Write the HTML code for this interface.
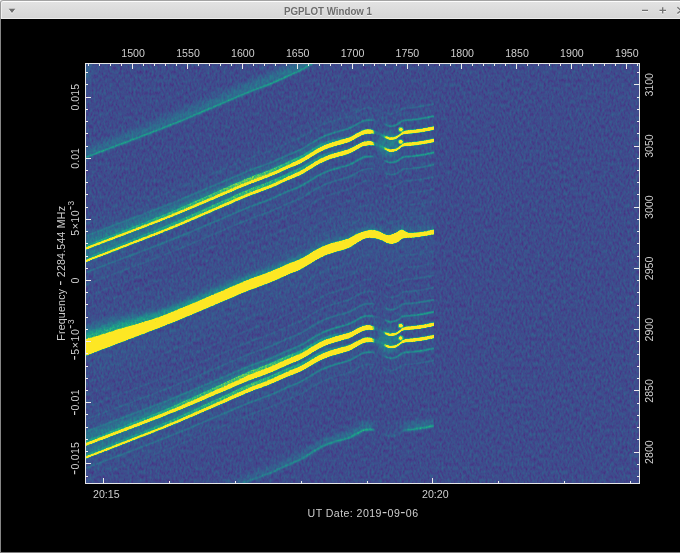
<!DOCTYPE html>
<html lang="en">
<head>
<meta charset="utf-8">
<title>PGPLOT Window 1</title>
<style>
html,body{margin:0;padding:0;background:#000;}
body{width:680px;height:553px;overflow:hidden;position:relative;font-family:"Liberation Sans",sans-serif;}
#win{position:absolute;left:0;top:0;width:680px;height:553px;background:#000;box-sizing:border-box;border-left:1px solid #868686;border-bottom:1px solid #7c7c7c;}
#titlebar{position:absolute;left:-1px;top:0;width:680px;height:19px;box-sizing:border-box;
  background:linear-gradient(#e3e3e3,#d5d5d5);border-top:1px solid #a4a4a4;border-left:1px solid #9a9a9a;border-top-left-radius:3px;
  box-shadow:inset 0 1px 0 #fdfdfd, inset 1px 0 0 #efefef, inset 0 -1px 0 #ececec;}
#title{opacity:0.99;position:absolute;left:-1.3px;width:656px;transform:scaleX(0.885);transform-origin:50% 50%;top:3px;height:14px;line-height:14px;text-align:center;font-weight:bold;font-size:11px;color:#6b6b6b;text-shadow:0 1px 0 #f4f4f4;letter-spacing:0px;}
#plot{position:absolute;left:0;top:0;}
#plot text{font-family:"Liberation Sans",sans-serif;font-size:10.6px;fill:#dedede;dominant-baseline:alphabetic;}
</style>
</head>
<body>
<div id="win">
<svg id="plot" width="680" height="553" viewBox="0 0 680 553" style="left:-1px">
<defs>
<filter id="cmap" x="0" y="0" width="100%" height="100%" filterUnits="objectBoundingBox" color-interpolation-filters="sRGB">
  <feTurbulence type="fractalNoise" baseFrequency="0.5 0.24" numOctaves="2" seed="7" result="t"/>
  <feColorMatrix in="t" type="matrix" values="1 0 0 0 0  1 0 0 0 0  1 0 0 0 0  0 0 0 0 1" result="n"/>
  <feTurbulence type="fractalNoise" baseFrequency="0.9 0.7" numOctaves="1" seed="3" result="t2"/>
  <feColorMatrix in="t2" type="matrix" values="0 1 0 0 0  0 1 0 0 0  0 1 0 0 0  0 0 0 0 1" result="n2"/>
  <feComposite in="SourceGraphic" in2="n2" operator="arithmetic" k1="0.7" k2="0.650" k3="0" k4="0" result="sp"/>
  <feComposite in="sp" in2="n" operator="arithmetic" k1="0" k2="1" k3="0.25" k4="0.103" result="s"/>
  <feComponentTransfer in="s">
    <feFuncR type="table" tableValues="0.275 0.284 0.289 0.289 0.284 0.276 0.264 0.249 0.233 0.217 0.202 0.187 0.174 0.161 0.149 0.138 0.128 0.121 0.121 0.132 0.158 0.197 0.246 0.304 0.369 0.440 0.516 0.596 0.678 0.762 0.846 0.926 0.993"/>
    <feFuncG type="table" tableValues="0.005 0.050 0.095 0.136 0.175 0.214 0.252 0.288 0.322 0.356 0.388 0.419 0.449 0.479 0.508 0.537 0.567 0.596 0.626 0.655 0.684 0.712 0.739 0.765 0.789 0.811 0.831 0.849 0.864 0.876 0.887 0.897 0.906"/>
    <feFuncB type="table" tableValues="0.353 0.398 0.438 0.472 0.500 0.522 0.538 0.549 0.556 0.560 0.562 0.562 0.562 0.560 0.558 0.555 0.551 0.544 0.533 0.520 0.502 0.479 0.452 0.420 0.383 0.341 0.294 0.243 0.190 0.137 0.100 0.104 0.144"/>
  </feComponentTransfer>
</filter>
<linearGradient id="gapg" gradientUnits="userSpaceOnUse" x1="370" y1="0" x2="390" y2="0">
  <stop offset="0" stop-color="#fff"/><stop offset="0.05" stop-color="#fff"/><stop offset="0.17" stop-color="#999"/><stop offset="0.27" stop-color="#1c1c1c"/>
  <stop offset="0.66" stop-color="#1c1c1c"/><stop offset="0.74" stop-color="#777"/><stop offset="0.86" stop-color="#fff"/><stop offset="1" stop-color="#fff"/>
</linearGradient>
<linearGradient id="gf" gradientUnits="userSpaceOnUse" x1="84" y1="0" x2="436" y2="0"><stop offset="0.000" stop-color="#fff" stop-opacity="0.320"/><stop offset="0.330" stop-color="#fff" stop-opacity="0.380"/><stop offset="0.614" stop-color="#fff" stop-opacity="0.550"/><stop offset="0.741" stop-color="#fff" stop-opacity="0.670"/><stop offset="0.912" stop-color="#fff" stop-opacity="0.700"/><stop offset="1.000" stop-color="#fff" stop-opacity="1.000"/></linearGradient>
<linearGradient id="gt" gradientUnits="userSpaceOnUse" x1="84" y1="0" x2="330" y2="0"><stop offset="0.000" stop-color="#fff" stop-opacity="0.500"/><stop offset="0.472" stop-color="#fff" stop-opacity="0.800"/><stop offset="1.000" stop-color="#fff" stop-opacity="1.000"/></linearGradient>
<linearGradient id="gl" gradientUnits="userSpaceOnUse" x1="84" y1="0" x2="436" y2="0"><stop offset="0.000" stop-color="#fff" stop-opacity="0.350"/><stop offset="0.472" stop-color="#fff" stop-opacity="0.500"/><stop offset="0.699" stop-color="#fff" stop-opacity="0.750"/><stop offset="0.790" stop-color="#fff" stop-opacity="1.250"/><stop offset="0.821" stop-color="#fff" stop-opacity="1.100"/><stop offset="0.835" stop-color="#fff" stop-opacity="0.150"/><stop offset="0.903" stop-color="#fff" stop-opacity="0.200"/><stop offset="0.923" stop-color="#fff" stop-opacity="0.900"/><stop offset="1.000" stop-color="#fff" stop-opacity="1.000"/></linearGradient>
<linearGradient id="gw" gradientUnits="userSpaceOnUse" x1="84" y1="0" x2="436" y2="0"><stop offset="0.000" stop-color="#fff" stop-opacity="0.075"/><stop offset="0.188" stop-color="#fff" stop-opacity="0.075"/><stop offset="0.472" stop-color="#fff" stop-opacity="0.080"/><stop offset="0.670" stop-color="#fff" stop-opacity="0.050"/><stop offset="0.741" stop-color="#fff" stop-opacity="0.020"/><stop offset="0.818" stop-color="#fff" stop-opacity="0.000"/><stop offset="1.000" stop-color="#fff" stop-opacity="0.000"/></linearGradient>
<linearGradient id="gn" gradientUnits="userSpaceOnUse" x1="84" y1="0" x2="436" y2="0"><stop offset="0.000" stop-color="#fff" stop-opacity="0.180"/><stop offset="0.188" stop-color="#fff" stop-opacity="0.240"/><stop offset="0.472" stop-color="#fff" stop-opacity="0.420"/><stop offset="0.670" stop-color="#fff" stop-opacity="0.220"/><stop offset="0.741" stop-color="#fff" stop-opacity="0.080"/><stop offset="0.818" stop-color="#fff" stop-opacity="0.040"/><stop offset="1.000" stop-color="#fff" stop-opacity="0.030"/></linearGradient>
<linearGradient id="ge" gradientUnits="userSpaceOnUse" x1="84" y1="0" x2="436" y2="0"><stop offset="0.000" stop-color="#fff" stop-opacity="0.095"/><stop offset="0.102" stop-color="#fff" stop-opacity="0.095"/><stop offset="0.216" stop-color="#fff" stop-opacity="0.080"/><stop offset="0.472" stop-color="#fff" stop-opacity="0.060"/><stop offset="0.727" stop-color="#fff" stop-opacity="0.040"/><stop offset="1.000" stop-color="#fff" stop-opacity="0.030"/></linearGradient>
<linearGradient id="ge2" gradientUnits="userSpaceOnUse" x1="84" y1="0" x2="436" y2="0"><stop offset="0.000" stop-color="#fff" stop-opacity="0.340"/><stop offset="0.102" stop-color="#fff" stop-opacity="0.320"/><stop offset="0.216" stop-color="#fff" stop-opacity="0.280"/><stop offset="0.472" stop-color="#fff" stop-opacity="0.200"/><stop offset="0.727" stop-color="#fff" stop-opacity="0.100"/><stop offset="1.000" stop-color="#fff" stop-opacity="0.050"/></linearGradient>
<mask id="gapmask" maskUnits="userSpaceOnUse" x="0" y="0" width="680" height="553">
  <rect x="0" y="0" width="680" height="553" fill="url(#gapg)"/>
</mask>
<filter id="b4" x="-5%" y="-5%" width="110%" height="110%" color-interpolation-filters="sRGB"><feGaussianBlur stdDeviation="2.2 2.6"/></filter>
<filter id="b1" x="-5%" y="-5%" width="110%" height="110%" color-interpolation-filters="sRGB"><feGaussianBlur stdDeviation="0.8"/></filter>
<filter id="b0" x="-5%" y="-5%" width="110%" height="110%" color-interpolation-filters="sRGB"><feGaussianBlur stdDeviation="0.62"/></filter>
<clipPath id="cp"><rect x="85" y="63" width="349" height="421"/></clipPath>
<clipPath id="box"><rect x="85" y="63" width="555" height="421"/></clipPath>
</defs>
<g clip-path="url(#box)">
<g filter="url(#cmap)">
<rect x="80" y="58" width="565" height="431" fill="#000"/>
<g clip-path="url(#cp)">
<g filter="url(#b4)">
<ellipse cx="84" cy="64" rx="9" ry="20" fill="#fff" fill-opacity="0.07"/>
<path d="M84.0,255.1 L87.0,253.9 L90.0,252.8 L93.0,251.6 L96.0,250.5 L99.0,249.3 L102.0,248.2 L105.0,247.1 L108.0,245.9 L111.0,244.8 L114.0,243.7 L117.0,242.5 L120.0,241.4 L123.0,240.3 L126.0,239.1 L129.0,238.0 L132.0,236.8 L135.0,235.7 L138.0,234.6 L141.0,233.4 L144.0,232.3 L147.0,231.1 L150.0,230.0 L153.0,228.8 L156.0,227.7 L159.0,226.5 L162.0,225.4 L165.0,224.2 L168.0,223.0 L171.0,221.8 L174.0,220.6 L177.0,219.4 L180.0,218.1 L183.0,216.9 L186.0,215.6 L189.0,214.4 L192.0,213.1 L195.0,211.8 L198.0,210.6 L201.0,209.3 L204.0,208.0 L207.0,206.7 L210.0,205.4 L213.0,204.2 L216.0,202.9 L219.0,201.6 L222.0,200.4 L225.0,199.1 L228.0,197.8 L231.0,196.5 L234.0,195.2 L237.0,193.9 L240.0,192.6 L243.0,191.4 L246.0,190.1 L249.0,188.9 L252.0,187.7 L255.0,186.6 L258.0,185.5 L261.0,184.4 L264.0,183.3 L267.0,182.2 L270.0,181.0 L273.0,179.7 L276.0,178.4 L279.0,177.0 L282.0,175.7 L285.0,174.3 L288.0,172.9 L291.0,171.6 L294.0,170.3 L297.0,169.0 L300.0,167.6 L303.0,166.0 L306.0,164.2 L309.0,162.3 L312.0,160.3 L315.0,158.5 L318.0,156.7 L321.0,155.1 L324.0,153.7 L327.0,152.4 L330.0,151.3 L333.0,150.3 L336.0,149.4 L339.0,148.6 L342.0,147.7 L345.0,146.9 L348.0,146.0 L351.0,144.9 L354.0,143.2 L357.0,141.5 L360.0,139.9 L363.0,138.4 L366.0,137.7 L369.0,137.4 L372.0,137.6 L375.0,138.2 L378.0,139.1 L381.0,140.3 L384.0,142.0 L387.0,143.4 L390.0,144.3 L393.0,144.1 L396.0,143.4 L399.0,141.5 L402.0,139.1 L405.0,138.0 L408.0,137.7 L411.0,137.5 L414.0,137.2 L417.0,136.8 L420.0,136.4 L423.0,135.9 L426.0,135.4 L429.0,134.8 L432.0,134.2 L434.0,133.8" fill="none" stroke="#ffffff" stroke-width="70.00" stroke-opacity="0.012" />
<path d="M84.0,255.1 L87.0,253.9 L90.0,252.8 L93.0,251.6 L96.0,250.5 L99.0,249.3 L102.0,248.2 L105.0,247.1 L108.0,245.9 L111.0,244.8 L114.0,243.7 L117.0,242.5 L120.0,241.4 L123.0,240.3 L126.0,239.1 L129.0,238.0 L132.0,236.8 L135.0,235.7 L138.0,234.6 L141.0,233.4 L144.0,232.3 L147.0,231.1 L150.0,230.0 L153.0,228.8 L156.0,227.7 L159.0,226.5 L162.0,225.4 L165.0,224.2 L168.0,223.0 L171.0,221.8 L174.0,220.6 L177.0,219.4 L180.0,218.1 L183.0,216.9 L186.0,215.6 L189.0,214.4 L192.0,213.1 L195.0,211.8 L198.0,210.6 L201.0,209.3 L204.0,208.0 L207.0,206.7 L210.0,205.4 L213.0,204.2 L216.0,202.9 L219.0,201.6 L222.0,200.4 L225.0,199.1 L228.0,197.8 L231.0,196.5 L234.0,195.2 L237.0,193.9 L240.0,192.6 L243.0,191.4 L246.0,190.1 L249.0,188.9 L252.0,187.7 L255.0,186.6 L258.0,185.5 L261.0,184.4 L264.0,183.3 L267.0,182.2 L270.0,181.0 L273.0,179.7 L276.0,178.4 L279.0,177.0 L282.0,175.7 L285.0,174.3 L288.0,172.9 L291.0,171.6 L294.0,170.3 L297.0,169.0 L300.0,167.6 L303.0,166.0 L306.0,164.2 L309.0,162.3 L312.0,160.3 L315.0,158.5 L318.0,156.7 L321.0,155.1 L324.0,153.7 L327.0,152.4 L330.0,151.3 L333.0,150.3 L336.0,149.4 L339.0,148.6 L342.0,147.7 L345.0,146.9 L348.0,146.0 L351.0,144.9 L354.0,143.2 L357.0,141.5 L360.0,139.9 L363.0,138.4 L366.0,137.7 L369.0,137.4 L372.0,137.6 L375.0,138.2 L378.0,139.1 L381.0,140.3 L384.0,142.0 L387.0,143.4 L390.0,144.3 L393.0,144.1 L396.0,143.4 L399.0,141.5 L402.0,139.1 L405.0,138.0 L408.0,137.7 L411.0,137.5 L414.0,137.2 L417.0,136.8 L420.0,136.4 L423.0,135.9 L426.0,135.4 L429.0,134.8 L432.0,134.2 L434.0,133.8" fill="none" stroke="#ffffff" stroke-width="50.00" stroke-opacity="0.012" />
<path d="M84.0,255.1 L87.0,253.9 L90.0,252.8 L93.0,251.6 L96.0,250.5 L99.0,249.3 L102.0,248.2 L105.0,247.1 L108.0,245.9 L111.0,244.8 L114.0,243.7 L117.0,242.5 L120.0,241.4 L123.0,240.3 L126.0,239.1 L129.0,238.0 L132.0,236.8 L135.0,235.7 L138.0,234.6 L141.0,233.4 L144.0,232.3 L147.0,231.1 L150.0,230.0 L153.0,228.8 L156.0,227.7 L159.0,226.5 L162.0,225.4 L165.0,224.2 L168.0,223.0 L171.0,221.8 L174.0,220.6 L177.0,219.4 L180.0,218.1 L183.0,216.9 L186.0,215.6 L189.0,214.4 L192.0,213.1 L195.0,211.8 L198.0,210.6 L201.0,209.3 L204.0,208.0 L207.0,206.7 L210.0,205.4 L213.0,204.2 L216.0,202.9 L219.0,201.6 L222.0,200.4 L225.0,199.1 L228.0,197.8 L231.0,196.5 L234.0,195.2 L237.0,193.9 L240.0,192.6 L243.0,191.4 L246.0,190.1 L249.0,188.9 L252.0,187.7 L255.0,186.6 L258.0,185.5 L261.0,184.4 L264.0,183.3 L267.0,182.2 L270.0,181.0 L273.0,179.7 L276.0,178.4 L279.0,177.0 L282.0,175.7 L285.0,174.3 L288.0,172.9 L291.0,171.6 L294.0,170.3 L297.0,169.0 L300.0,167.6 L303.0,166.0 L306.0,164.2 L309.0,162.3 L312.0,160.3 L315.0,158.5 L318.0,156.7 L321.0,155.1 L324.0,153.7 L327.0,152.4 L330.0,151.3 L333.0,150.3 L336.0,149.4 L339.0,148.6 L342.0,147.7 L345.0,146.9 L348.0,146.0 L351.0,144.9 L354.0,143.2 L357.0,141.5 L360.0,139.9 L363.0,138.4 L366.0,137.7 L369.0,137.4 L372.0,137.6 L375.0,138.2 L378.0,139.1 L381.0,140.3 L384.0,142.0 L387.0,143.4 L390.0,144.3 L393.0,144.1 L396.0,143.4 L399.0,141.5 L402.0,139.1 L405.0,138.0 L408.0,137.7 L411.0,137.5 L414.0,137.2 L417.0,136.8 L420.0,136.4 L423.0,135.9 L426.0,135.4 L429.0,134.8 L432.0,134.2 L434.0,133.8" fill="none" stroke="#ffffff" stroke-width="30.00" stroke-opacity="0.012" />
<path d="M84.0,351.1 L87.0,349.9 L90.0,348.8 L93.0,347.6 L96.0,346.5 L99.0,345.3 L102.0,344.2 L105.0,343.1 L108.0,341.9 L111.0,340.8 L114.0,339.7 L117.0,338.5 L120.0,337.4 L123.0,336.3 L126.0,335.1 L129.0,334.0 L132.0,332.8 L135.0,331.7 L138.0,330.6 L141.0,329.4 L144.0,328.3 L147.0,327.1 L150.0,326.0 L153.0,324.8 L156.0,323.7 L159.0,322.5 L162.0,321.4 L165.0,320.2 L168.0,319.0 L171.0,317.8 L174.0,316.6 L177.0,315.4 L180.0,314.1 L183.0,312.9 L186.0,311.6 L189.0,310.4 L192.0,309.1 L195.0,307.8 L198.0,306.6 L201.0,305.3 L204.0,304.0 L207.0,302.7 L210.0,301.4 L213.0,300.2 L216.0,298.9 L219.0,297.6 L222.0,296.4 L225.0,295.1 L228.0,293.8 L231.0,292.5 L234.0,291.2 L237.0,289.9 L240.0,288.6 L243.0,287.4 L246.0,286.1 L249.0,284.9 L252.0,283.7 L255.0,282.6 L258.0,281.5 L261.0,280.4 L264.0,279.3 L267.0,278.2 L270.0,277.0 L273.0,275.7 L276.0,274.4 L279.0,273.0 L282.0,271.7 L285.0,270.3 L288.0,268.9 L291.0,267.6 L294.0,266.3 L297.0,265.0 L300.0,263.6 L303.0,262.0 L306.0,260.2 L309.0,258.3 L312.0,256.3 L315.0,254.5 L318.0,252.7 L321.0,251.1 L324.0,249.7 L327.0,248.4 L330.0,247.3 L333.0,246.3 L336.0,245.4 L339.0,244.6 L342.0,243.7 L345.0,242.9 L348.0,242.0 L351.0,240.9 L354.0,239.2 L357.0,237.5 L360.0,235.9 L363.0,234.4 L366.0,233.7 L369.0,233.4 L372.0,233.6 L375.0,234.2 L378.0,235.1 L381.0,236.3 L384.0,238.0 L387.0,239.4 L390.0,240.3 L393.0,240.1 L396.0,239.4 L399.0,237.5 L402.0,235.1 L405.0,234.0 L408.0,233.7 L411.0,233.5 L414.0,233.2 L417.0,232.8 L420.0,232.4 L423.0,231.9 L426.0,231.4 L429.0,230.8 L432.0,230.2 L434.0,229.8" fill="none" stroke="#ffffff" stroke-width="70.00" stroke-opacity="0.012" />
<path d="M84.0,351.1 L87.0,349.9 L90.0,348.8 L93.0,347.6 L96.0,346.5 L99.0,345.3 L102.0,344.2 L105.0,343.1 L108.0,341.9 L111.0,340.8 L114.0,339.7 L117.0,338.5 L120.0,337.4 L123.0,336.3 L126.0,335.1 L129.0,334.0 L132.0,332.8 L135.0,331.7 L138.0,330.6 L141.0,329.4 L144.0,328.3 L147.0,327.1 L150.0,326.0 L153.0,324.8 L156.0,323.7 L159.0,322.5 L162.0,321.4 L165.0,320.2 L168.0,319.0 L171.0,317.8 L174.0,316.6 L177.0,315.4 L180.0,314.1 L183.0,312.9 L186.0,311.6 L189.0,310.4 L192.0,309.1 L195.0,307.8 L198.0,306.6 L201.0,305.3 L204.0,304.0 L207.0,302.7 L210.0,301.4 L213.0,300.2 L216.0,298.9 L219.0,297.6 L222.0,296.4 L225.0,295.1 L228.0,293.8 L231.0,292.5 L234.0,291.2 L237.0,289.9 L240.0,288.6 L243.0,287.4 L246.0,286.1 L249.0,284.9 L252.0,283.7 L255.0,282.6 L258.0,281.5 L261.0,280.4 L264.0,279.3 L267.0,278.2 L270.0,277.0 L273.0,275.7 L276.0,274.4 L279.0,273.0 L282.0,271.7 L285.0,270.3 L288.0,268.9 L291.0,267.6 L294.0,266.3 L297.0,265.0 L300.0,263.6 L303.0,262.0 L306.0,260.2 L309.0,258.3 L312.0,256.3 L315.0,254.5 L318.0,252.7 L321.0,251.1 L324.0,249.7 L327.0,248.4 L330.0,247.3 L333.0,246.3 L336.0,245.4 L339.0,244.6 L342.0,243.7 L345.0,242.9 L348.0,242.0 L351.0,240.9 L354.0,239.2 L357.0,237.5 L360.0,235.9 L363.0,234.4 L366.0,233.7 L369.0,233.4 L372.0,233.6 L375.0,234.2 L378.0,235.1 L381.0,236.3 L384.0,238.0 L387.0,239.4 L390.0,240.3 L393.0,240.1 L396.0,239.4 L399.0,237.5 L402.0,235.1 L405.0,234.0 L408.0,233.7 L411.0,233.5 L414.0,233.2 L417.0,232.8 L420.0,232.4 L423.0,231.9 L426.0,231.4 L429.0,230.8 L432.0,230.2 L434.0,229.8" fill="none" stroke="#ffffff" stroke-width="50.00" stroke-opacity="0.012" />
<path d="M84.0,351.1 L87.0,349.9 L90.0,348.8 L93.0,347.6 L96.0,346.5 L99.0,345.3 L102.0,344.2 L105.0,343.1 L108.0,341.9 L111.0,340.8 L114.0,339.7 L117.0,338.5 L120.0,337.4 L123.0,336.3 L126.0,335.1 L129.0,334.0 L132.0,332.8 L135.0,331.7 L138.0,330.6 L141.0,329.4 L144.0,328.3 L147.0,327.1 L150.0,326.0 L153.0,324.8 L156.0,323.7 L159.0,322.5 L162.0,321.4 L165.0,320.2 L168.0,319.0 L171.0,317.8 L174.0,316.6 L177.0,315.4 L180.0,314.1 L183.0,312.9 L186.0,311.6 L189.0,310.4 L192.0,309.1 L195.0,307.8 L198.0,306.6 L201.0,305.3 L204.0,304.0 L207.0,302.7 L210.0,301.4 L213.0,300.2 L216.0,298.9 L219.0,297.6 L222.0,296.4 L225.0,295.1 L228.0,293.8 L231.0,292.5 L234.0,291.2 L237.0,289.9 L240.0,288.6 L243.0,287.4 L246.0,286.1 L249.0,284.9 L252.0,283.7 L255.0,282.6 L258.0,281.5 L261.0,280.4 L264.0,279.3 L267.0,278.2 L270.0,277.0 L273.0,275.7 L276.0,274.4 L279.0,273.0 L282.0,271.7 L285.0,270.3 L288.0,268.9 L291.0,267.6 L294.0,266.3 L297.0,265.0 L300.0,263.6 L303.0,262.0 L306.0,260.2 L309.0,258.3 L312.0,256.3 L315.0,254.5 L318.0,252.7 L321.0,251.1 L324.0,249.7 L327.0,248.4 L330.0,247.3 L333.0,246.3 L336.0,245.4 L339.0,244.6 L342.0,243.7 L345.0,242.9 L348.0,242.0 L351.0,240.9 L354.0,239.2 L357.0,237.5 L360.0,235.9 L363.0,234.4 L366.0,233.7 L369.0,233.4 L372.0,233.6 L375.0,234.2 L378.0,235.1 L381.0,236.3 L384.0,238.0 L387.0,239.4 L390.0,240.3 L393.0,240.1 L396.0,239.4 L399.0,237.5 L402.0,235.1 L405.0,234.0 L408.0,233.7 L411.0,233.5 L414.0,233.2 L417.0,232.8 L420.0,232.4 L423.0,231.9 L426.0,231.4 L429.0,230.8 L432.0,230.2 L434.0,229.8" fill="none" stroke="#ffffff" stroke-width="30.00" stroke-opacity="0.012" />
<path d="M84.0,450.1 L87.0,448.9 L90.0,447.8 L93.0,446.6 L96.0,445.5 L99.0,444.3 L102.0,443.2 L105.0,442.1 L108.0,440.9 L111.0,439.8 L114.0,438.7 L117.0,437.5 L120.0,436.4 L123.0,435.3 L126.0,434.1 L129.0,433.0 L132.0,431.8 L135.0,430.7 L138.0,429.6 L141.0,428.4 L144.0,427.3 L147.0,426.1 L150.0,425.0 L153.0,423.8 L156.0,422.7 L159.0,421.5 L162.0,420.4 L165.0,419.2 L168.0,418.0 L171.0,416.8 L174.0,415.6 L177.0,414.4 L180.0,413.1 L183.0,411.9 L186.0,410.6 L189.0,409.4 L192.0,408.1 L195.0,406.8 L198.0,405.6 L201.0,404.3 L204.0,403.0 L207.0,401.7 L210.0,400.4 L213.0,399.2 L216.0,397.9 L219.0,396.6 L222.0,395.4 L225.0,394.1 L228.0,392.8 L231.0,391.5 L234.0,390.2 L237.0,388.9 L240.0,387.6 L243.0,386.4 L246.0,385.1 L249.0,383.9 L252.0,382.7 L255.0,381.6 L258.0,380.5 L261.0,379.4 L264.0,378.3 L267.0,377.2 L270.0,376.0 L273.0,374.7 L276.0,373.4 L279.0,372.0 L282.0,370.7 L285.0,369.3 L288.0,367.9 L291.0,366.6 L294.0,365.3 L297.0,364.0 L300.0,362.6 L303.0,361.0 L306.0,359.2 L309.0,357.3 L312.0,355.3 L315.0,353.5 L318.0,351.7 L321.0,350.1 L324.0,348.7 L327.0,347.4 L330.0,346.3 L333.0,345.3 L336.0,344.4 L339.0,343.6 L342.0,342.7 L345.0,341.9 L348.0,341.0 L351.0,339.9 L354.0,338.2 L357.0,336.5 L360.0,334.9 L363.0,333.4 L366.0,332.7 L369.0,332.4 L372.0,332.6 L375.0,333.2 L378.0,334.1 L381.0,335.3 L384.0,337.0 L387.0,338.4 L390.0,339.3 L393.0,339.1 L396.0,338.4 L399.0,336.5 L402.0,334.1 L405.0,333.0 L408.0,332.7 L411.0,332.5 L414.0,332.2 L417.0,331.8 L420.0,331.4 L423.0,330.9 L426.0,330.4 L429.0,329.8 L432.0,329.2 L434.0,328.8" fill="none" stroke="#ffffff" stroke-width="70.00" stroke-opacity="0.012" />
<path d="M84.0,450.1 L87.0,448.9 L90.0,447.8 L93.0,446.6 L96.0,445.5 L99.0,444.3 L102.0,443.2 L105.0,442.1 L108.0,440.9 L111.0,439.8 L114.0,438.7 L117.0,437.5 L120.0,436.4 L123.0,435.3 L126.0,434.1 L129.0,433.0 L132.0,431.8 L135.0,430.7 L138.0,429.6 L141.0,428.4 L144.0,427.3 L147.0,426.1 L150.0,425.0 L153.0,423.8 L156.0,422.7 L159.0,421.5 L162.0,420.4 L165.0,419.2 L168.0,418.0 L171.0,416.8 L174.0,415.6 L177.0,414.4 L180.0,413.1 L183.0,411.9 L186.0,410.6 L189.0,409.4 L192.0,408.1 L195.0,406.8 L198.0,405.6 L201.0,404.3 L204.0,403.0 L207.0,401.7 L210.0,400.4 L213.0,399.2 L216.0,397.9 L219.0,396.6 L222.0,395.4 L225.0,394.1 L228.0,392.8 L231.0,391.5 L234.0,390.2 L237.0,388.9 L240.0,387.6 L243.0,386.4 L246.0,385.1 L249.0,383.9 L252.0,382.7 L255.0,381.6 L258.0,380.5 L261.0,379.4 L264.0,378.3 L267.0,377.2 L270.0,376.0 L273.0,374.7 L276.0,373.4 L279.0,372.0 L282.0,370.7 L285.0,369.3 L288.0,367.9 L291.0,366.6 L294.0,365.3 L297.0,364.0 L300.0,362.6 L303.0,361.0 L306.0,359.2 L309.0,357.3 L312.0,355.3 L315.0,353.5 L318.0,351.7 L321.0,350.1 L324.0,348.7 L327.0,347.4 L330.0,346.3 L333.0,345.3 L336.0,344.4 L339.0,343.6 L342.0,342.7 L345.0,341.9 L348.0,341.0 L351.0,339.9 L354.0,338.2 L357.0,336.5 L360.0,334.9 L363.0,333.4 L366.0,332.7 L369.0,332.4 L372.0,332.6 L375.0,333.2 L378.0,334.1 L381.0,335.3 L384.0,337.0 L387.0,338.4 L390.0,339.3 L393.0,339.1 L396.0,338.4 L399.0,336.5 L402.0,334.1 L405.0,333.0 L408.0,332.7 L411.0,332.5 L414.0,332.2 L417.0,331.8 L420.0,331.4 L423.0,330.9 L426.0,330.4 L429.0,329.8 L432.0,329.2 L434.0,328.8" fill="none" stroke="#ffffff" stroke-width="50.00" stroke-opacity="0.012" />
<path d="M84.0,450.1 L87.0,448.9 L90.0,447.8 L93.0,446.6 L96.0,445.5 L99.0,444.3 L102.0,443.2 L105.0,442.1 L108.0,440.9 L111.0,439.8 L114.0,438.7 L117.0,437.5 L120.0,436.4 L123.0,435.3 L126.0,434.1 L129.0,433.0 L132.0,431.8 L135.0,430.7 L138.0,429.6 L141.0,428.4 L144.0,427.3 L147.0,426.1 L150.0,425.0 L153.0,423.8 L156.0,422.7 L159.0,421.5 L162.0,420.4 L165.0,419.2 L168.0,418.0 L171.0,416.8 L174.0,415.6 L177.0,414.4 L180.0,413.1 L183.0,411.9 L186.0,410.6 L189.0,409.4 L192.0,408.1 L195.0,406.8 L198.0,405.6 L201.0,404.3 L204.0,403.0 L207.0,401.7 L210.0,400.4 L213.0,399.2 L216.0,397.9 L219.0,396.6 L222.0,395.4 L225.0,394.1 L228.0,392.8 L231.0,391.5 L234.0,390.2 L237.0,388.9 L240.0,387.6 L243.0,386.4 L246.0,385.1 L249.0,383.9 L252.0,382.7 L255.0,381.6 L258.0,380.5 L261.0,379.4 L264.0,378.3 L267.0,377.2 L270.0,376.0 L273.0,374.7 L276.0,373.4 L279.0,372.0 L282.0,370.7 L285.0,369.3 L288.0,367.9 L291.0,366.6 L294.0,365.3 L297.0,364.0 L300.0,362.6 L303.0,361.0 L306.0,359.2 L309.0,357.3 L312.0,355.3 L315.0,353.5 L318.0,351.7 L321.0,350.1 L324.0,348.7 L327.0,347.4 L330.0,346.3 L333.0,345.3 L336.0,344.4 L339.0,343.6 L342.0,342.7 L345.0,341.9 L348.0,341.0 L351.0,339.9 L354.0,338.2 L357.0,336.5 L360.0,334.9 L363.0,333.4 L366.0,332.7 L369.0,332.4 L372.0,332.6 L375.0,333.2 L378.0,334.1 L381.0,335.3 L384.0,337.0 L387.0,338.4 L390.0,339.3 L393.0,339.1 L396.0,338.4 L399.0,336.5 L402.0,334.1 L405.0,333.0 L408.0,332.7 L411.0,332.5 L414.0,332.2 L417.0,331.8 L420.0,331.4 L423.0,330.9 L426.0,330.4 L429.0,329.8 L432.0,329.2 L434.0,328.8" fill="none" stroke="#ffffff" stroke-width="30.00" stroke-opacity="0.012" />
<path d="M84.0,325.8 L87.0,325.0 L90.0,324.3 L93.0,323.5 L96.0,322.8 L99.0,322.0 L102.0,321.1 L105.0,320.2 L108.0,319.4 L111.0,318.5 L114.0,317.6 L117.0,316.9 L120.0,316.2 L123.0,315.5 L126.0,315.0 L129.0,314.6 L132.0,314.2 L135.0,313.8 L138.0,313.4 L141.0,313.1 L144.0,312.7 L147.0,312.3 L150.0,311.8 L153.0,311.3 L156.0,310.7 L159.0,309.9 L162.0,308.9 L165.0,307.9 L168.0,306.8 L171.0,305.7 L174.0,304.6 L177.0,303.5 L180.0,302.4 L183.0,301.3 L186.0,300.1 L189.0,298.9 L192.0,297.7 L195.0,296.5 L198.0,295.3 L201.0,294.1 L204.0,292.9 L207.0,291.7 L210.0,290.5 L213.0,289.3 L216.0,288.1 L219.0,286.8 L222.0,285.6 L225.0,284.4 L228.0,283.2 L231.0,281.9 L234.0,280.7 L237.0,279.5 L240.0,278.2 L243.0,277.1 L246.0,275.9 L249.0,274.7 L252.0,273.6 L255.0,272.6 L258.0,271.6 L261.0,270.6 L264.0,269.6 L267.0,268.5 L270.0,267.4 L273.0,266.3 L276.0,265.0 L279.0,263.8 L282.0,262.5 L285.0,261.2 L288.0,260.0 L291.0,258.8 L294.0,257.7 L297.0,256.6 L300.0,255.4 L303.0,253.9 L306.0,252.2 L309.0,250.4 L312.0,248.7 L315.0,247.0 L318.0,245.3 L321.0,243.8 L324.0,242.5 L327.0,241.4 L330.0,240.4 L333.0,239.5 L336.0,238.8 L339.0,238.0 L342.0,237.2 L345.0,236.4 L348.0,235.5 L351.0,234.3 L354.0,232.5 L357.0,231.0 L360.0,229.8 L363.0,228.7 L366.0,227.9 L369.0,227.3 L372.0,227.1 L375.0,227.4 L378.0,228.2 L381.0,229.6 L384.0,231.3 L387.0,232.5 L390.0,232.5 L393.0,231.3 L396.0,230.2 L399.0,228.2 L402.0,226.9 L405.0,228.4 L408.0,230.2 L411.0,230.6 L414.0,230.4 L417.0,230.1 L420.0,229.8 L423.0,229.3 L426.0,228.8 L429.0,228.3 L432.0,227.6 L434.0,227.2 L434.0,229.7 L432.0,230.2 L429.0,230.8 L426.0,231.4 L423.0,231.9 L420.0,232.4 L417.0,232.7 L414.0,233.0 L411.0,233.3 L408.0,232.9 L405.0,231.2 L402.0,229.7 L399.0,231.1 L396.0,233.1 L393.0,234.2 L390.0,235.4 L387.0,235.4 L384.0,234.3 L381.0,232.6 L378.0,231.3 L375.0,230.5 L372.0,230.2 L369.0,230.4 L366.0,231.1 L363.0,231.9 L360.0,233.1 L357.0,234.2 L354.0,235.8 L351.0,237.6 L348.0,238.9 L345.0,239.9 L342.0,240.7 L339.0,241.5 L336.0,242.3 L333.0,243.1 L330.0,244.0 L327.0,245.1 L324.0,246.3 L321.0,247.6 L318.0,249.1 L315.0,250.8 L312.0,252.6 L309.0,254.4 L306.0,256.2 L303.0,257.9 L300.0,259.5 L297.0,260.8 L294.0,261.9 L291.0,263.0 L288.0,264.3 L285.0,265.5 L282.0,266.9 L279.0,268.2 L276.0,269.5 L273.0,270.8 L270.0,272.0 L267.0,273.2 L264.0,274.3 L261.0,275.4 L258.0,276.4 L255.0,277.5 L252.0,278.6 L249.0,279.8 L246.0,281.0 L243.0,282.2 L240.0,283.4 L237.0,284.7 L234.0,286.0 L231.0,287.3 L228.0,288.6 L225.0,289.9 L222.0,291.2 L219.0,292.5 L216.0,293.7 L213.0,295.0 L210.0,296.3 L207.0,297.6 L204.0,298.9 L201.0,300.2 L198.0,301.4 L195.0,302.7 L192.0,304.0 L189.0,305.3 L186.0,306.5 L183.0,307.8 L180.0,309.0 L177.0,310.3 L174.0,311.5 L171.0,312.7 L168.0,313.9 L165.0,315.1 L162.0,316.3 L159.0,317.5 L156.0,318.5 L153.0,319.5 L150.0,320.4 L147.0,321.3 L144.0,322.2 L141.0,323.1 L138.0,324.1 L135.0,324.9 L132.0,325.8 L129.0,326.7 L126.0,327.5 L123.0,328.3 L120.0,329.2 L117.0,330.0 L114.0,330.9 L111.0,331.9 L108.0,332.9 L105.0,333.9 L102.0,334.8 L99.0,335.8 L96.0,336.6 L93.0,337.4 L90.0,338.2 L87.0,339.0 L84.0,339.8Z" fill="url(#ge)" fill-opacity="1.000"/>
<path d="M84.0,330.8 L87.0,330.0 L90.0,329.2 L93.0,328.5 L96.0,327.7 L99.0,326.9 L102.0,326.0 L105.0,325.1 L108.0,324.1 L111.0,323.2 L114.0,322.3 L117.0,321.4 L120.0,320.7 L123.0,319.9 L126.0,319.3 L129.0,318.7 L132.0,318.0 L135.0,317.4 L138.0,316.8 L141.0,316.2 L144.0,315.6 L147.0,315.0 L150.0,314.3 L153.0,313.6 L156.0,312.8 L159.0,311.9 L162.0,310.9 L165.0,309.8 L168.0,308.7 L171.0,307.5 L174.0,306.4 L177.0,305.2 L180.0,304.0 L183.0,302.9 L186.0,301.7 L189.0,300.4 L192.0,299.2 L195.0,298.0 L198.0,296.8 L201.0,295.5 L204.0,294.3 L207.0,293.0 L210.0,291.8 L213.0,290.6 L216.0,289.3 L219.0,288.1 L222.0,286.8 L225.0,285.6 L228.0,284.3 L231.0,283.1 L234.0,281.8 L237.0,280.6 L240.0,279.3 L243.0,278.1 L246.0,276.9 L249.0,275.7 L252.0,274.6 L255.0,273.6 L258.0,272.5 L261.0,271.5 L264.0,270.5 L267.0,269.4 L270.0,268.3 L273.0,267.1 L276.0,265.8 L279.0,264.6 L282.0,263.3 L285.0,262.0 L288.0,260.7 L291.0,259.5 L294.0,258.4 L297.0,257.3 L300.0,256.1 L303.0,254.5 L306.0,252.8 L309.0,251.1 L312.0,249.3 L315.0,247.5 L318.0,245.9 L321.0,244.4 L324.0,243.1 L327.0,241.9 L330.0,240.9 L333.0,240.0 L336.0,239.3 L339.0,238.5 L342.0,237.7 L345.0,236.9 L348.0,236.0 L351.0,234.7 L354.0,233.0 L357.0,231.4 L360.0,230.3 L363.0,229.2 L366.0,228.4 L369.0,227.7 L372.0,227.5 L375.0,227.9 L378.0,228.7 L381.0,230.0 L384.0,231.8 L387.0,232.9 L390.0,232.9 L393.0,231.8 L396.0,230.6 L399.0,228.7 L402.0,227.4 L405.0,228.8 L408.0,230.6 L411.0,231.0 L414.0,230.8 L417.0,230.5 L420.0,230.2 L423.0,229.8 L426.0,229.3 L429.0,228.7 L432.0,228.1 L434.0,227.7 L434.0,229.7 L432.0,230.2 L429.0,230.8 L426.0,231.4 L423.0,231.9 L420.0,232.4 L417.0,232.7 L414.0,233.0 L411.0,233.3 L408.0,232.9 L405.0,231.2 L402.0,229.7 L399.0,231.1 L396.0,233.1 L393.0,234.2 L390.0,235.4 L387.0,235.4 L384.0,234.3 L381.0,232.6 L378.0,231.3 L375.0,230.5 L372.0,230.2 L369.0,230.4 L366.0,231.1 L363.0,231.9 L360.0,233.1 L357.0,234.2 L354.0,235.8 L351.0,237.6 L348.0,238.9 L345.0,239.9 L342.0,240.7 L339.0,241.5 L336.0,242.3 L333.0,243.1 L330.0,244.0 L327.0,245.1 L324.0,246.3 L321.0,247.6 L318.0,249.1 L315.0,250.8 L312.0,252.6 L309.0,254.4 L306.0,256.2 L303.0,257.9 L300.0,259.5 L297.0,260.8 L294.0,261.9 L291.0,263.0 L288.0,264.3 L285.0,265.5 L282.0,266.9 L279.0,268.2 L276.0,269.5 L273.0,270.8 L270.0,272.0 L267.0,273.2 L264.0,274.3 L261.0,275.4 L258.0,276.4 L255.0,277.5 L252.0,278.6 L249.0,279.8 L246.0,281.0 L243.0,282.2 L240.0,283.4 L237.0,284.7 L234.0,286.0 L231.0,287.3 L228.0,288.6 L225.0,289.9 L222.0,291.2 L219.0,292.5 L216.0,293.7 L213.0,295.0 L210.0,296.3 L207.0,297.6 L204.0,298.9 L201.0,300.2 L198.0,301.4 L195.0,302.7 L192.0,304.0 L189.0,305.3 L186.0,306.5 L183.0,307.8 L180.0,309.0 L177.0,310.3 L174.0,311.5 L171.0,312.7 L168.0,313.9 L165.0,315.1 L162.0,316.3 L159.0,317.5 L156.0,318.5 L153.0,319.5 L150.0,320.4 L147.0,321.3 L144.0,322.2 L141.0,323.1 L138.0,324.1 L135.0,324.9 L132.0,325.8 L129.0,326.7 L126.0,327.5 L123.0,328.3 L120.0,329.2 L117.0,330.0 L114.0,330.9 L111.0,331.9 L108.0,332.9 L105.0,333.9 L102.0,334.8 L99.0,335.8 L96.0,336.6 L93.0,337.4 L90.0,338.2 L87.0,339.0 L84.0,339.8Z" fill="url(#ge)" fill-opacity="1.000"/>
<path d="M84.0,334.8 L87.0,334.0 L90.0,333.2 L93.0,332.4 L96.0,331.6 L99.0,330.8 L102.0,329.8 L105.0,328.9 L108.0,327.9 L111.0,326.9 L114.0,325.9 L117.0,325.0 L120.0,324.2 L123.0,323.4 L126.0,322.6 L129.0,321.8 L132.0,321.0 L135.0,320.2 L138.0,319.4 L141.0,318.6 L144.0,317.8 L147.0,317.0 L150.0,316.2 L153.0,315.3 L156.0,314.4 L159.0,313.4 L162.0,312.3 L165.0,311.2 L168.0,310.1 L171.0,308.9 L174.0,307.7 L177.0,306.5 L180.0,305.3 L183.0,304.1 L186.0,302.9 L189.0,301.7 L192.0,300.4 L195.0,299.2 L198.0,298.0 L201.0,296.7 L204.0,295.5 L207.0,294.2 L210.0,292.9 L213.0,291.7 L216.0,290.4 L219.0,289.2 L222.0,288.0 L225.0,286.7 L228.0,285.4 L231.0,284.2 L234.0,282.9 L237.0,281.6 L240.0,280.4 L243.0,279.1 L246.0,277.9 L249.0,276.8 L252.0,275.6 L255.0,274.5 L258.0,273.5 L261.0,272.4 L264.0,271.4 L267.0,270.3 L270.0,269.2 L273.0,268.0 L276.0,266.7 L279.0,265.4 L282.0,264.1 L285.0,262.8 L288.0,261.5 L291.0,260.3 L294.0,259.2 L297.0,258.1 L300.0,256.8 L303.0,255.2 L306.0,253.5 L309.0,251.7 L312.0,249.9 L315.0,248.2 L318.0,246.5 L321.0,245.0 L324.0,243.7 L327.0,242.5 L330.0,241.5 L333.0,240.6 L336.0,239.8 L339.0,239.0 L342.0,238.2 L345.0,237.4 L348.0,236.4 L351.0,235.2 L354.0,233.4 L357.0,231.8 L360.0,230.7 L363.0,229.6 L366.0,228.7 L369.0,228.1 L372.0,227.9 L375.0,228.2 L378.0,229.0 L381.0,230.3 L384.0,232.1 L387.0,233.2 L390.0,233.2 L393.0,232.0 L396.0,230.8 L399.0,228.9 L402.0,227.5 L405.0,229.0 L408.0,230.8 L411.0,231.2 L414.0,230.9 L417.0,230.6 L420.0,230.3 L423.0,229.9 L426.0,229.4 L429.0,228.8 L432.0,228.2 L434.0,227.7 L434.0,229.7 L432.0,230.2 L429.0,230.8 L426.0,231.4 L423.0,231.9 L420.0,232.4 L417.0,232.7 L414.0,233.0 L411.0,233.3 L408.0,232.9 L405.0,231.2 L402.0,229.7 L399.0,231.1 L396.0,233.1 L393.0,234.2 L390.0,235.4 L387.0,235.4 L384.0,234.3 L381.0,232.6 L378.0,231.3 L375.0,230.5 L372.0,230.2 L369.0,230.4 L366.0,231.1 L363.0,231.9 L360.0,233.1 L357.0,234.2 L354.0,235.8 L351.0,237.6 L348.0,238.9 L345.0,239.9 L342.0,240.7 L339.0,241.5 L336.0,242.3 L333.0,243.1 L330.0,244.0 L327.0,245.1 L324.0,246.3 L321.0,247.6 L318.0,249.1 L315.0,250.8 L312.0,252.6 L309.0,254.4 L306.0,256.2 L303.0,257.9 L300.0,259.5 L297.0,260.8 L294.0,261.9 L291.0,263.0 L288.0,264.3 L285.0,265.5 L282.0,266.9 L279.0,268.2 L276.0,269.5 L273.0,270.8 L270.0,272.0 L267.0,273.2 L264.0,274.3 L261.0,275.4 L258.0,276.4 L255.0,277.5 L252.0,278.6 L249.0,279.8 L246.0,281.0 L243.0,282.2 L240.0,283.4 L237.0,284.7 L234.0,286.0 L231.0,287.3 L228.0,288.6 L225.0,289.9 L222.0,291.2 L219.0,292.5 L216.0,293.7 L213.0,295.0 L210.0,296.3 L207.0,297.6 L204.0,298.9 L201.0,300.2 L198.0,301.4 L195.0,302.7 L192.0,304.0 L189.0,305.3 L186.0,306.5 L183.0,307.8 L180.0,309.0 L177.0,310.3 L174.0,311.5 L171.0,312.7 L168.0,313.9 L165.0,315.1 L162.0,316.3 L159.0,317.5 L156.0,318.5 L153.0,319.5 L150.0,320.4 L147.0,321.3 L144.0,322.2 L141.0,323.1 L138.0,324.1 L135.0,324.9 L132.0,325.8 L129.0,326.7 L126.0,327.5 L123.0,328.3 L120.0,329.2 L117.0,330.0 L114.0,330.9 L111.0,331.9 L108.0,332.9 L105.0,333.9 L102.0,334.8 L99.0,335.8 L96.0,336.6 L93.0,337.4 L90.0,338.2 L87.0,339.0 L84.0,339.8Z" fill="url(#ge)" fill-opacity="1.000"/>
<path d="M84.0,336.3 L87.0,335.5 L90.0,334.7 L93.0,333.9 L96.0,333.1 L99.0,332.3 L102.0,331.3 L105.0,330.4 L108.0,329.4 L111.0,328.4 L114.0,327.4 L117.0,326.5 L120.0,325.7 L123.0,324.8 L126.0,324.0 L129.0,323.2 L132.0,322.3 L135.0,321.4 L138.0,320.6 L141.0,319.6 L144.0,318.7 L147.0,317.8 L150.0,316.9 L153.0,316.0 L156.0,315.0 L159.0,314.0 L162.0,312.8 L165.0,311.6 L168.0,310.4 L171.0,309.2 L174.0,308.0 L177.0,306.8 L180.0,305.5 L183.0,304.3 L186.0,303.0 L189.0,301.8 L192.0,300.5 L195.0,299.2 L198.0,297.9 L201.0,296.7 L204.0,295.4 L207.0,294.1 L210.0,292.8 L213.0,291.5 L216.0,290.2 L219.0,289.0 L222.0,287.7 L225.0,286.4 L228.0,285.1 L231.0,283.8 L234.0,282.5 L237.0,281.2 L240.0,279.9 L243.0,278.7 L246.0,277.5 L249.0,276.3 L252.0,275.1 L255.0,274.0 L258.0,272.9 L261.0,271.9 L264.0,270.8 L267.0,269.7 L270.0,268.5 L273.0,267.3 L276.0,266.0 L279.0,264.7 L282.0,263.4 L285.0,262.0 L288.0,260.8 L291.0,259.5 L294.0,258.4 L297.0,257.3 L300.0,256.0 L303.0,254.4 L306.0,252.7 L309.0,250.9 L312.0,249.1 L315.0,247.3 L318.0,245.6 L321.0,244.1 L324.0,242.8 L327.0,241.6 L330.0,240.5 L333.0,239.6 L336.0,238.8 L339.0,238.0 L342.0,237.2 L345.0,236.4 L348.0,235.4 L351.0,234.1 L354.0,232.3 L357.0,230.7 L360.0,229.6 L363.0,228.4 L366.0,227.6 L369.0,226.9 L372.0,226.7 L375.0,227.0 L378.0,227.8 L381.0,229.1 L384.0,230.8 L387.0,231.9 L390.0,231.9 L393.0,230.7 L396.0,229.6 L399.0,227.6 L402.0,226.2 L405.0,227.7 L408.0,229.4 L411.0,229.8 L414.0,229.5 L417.0,229.2 L420.0,228.9 L423.0,228.4 L426.0,227.9 L429.0,227.3 L432.0,226.7 L434.0,226.2 L434.0,230.7 L432.0,231.2 L429.0,231.8 L426.0,232.4 L423.0,232.9 L420.0,233.4 L417.0,233.7 L414.0,234.0 L411.0,234.3 L408.0,233.9 L405.0,232.2 L402.0,230.7 L399.0,232.1 L396.0,234.1 L393.0,235.2 L390.0,236.4 L387.0,236.4 L384.0,235.3 L381.0,233.6 L378.0,232.3 L375.0,231.5 L372.0,231.2 L369.0,231.4 L366.0,232.1 L363.0,232.9 L360.0,234.1 L357.0,235.2 L354.0,236.8 L351.0,238.6 L348.0,239.9 L345.0,240.9 L342.0,241.7 L339.0,242.5 L336.0,243.3 L333.0,244.1 L330.0,245.0 L327.0,246.1 L324.0,247.3 L321.0,248.6 L318.0,250.1 L315.0,251.8 L312.0,253.6 L309.0,255.4 L306.0,257.2 L303.0,258.9 L300.0,260.5 L297.0,261.8 L294.0,262.9 L291.0,264.0 L288.0,265.3 L285.0,266.5 L282.0,267.9 L279.0,269.2 L276.0,270.5 L273.0,271.8 L270.0,273.0 L267.0,274.2 L264.0,275.3 L261.0,276.4 L258.0,277.4 L255.0,278.5 L252.0,279.6 L249.0,280.8 L246.0,282.0 L243.0,283.2 L240.0,284.4 L237.0,285.7 L234.0,287.0 L231.0,288.3 L228.0,289.6 L225.0,290.9 L222.0,292.2 L219.0,293.5 L216.0,294.7 L213.0,296.0 L210.0,297.3 L207.0,298.6 L204.0,299.9 L201.0,301.2 L198.0,302.4 L195.0,303.7 L192.0,305.0 L189.0,306.3 L186.0,307.5 L183.0,308.8 L180.0,310.0 L177.0,311.3 L174.0,312.5 L171.0,313.7 L168.0,314.9 L165.0,316.1 L162.0,317.3 L159.0,318.5 L156.0,319.5 L153.0,320.5 L150.0,321.4 L147.0,322.3 L144.0,323.2 L141.0,324.1 L138.0,325.1 L135.0,325.9 L132.0,326.8 L129.0,327.7 L126.0,328.5 L123.0,329.3 L120.0,330.2 L117.0,331.0 L114.0,331.9 L111.0,332.9 L108.0,333.9 L105.0,334.9 L102.0,335.8 L99.0,336.8 L96.0,337.6 L93.0,338.4 L90.0,339.2 L87.0,340.0 L84.0,340.8Z" fill="url(#ge2)" fill-opacity="1.000"/>
</g>
<g mask="url(#gapmask)">
<g filter="url(#b4)">
<path d="M84.0,154.6 L87.0,153.4 L90.0,152.3 L93.0,151.1 L96.0,150.0 L99.0,148.8 L102.0,147.7 L105.0,146.6 L108.0,145.4 L111.0,144.3 L114.0,143.2 L117.0,142.0 L120.0,140.9 L123.0,139.8 L126.0,138.6 L129.0,137.5 L132.0,136.3 L135.0,135.2 L138.0,134.1 L141.0,132.9 L144.0,131.8 L147.0,130.6 L150.0,129.5 L153.0,128.3 L156.0,127.2 L159.0,126.0 L162.0,124.9 L165.0,123.7 L168.0,122.5 L171.0,121.3 L174.0,120.1 L177.0,118.9 L180.0,117.6 L183.0,116.4 L186.0,115.1 L189.0,113.9 L192.0,112.6 L195.0,111.3 L198.0,110.1 L201.0,108.8 L204.0,107.5 L207.0,106.2 L210.0,104.9 L213.0,103.7 L216.0,102.4 L219.0,101.1 L222.0,99.9 L225.0,98.6 L228.0,97.3 L231.0,96.0 L234.0,94.7 L237.0,93.4 L240.0,92.1 L243.0,90.9 L246.0,89.6 L249.0,88.4 L252.0,87.2 L255.0,86.1 L258.0,85.0 L261.0,83.9 L264.0,82.8 L267.0,81.7 L270.0,80.5 L273.0,79.2 L276.0,77.9 L279.0,76.5 L282.0,75.2 L285.0,73.8 L288.0,72.4 L291.0,71.1 L294.0,69.8 L297.0,68.5 L300.0,67.1 L303.0,65.5 L306.0,63.7 L309.0,61.8 L312.0,59.8 L315.0,58.0 L318.0,56.2 L321.0,54.6 L324.0,53.2 L327.0,51.9 L330.0,50.8 L333.0,49.8 L336.0,48.9 L339.0,48.1 L342.0,47.2 L345.0,46.4 L348.0,45.5 L351.0,44.4 L354.0,42.7 L357.0,41.0 L360.0,39.4 L363.0,37.9 L366.0,37.2 L369.0,36.9 L372.0,37.1 L375.0,37.7 L378.0,38.6 L381.0,39.8 L384.0,41.5 L387.0,42.9 L390.0,43.8 L393.0,43.6 L396.0,42.9 L399.0,41.0 L402.0,38.6 L405.0,37.5 L408.0,37.2 L411.0,37.0 L414.0,36.7 L417.0,36.3 L420.0,35.9 L423.0,35.4 L426.0,34.9 L429.0,34.3 L432.0,33.7 L434.0,33.3" fill="none" stroke="#ffffff" stroke-width="6.00" stroke-opacity="0.110" />
<path d="M84.0,151.6 L87.0,150.4 L90.0,149.3 L93.0,148.1 L96.0,147.0 L99.0,145.8 L102.0,144.7 L105.0,143.6 L108.0,142.4 L111.0,141.3 L114.0,140.2 L117.0,139.0 L120.0,137.9 L123.0,136.8 L126.0,135.6 L129.0,134.5 L132.0,133.3 L135.0,132.2 L138.0,131.1 L141.0,129.9 L144.0,128.8 L147.0,127.6 L150.0,126.5 L153.0,125.3 L156.0,124.2 L159.0,123.0 L162.0,121.9 L165.0,120.7 L168.0,119.5 L171.0,118.3 L174.0,117.1 L177.0,115.9 L180.0,114.6 L183.0,113.4 L186.0,112.1 L189.0,110.9 L192.0,109.6 L195.0,108.3 L198.0,107.1 L201.0,105.8 L204.0,104.5 L207.0,103.2 L210.0,101.9 L213.0,100.7 L216.0,99.4 L219.0,98.1 L222.0,96.9 L225.0,95.6 L228.0,94.3 L231.0,93.0 L234.0,91.7 L237.0,90.4 L240.0,89.1 L243.0,87.9 L246.0,86.6 L249.0,85.4 L252.0,84.2 L255.0,83.1 L258.0,82.0 L261.0,80.9 L264.0,79.8 L267.0,78.7 L270.0,77.5 L273.0,76.2 L276.0,74.9 L279.0,73.5 L282.0,72.2 L285.0,70.8 L288.0,69.4 L291.0,68.1 L294.0,66.8 L297.0,65.5 L300.0,64.1 L303.0,62.5 L306.0,60.7 L309.0,58.8 L312.0,56.8 L315.0,55.0 L318.0,53.2 L321.0,51.6 L324.0,50.2 L327.0,48.9 L330.0,47.8 L333.0,46.8 L336.0,45.9 L339.0,45.1 L342.0,44.2 L345.0,43.4 L348.0,42.5 L351.0,41.4 L354.0,39.7 L357.0,38.0 L360.0,36.4 L363.0,34.9 L366.0,34.2 L369.0,33.9 L372.0,34.1 L375.0,34.7 L378.0,35.6 L381.0,36.8 L384.0,38.5 L387.0,39.9 L390.0,40.8 L393.0,40.6 L396.0,39.9 L399.0,38.0 L402.0,35.6 L405.0,34.5 L408.0,34.2 L411.0,34.0 L414.0,33.7 L417.0,33.3 L420.0,32.9 L423.0,32.4 L426.0,31.9 L429.0,31.3 L432.0,30.7 L434.0,30.3" fill="none" stroke="url(#gt)" stroke-width="11.00" stroke-opacity="0.070" />
<path d="M84.0,543.6 L87.0,542.4 L90.0,541.3 L93.0,540.1 L96.0,539.0 L99.0,537.8 L102.0,536.7 L105.0,535.6 L108.0,534.4 L111.0,533.3 L114.0,532.2 L117.0,531.0 L120.0,529.9 L123.0,528.8 L126.0,527.6 L129.0,526.5 L132.0,525.3 L135.0,524.2 L138.0,523.1 L141.0,521.9 L144.0,520.8 L147.0,519.6 L150.0,518.5 L153.0,517.3 L156.0,516.2 L159.0,515.0 L162.0,513.9 L165.0,512.7 L168.0,511.5 L171.0,510.3 L174.0,509.1 L177.0,507.9 L180.0,506.6 L183.0,505.4 L186.0,504.1 L189.0,502.9 L192.0,501.6 L195.0,500.3 L198.0,499.1 L201.0,497.8 L204.0,496.5 L207.0,495.2 L210.0,493.9 L213.0,492.7 L216.0,491.4 L219.0,490.1 L222.0,488.9 L225.0,487.6 L228.0,486.3 L231.0,485.0 L234.0,483.7 L237.0,482.4 L240.0,481.1 L243.0,479.9 L246.0,478.6 L249.0,477.4 L252.0,476.2 L255.0,475.1 L258.0,474.0 L261.0,472.9 L264.0,471.8 L267.0,470.7 L270.0,469.5 L273.0,468.2 L276.0,466.9 L279.0,465.5 L282.0,464.2 L285.0,462.8 L288.0,461.4 L291.0,460.1 L294.0,458.8 L297.0,457.5 L300.0,456.1 L303.0,454.5 L306.0,452.7 L309.0,450.8 L312.0,448.8 L315.0,447.0 L318.0,445.2 L321.0,443.6 L324.0,442.2 L327.0,440.9 L330.0,439.8 L333.0,438.8 L336.0,437.9 L339.0,437.1 L342.0,436.2 L345.0,435.4 L348.0,434.5 L351.0,433.4 L354.0,431.7 L357.0,430.0 L360.0,428.4 L363.0,426.9 L366.0,426.2 L369.0,425.9 L372.0,426.1 L375.0,426.7 L378.0,427.6 L381.0,428.8 L384.0,430.5 L387.0,431.9 L390.0,432.8 L393.0,432.6 L396.0,431.9 L399.0,430.0 L402.0,427.6 L405.0,426.5 L408.0,426.2 L411.0,426.0 L414.0,425.7 L417.0,425.3 L420.0,424.9 L423.0,424.4 L426.0,423.9 L429.0,423.3 L432.0,422.7 L434.0,422.3" fill="none" stroke="url(#gl)" stroke-width="7.00" stroke-opacity="0.140" />
<path d="M84.0,235.4 L87.0,234.4 L90.0,233.3 L93.0,232.3 L96.0,231.2 L99.0,230.1 L102.0,229.1 L105.0,228.0 L108.0,227.0 L111.0,225.9 L114.0,224.9 L117.0,223.9 L120.0,222.8 L123.0,221.7 L126.0,220.7 L129.0,219.6 L132.0,218.6 L135.0,217.5 L138.0,216.5 L141.0,215.4 L144.0,214.3 L147.0,213.3 L150.0,212.2 L153.0,211.2 L156.0,210.1 L159.0,209.0 L162.0,207.9 L165.0,206.8 L168.0,205.7 L171.0,204.6 L174.0,203.5 L177.0,202.3 L180.0,201.1 L183.0,200.0 L186.0,198.8 L189.0,197.6 L192.0,196.4 L195.0,195.2 L198.0,194.0 L201.0,192.8 L204.0,191.6 L207.0,190.4 L210.0,189.2 L213.0,188.0 L216.0,186.8 L219.0,185.7 L222.0,184.5 L225.0,183.3 L228.0,182.1 L231.0,180.8 L234.0,179.6 L237.0,178.4 L240.0,177.2 L243.0,176.0 L246.0,174.9 L249.0,173.8 L252.0,172.7 L255.0,171.6 L258.0,170.6 L261.0,169.6 L264.0,168.6 L267.0,167.5 L270.0,166.4 L273.0,165.2 L276.0,163.9 L279.0,162.6 L282.0,161.3 L285.0,159.9 L288.0,158.6 L291.0,157.2 L294.0,156.0 L297.0,154.7 L300.0,153.4 L303.0,151.8 L306.0,150.1 L309.0,148.3 L312.0,146.5 L315.0,144.8 L318.0,143.2 L321.0,141.7 L324.0,140.6 L327.0,139.6 L330.0,138.7 L333.0,138.1 L336.0,137.6 L339.0,137.0 L342.0,136.5 L345.0,136.0 L348.0,135.3 L351.0,134.5 L354.0,133.1 L357.0,131.7 L360.0,130.4 L363.0,129.1 L366.0,128.6 L369.0,128.6 L372.0,129.0 L375.0,129.9 L378.0,131.0 L381.0,132.6 L384.0,134.4 L387.0,135.8 L390.0,136.7 L393.0,136.4 L396.0,135.8 L399.0,133.9 L402.0,131.4 L405.0,129.9 L408.0,129.5 L411.0,129.3 L414.0,129.0 L417.0,128.6 L420.0,128.2 L423.0,127.7 L426.0,127.2 L429.0,126.6 L432.0,126.0 L434.0,125.6 L434.0,126.6 L432.0,127.0 L429.0,127.6 L426.0,128.2 L423.0,128.7 L420.0,129.2 L417.0,129.6 L414.0,130.0 L411.0,130.3 L408.0,130.5 L405.0,130.9 L402.0,132.4 L399.0,134.9 L396.0,136.8 L393.0,137.4 L390.0,137.7 L387.0,136.8 L384.0,135.4 L381.0,133.6 L378.0,132.0 L375.0,130.9 L372.0,130.0 L369.0,129.6 L366.0,129.7 L363.0,130.5 L360.0,132.0 L357.0,133.5 L354.0,135.2 L351.0,136.9 L348.0,138.1 L345.0,139.0 L342.0,139.8 L339.0,140.6 L336.0,141.5 L333.0,142.4 L330.0,143.4 L327.0,144.5 L324.0,145.8 L321.0,147.2 L318.0,148.8 L315.0,150.6 L312.0,152.5 L309.0,154.4 L306.0,156.3 L303.0,158.1 L300.0,159.8 L297.0,161.3 L294.0,162.6 L291.0,164.0 L288.0,165.4 L285.0,166.9 L282.0,168.3 L279.0,169.7 L276.0,171.1 L273.0,172.5 L270.0,173.8 L267.0,175.0 L264.0,176.1 L261.0,177.2 L258.0,178.3 L255.0,179.5 L252.0,180.6 L249.0,181.8 L246.0,183.0 L243.0,184.3 L240.0,185.5 L237.0,186.8 L234.0,188.1 L231.0,189.4 L228.0,190.8 L225.0,192.1 L222.0,193.3 L219.0,194.6 L216.0,195.9 L213.0,197.2 L210.0,198.5 L207.0,199.8 L204.0,201.1 L201.0,202.3 L198.0,203.6 L195.0,204.9 L192.0,206.2 L189.0,207.5 L186.0,208.7 L183.0,210.0 L180.0,211.3 L177.0,212.5 L174.0,213.7 L171.0,215.0 L168.0,216.2 L165.0,217.4 L162.0,218.6 L159.0,219.7 L156.0,220.9 L153.0,222.1 L150.0,223.2 L147.0,224.4 L144.0,225.5 L141.0,226.7 L138.0,227.8 L135.0,229.0 L132.0,230.1 L129.0,231.3 L126.0,232.4 L123.0,233.6 L120.0,234.7 L117.0,235.8 L114.0,237.0 L111.0,238.1 L108.0,239.3 L105.0,240.4 L102.0,241.5 L99.0,242.7 L96.0,243.8 L93.0,245.0 L90.0,246.1 L87.0,247.3 L84.0,248.4Z" fill="url(#gw)" fill-opacity="1.000"/>
<path d="M84.0,239.9 L87.0,238.8 L90.0,237.7 L93.0,236.6 L96.0,235.5 L99.0,234.4 L102.0,233.3 L105.0,232.2 L108.0,231.1 L111.0,230.0 L114.0,228.9 L117.0,227.8 L120.0,226.8 L123.0,225.7 L126.0,224.6 L129.0,223.4 L132.0,222.3 L135.0,221.2 L138.0,220.1 L141.0,219.0 L144.0,217.9 L147.0,216.8 L150.0,215.7 L153.0,214.6 L156.0,213.5 L159.0,212.4 L162.0,211.2 L165.0,210.1 L168.0,208.9 L171.0,207.8 L174.0,206.6 L177.0,205.4 L180.0,204.2 L183.0,203.0 L186.0,201.8 L189.0,200.5 L192.0,199.3 L195.0,198.1 L198.0,196.8 L201.0,195.6 L204.0,194.3 L207.0,193.1 L210.0,191.8 L213.0,190.6 L216.0,189.4 L219.0,188.1 L222.0,186.9 L225.0,185.6 L228.0,184.4 L231.0,183.1 L234.0,181.9 L237.0,180.6 L240.0,179.4 L243.0,178.2 L246.0,176.9 L249.0,175.8 L252.0,174.6 L255.0,173.5 L258.0,172.5 L261.0,171.4 L264.0,170.4 L267.0,169.3 L270.0,168.1 L273.0,166.9 L276.0,165.6 L279.0,164.2 L282.0,162.9 L285.0,161.5 L288.0,160.1 L291.0,158.7 L294.0,157.4 L297.0,156.1 L300.0,154.7 L303.0,153.1 L306.0,151.4 L309.0,149.5 L312.0,147.7 L315.0,145.9 L318.0,144.2 L321.0,142.7 L324.0,141.4 L327.0,140.3 L330.0,139.4 L333.0,138.6 L336.0,137.9 L339.0,137.2 L342.0,136.6 L345.0,136.0 L348.0,135.3 L351.0,134.4 L354.0,133.0 L357.0,131.6 L360.0,130.3 L363.0,129.1 L366.0,128.6 L369.0,128.6 L372.0,129.0 L375.0,129.9 L378.0,131.0 L381.0,132.6 L384.0,134.4 L387.0,135.8 L390.0,136.7 L393.0,136.4 L396.0,135.8 L399.0,133.9 L402.0,131.4 L405.0,129.9 L408.0,129.5 L411.0,129.3 L414.0,129.0 L417.0,128.6 L420.0,128.2 L423.0,127.7 L426.0,127.2 L429.0,126.6 L432.0,126.0 L434.0,125.6 L434.0,126.6 L432.0,127.0 L429.0,127.6 L426.0,128.2 L423.0,128.7 L420.0,129.2 L417.0,129.6 L414.0,130.0 L411.0,130.3 L408.0,130.5 L405.0,130.9 L402.0,132.4 L399.0,134.9 L396.0,136.8 L393.0,137.4 L390.0,137.7 L387.0,136.8 L384.0,135.4 L381.0,133.6 L378.0,132.0 L375.0,130.9 L372.0,130.0 L369.0,129.6 L366.0,129.7 L363.0,130.5 L360.0,132.0 L357.0,133.5 L354.0,135.2 L351.0,136.9 L348.0,138.1 L345.0,139.0 L342.0,139.8 L339.0,140.6 L336.0,141.5 L333.0,142.4 L330.0,143.4 L327.0,144.5 L324.0,145.8 L321.0,147.2 L318.0,148.8 L315.0,150.6 L312.0,152.5 L309.0,154.4 L306.0,156.3 L303.0,158.1 L300.0,159.8 L297.0,161.3 L294.0,162.6 L291.0,164.0 L288.0,165.4 L285.0,166.9 L282.0,168.3 L279.0,169.7 L276.0,171.1 L273.0,172.5 L270.0,173.8 L267.0,175.0 L264.0,176.1 L261.0,177.2 L258.0,178.3 L255.0,179.5 L252.0,180.6 L249.0,181.8 L246.0,183.0 L243.0,184.3 L240.0,185.5 L237.0,186.8 L234.0,188.1 L231.0,189.4 L228.0,190.8 L225.0,192.1 L222.0,193.3 L219.0,194.6 L216.0,195.9 L213.0,197.2 L210.0,198.5 L207.0,199.8 L204.0,201.1 L201.0,202.3 L198.0,203.6 L195.0,204.9 L192.0,206.2 L189.0,207.5 L186.0,208.7 L183.0,210.0 L180.0,211.3 L177.0,212.5 L174.0,213.7 L171.0,215.0 L168.0,216.2 L165.0,217.4 L162.0,218.6 L159.0,219.7 L156.0,220.9 L153.0,222.1 L150.0,223.2 L147.0,224.4 L144.0,225.5 L141.0,226.7 L138.0,227.8 L135.0,229.0 L132.0,230.1 L129.0,231.3 L126.0,232.4 L123.0,233.6 L120.0,234.7 L117.0,235.8 L114.0,237.0 L111.0,238.1 L108.0,239.3 L105.0,240.4 L102.0,241.5 L99.0,242.7 L96.0,243.8 L93.0,245.0 L90.0,246.1 L87.0,247.3 L84.0,248.4Z" fill="url(#gw)" fill-opacity="1.000"/>
<path d="M84.0,243.4 L87.0,242.3 L90.0,241.2 L93.0,240.1 L96.0,238.9 L99.0,237.8 L102.0,236.7 L105.0,235.6 L108.0,234.5 L111.0,233.4 L114.0,232.2 L117.0,231.1 L120.0,230.0 L123.0,228.9 L126.0,227.8 L129.0,226.6 L132.0,225.5 L135.0,224.4 L138.0,223.2 L141.0,222.1 L144.0,221.0 L147.0,219.9 L150.0,218.7 L153.0,217.6 L156.0,216.4 L159.0,215.3 L162.0,214.1 L165.0,213.0 L168.0,211.8 L171.0,210.6 L174.0,209.4 L177.0,208.2 L180.0,206.9 L183.0,205.7 L186.0,204.4 L189.0,203.2 L192.0,201.9 L195.0,200.6 L198.0,199.4 L201.0,198.1 L204.0,196.8 L207.0,195.6 L210.0,194.3 L213.0,193.0 L216.0,191.7 L219.0,190.5 L222.0,189.2 L225.0,187.9 L228.0,186.6 L231.0,185.3 L234.0,184.1 L237.0,182.8 L240.0,181.5 L243.0,180.2 L246.0,179.0 L249.0,177.8 L252.0,176.6 L255.0,175.5 L258.0,174.4 L261.0,173.3 L264.0,172.2 L267.0,171.1 L270.0,169.9 L273.0,168.6 L276.0,167.3 L279.0,165.9 L282.0,164.5 L285.0,163.1 L288.0,161.6 L291.0,160.2 L294.0,158.9 L297.0,157.5 L300.0,156.1 L303.0,154.5 L306.0,152.7 L309.0,150.8 L312.0,148.9 L315.0,147.0 L318.0,145.3 L321.0,143.7 L324.0,142.4 L327.0,141.2 L330.0,140.1 L333.0,139.3 L336.0,138.6 L339.0,137.9 L342.0,137.1 L345.0,136.5 L348.0,135.7 L351.0,134.8 L354.0,133.3 L357.0,131.8 L360.0,130.5 L363.0,129.2 L366.0,128.6 L369.0,128.6 L372.0,129.0 L375.0,129.9 L378.0,131.0 L381.0,132.6 L384.0,134.4 L387.0,135.8 L390.0,136.7 L393.0,136.4 L396.0,135.8 L399.0,133.9 L402.0,131.4 L405.0,129.9 L408.0,129.5 L411.0,129.3 L414.0,129.0 L417.0,128.6 L420.0,128.2 L423.0,127.7 L426.0,127.2 L429.0,126.6 L432.0,126.0 L434.0,125.6 L434.0,126.6 L432.0,127.0 L429.0,127.6 L426.0,128.2 L423.0,128.7 L420.0,129.2 L417.0,129.6 L414.0,130.0 L411.0,130.3 L408.0,130.5 L405.0,130.9 L402.0,132.4 L399.0,134.9 L396.0,136.8 L393.0,137.4 L390.0,137.7 L387.0,136.8 L384.0,135.4 L381.0,133.6 L378.0,132.0 L375.0,130.9 L372.0,130.0 L369.0,129.6 L366.0,129.7 L363.0,130.5 L360.0,132.0 L357.0,133.5 L354.0,135.2 L351.0,136.9 L348.0,138.1 L345.0,139.0 L342.0,139.8 L339.0,140.6 L336.0,141.5 L333.0,142.4 L330.0,143.4 L327.0,144.5 L324.0,145.8 L321.0,147.2 L318.0,148.8 L315.0,150.6 L312.0,152.5 L309.0,154.4 L306.0,156.3 L303.0,158.1 L300.0,159.8 L297.0,161.3 L294.0,162.6 L291.0,164.0 L288.0,165.4 L285.0,166.9 L282.0,168.3 L279.0,169.7 L276.0,171.1 L273.0,172.5 L270.0,173.8 L267.0,175.0 L264.0,176.1 L261.0,177.2 L258.0,178.3 L255.0,179.5 L252.0,180.6 L249.0,181.8 L246.0,183.0 L243.0,184.3 L240.0,185.5 L237.0,186.8 L234.0,188.1 L231.0,189.4 L228.0,190.8 L225.0,192.1 L222.0,193.3 L219.0,194.6 L216.0,195.9 L213.0,197.2 L210.0,198.5 L207.0,199.8 L204.0,201.1 L201.0,202.3 L198.0,203.6 L195.0,204.9 L192.0,206.2 L189.0,207.5 L186.0,208.7 L183.0,210.0 L180.0,211.3 L177.0,212.5 L174.0,213.7 L171.0,215.0 L168.0,216.2 L165.0,217.4 L162.0,218.6 L159.0,219.7 L156.0,220.9 L153.0,222.1 L150.0,223.2 L147.0,224.4 L144.0,225.5 L141.0,226.7 L138.0,227.8 L135.0,229.0 L132.0,230.1 L129.0,231.3 L126.0,232.4 L123.0,233.6 L120.0,234.7 L117.0,235.8 L114.0,237.0 L111.0,238.1 L108.0,239.3 L105.0,240.4 L102.0,241.5 L99.0,242.7 L96.0,243.8 L93.0,245.0 L90.0,246.1 L87.0,247.3 L84.0,248.4Z" fill="url(#gw)" fill-opacity="1.000"/>
<path d="M84.0,247.9 L87.0,246.8 L90.0,245.7 L93.0,244.7 L96.0,243.6 L99.0,242.5 L102.0,241.4 L105.0,240.4 L108.0,239.3 L111.0,238.2 L114.0,237.2 L117.0,236.1 L120.0,235.0 L123.0,234.0 L126.0,232.9 L129.0,231.8 L132.0,230.7 L135.0,229.7 L138.0,228.6 L141.0,227.5 L144.0,226.4 L147.0,225.4 L150.0,224.3 L153.0,223.2 L156.0,222.1 L159.0,221.0 L162.0,219.9 L165.0,218.8 L168.0,217.7 L171.0,216.6 L174.0,215.4 L177.0,214.2 L180.0,213.1 L183.0,211.9 L186.0,210.7 L189.0,209.5 L192.0,208.3 L195.0,207.1 L198.0,205.9 L201.0,204.7 L204.0,203.5 L207.0,202.2 L210.0,201.0 L213.0,199.8 L216.0,198.6 L219.0,197.4 L222.0,196.2 L225.0,195.0 L228.0,193.8 L231.0,192.5 L234.0,191.3 L237.0,190.1 L240.0,188.9 L243.0,187.7 L246.0,186.5 L249.0,185.4 L252.0,184.3 L255.0,183.2 L258.0,182.2 L261.0,181.2 L264.0,180.2 L267.0,179.1 L270.0,178.0 L273.0,176.8 L276.0,175.5 L279.0,174.2 L282.0,172.9 L285.0,171.5 L288.0,170.2 L291.0,168.8 L294.0,167.6 L297.0,166.3 L300.0,165.0 L303.0,163.4 L306.0,161.7 L309.0,159.9 L312.0,158.1 L315.0,156.4 L318.0,154.8 L321.0,153.3 L324.0,152.2 L327.0,151.2 L330.0,150.3 L333.0,149.7 L336.0,149.2 L339.0,148.6 L342.0,148.1 L345.0,147.6 L348.0,146.9 L351.0,146.1 L354.0,144.7 L357.0,143.3 L360.0,142.0 L363.0,140.8 L366.0,140.2 L369.0,140.3 L372.0,140.7 L375.0,141.6 L378.0,142.8 L381.0,144.4 L384.0,146.3 L387.0,147.8 L390.0,148.7 L393.0,148.6 L396.0,147.9 L399.0,146.1 L402.0,143.6 L405.0,142.1 L408.0,141.8 L411.0,141.6 L414.0,141.3 L417.0,140.9 L420.0,140.5 L423.0,140.0 L426.0,139.5 L429.0,138.9 L432.0,138.3 L434.0,137.9 L434.0,138.9 L432.0,139.3 L429.0,139.9 L426.0,140.5 L423.0,141.0 L420.0,141.5 L417.0,141.9 L414.0,142.3 L411.0,142.6 L408.0,142.8 L405.0,143.1 L402.0,144.6 L399.0,147.1 L396.0,148.9 L393.0,149.6 L390.0,149.7 L387.0,148.8 L384.0,147.3 L381.0,145.4 L378.0,143.8 L375.0,142.6 L372.0,141.7 L369.0,141.3 L366.0,141.4 L363.0,142.1 L360.0,143.6 L357.0,145.2 L354.0,146.8 L351.0,148.5 L348.0,149.7 L345.0,150.6 L342.0,151.4 L339.0,152.2 L336.0,153.1 L333.0,154.0 L330.0,155.0 L327.0,156.1 L324.0,157.4 L321.0,158.8 L318.0,160.4 L315.0,162.2 L312.0,164.1 L309.0,166.0 L306.0,167.9 L303.0,169.7 L300.0,171.4 L297.0,172.9 L294.0,174.2 L291.0,175.6 L288.0,177.0 L285.0,178.5 L282.0,179.9 L279.0,181.3 L276.0,182.7 L273.0,184.1 L270.0,185.4 L267.0,186.6 L264.0,187.7 L261.0,188.9 L258.0,190.0 L255.0,191.1 L252.0,192.2 L249.0,193.4 L246.0,194.7 L243.0,195.9 L240.0,197.2 L237.0,198.5 L234.0,199.8 L231.0,201.1 L228.0,202.5 L225.0,203.8 L222.0,205.1 L219.0,206.4 L216.0,207.7 L213.0,209.0 L210.0,210.3 L207.0,211.6 L204.0,212.9 L201.0,214.2 L198.0,215.5 L195.0,216.8 L192.0,218.1 L189.0,219.4 L186.0,220.6 L183.0,221.9 L180.0,223.2 L177.0,224.4 L174.0,225.7 L171.0,226.9 L168.0,228.2 L165.0,229.4 L162.0,230.6 L159.0,231.8 L156.0,232.9 L153.0,234.1 L150.0,235.3 L147.0,236.5 L144.0,237.6 L141.0,238.8 L138.0,239.9 L135.0,241.1 L132.0,242.3 L129.0,243.5 L126.0,244.6 L123.0,245.8 L120.0,246.9 L117.0,248.1 L114.0,249.3 L111.0,250.4 L108.0,251.6 L105.0,252.7 L102.0,253.9 L99.0,255.1 L96.0,256.2 L93.0,257.4 L90.0,258.6 L87.0,259.7 L84.0,260.9Z" fill="url(#gw)" fill-opacity="0.850"/>
<path d="M84.0,252.4 L87.0,251.3 L90.0,250.2 L93.0,249.0 L96.0,247.9 L99.0,246.8 L102.0,245.7 L105.0,244.6 L108.0,243.4 L111.0,242.3 L114.0,241.2 L117.0,240.1 L120.0,239.0 L123.0,237.9 L126.0,236.8 L129.0,235.6 L132.0,234.5 L135.0,233.4 L138.0,232.3 L141.0,231.1 L144.0,230.0 L147.0,228.9 L150.0,227.8 L153.0,226.7 L156.0,225.5 L159.0,224.4 L162.0,223.2 L165.0,222.1 L168.0,220.9 L171.0,219.7 L174.0,218.5 L177.0,217.3 L180.0,216.1 L183.0,214.9 L186.0,213.7 L189.0,212.4 L192.0,211.2 L195.0,209.9 L198.0,208.7 L201.0,207.4 L204.0,206.1 L207.0,204.9 L210.0,203.6 L213.0,202.4 L216.0,201.1 L219.0,199.9 L222.0,198.6 L225.0,197.4 L228.0,196.1 L231.0,194.8 L234.0,193.5 L237.0,192.3 L240.0,191.0 L243.0,189.8 L246.0,188.6 L249.0,187.4 L252.0,186.3 L255.0,185.2 L258.0,184.1 L261.0,183.0 L264.0,182.0 L267.0,180.9 L270.0,179.7 L273.0,178.5 L276.0,177.2 L279.0,175.8 L282.0,174.5 L285.0,173.1 L288.0,171.7 L291.0,170.3 L294.0,169.0 L297.0,167.7 L300.0,166.3 L303.0,164.7 L306.0,163.0 L309.0,161.1 L312.0,159.3 L315.0,157.5 L318.0,155.8 L321.0,154.3 L324.0,153.0 L327.0,151.9 L330.0,151.0 L333.0,150.2 L336.0,149.5 L339.0,148.8 L342.0,148.2 L345.0,147.6 L348.0,146.9 L351.0,146.0 L354.0,144.6 L357.0,143.2 L360.0,141.9 L363.0,140.7 L366.0,140.2 L369.0,140.3 L372.0,140.7 L375.0,141.6 L378.0,142.8 L381.0,144.4 L384.0,146.3 L387.0,147.8 L390.0,148.7 L393.0,148.6 L396.0,147.9 L399.0,146.1 L402.0,143.6 L405.0,142.1 L408.0,141.8 L411.0,141.6 L414.0,141.3 L417.0,140.9 L420.0,140.5 L423.0,140.0 L426.0,139.5 L429.0,138.9 L432.0,138.3 L434.0,137.9 L434.0,138.9 L432.0,139.3 L429.0,139.9 L426.0,140.5 L423.0,141.0 L420.0,141.5 L417.0,141.9 L414.0,142.3 L411.0,142.6 L408.0,142.8 L405.0,143.1 L402.0,144.6 L399.0,147.1 L396.0,148.9 L393.0,149.6 L390.0,149.7 L387.0,148.8 L384.0,147.3 L381.0,145.4 L378.0,143.8 L375.0,142.6 L372.0,141.7 L369.0,141.3 L366.0,141.4 L363.0,142.1 L360.0,143.6 L357.0,145.2 L354.0,146.8 L351.0,148.5 L348.0,149.7 L345.0,150.6 L342.0,151.4 L339.0,152.2 L336.0,153.1 L333.0,154.0 L330.0,155.0 L327.0,156.1 L324.0,157.4 L321.0,158.8 L318.0,160.4 L315.0,162.2 L312.0,164.1 L309.0,166.0 L306.0,167.9 L303.0,169.7 L300.0,171.4 L297.0,172.9 L294.0,174.2 L291.0,175.6 L288.0,177.0 L285.0,178.5 L282.0,179.9 L279.0,181.3 L276.0,182.7 L273.0,184.1 L270.0,185.4 L267.0,186.6 L264.0,187.7 L261.0,188.9 L258.0,190.0 L255.0,191.1 L252.0,192.2 L249.0,193.4 L246.0,194.7 L243.0,195.9 L240.0,197.2 L237.0,198.5 L234.0,199.8 L231.0,201.1 L228.0,202.5 L225.0,203.8 L222.0,205.1 L219.0,206.4 L216.0,207.7 L213.0,209.0 L210.0,210.3 L207.0,211.6 L204.0,212.9 L201.0,214.2 L198.0,215.5 L195.0,216.8 L192.0,218.1 L189.0,219.4 L186.0,220.6 L183.0,221.9 L180.0,223.2 L177.0,224.4 L174.0,225.7 L171.0,226.9 L168.0,228.2 L165.0,229.4 L162.0,230.6 L159.0,231.8 L156.0,232.9 L153.0,234.1 L150.0,235.3 L147.0,236.5 L144.0,237.6 L141.0,238.8 L138.0,239.9 L135.0,241.1 L132.0,242.3 L129.0,243.5 L126.0,244.6 L123.0,245.8 L120.0,246.9 L117.0,248.1 L114.0,249.3 L111.0,250.4 L108.0,251.6 L105.0,252.7 L102.0,253.9 L99.0,255.1 L96.0,256.2 L93.0,257.4 L90.0,258.6 L87.0,259.7 L84.0,260.9Z" fill="url(#gw)" fill-opacity="0.850"/>
<path d="M84.0,255.9 L87.0,254.8 L90.0,253.6 L93.0,252.5 L96.0,251.3 L99.0,250.2 L102.0,249.1 L105.0,247.9 L108.0,246.8 L111.0,245.6 L114.0,244.5 L117.0,243.4 L120.0,242.2 L123.0,241.1 L126.0,240.0 L129.0,238.8 L132.0,237.7 L135.0,236.5 L138.0,235.4 L141.0,234.2 L144.0,233.1 L147.0,231.9 L150.0,230.8 L153.0,229.6 L156.0,228.5 L159.0,227.3 L162.0,226.1 L165.0,224.9 L168.0,223.8 L171.0,222.5 L174.0,221.3 L177.0,220.1 L180.0,218.8 L183.0,217.6 L186.0,216.3 L189.0,215.1 L192.0,213.8 L195.0,212.5 L198.0,211.2 L201.0,209.9 L204.0,208.6 L207.0,207.3 L210.0,206.1 L213.0,204.8 L216.0,203.5 L219.0,202.2 L222.0,200.9 L225.0,199.6 L228.0,198.3 L231.0,197.0 L234.0,195.7 L237.0,194.4 L240.0,193.1 L243.0,191.9 L246.0,190.6 L249.0,189.4 L252.0,188.2 L255.0,187.1 L258.0,186.0 L261.0,184.9 L264.0,183.8 L267.0,182.7 L270.0,181.5 L273.0,180.2 L276.0,178.9 L279.0,177.5 L282.0,176.1 L285.0,174.7 L288.0,173.2 L291.0,171.8 L294.0,170.5 L297.0,169.1 L300.0,167.7 L303.0,166.1 L306.0,164.3 L309.0,162.4 L312.0,160.5 L315.0,158.6 L318.0,156.9 L321.0,155.3 L324.0,154.0 L327.0,152.8 L330.0,151.7 L333.0,150.9 L336.0,150.2 L339.0,149.5 L342.0,148.7 L345.0,148.1 L348.0,147.3 L351.0,146.4 L354.0,144.9 L357.0,143.5 L360.0,142.1 L363.0,140.8 L366.0,140.3 L369.0,140.3 L372.0,140.7 L375.0,141.6 L378.0,142.8 L381.0,144.4 L384.0,146.3 L387.0,147.8 L390.0,148.7 L393.0,148.6 L396.0,147.9 L399.0,146.1 L402.0,143.6 L405.0,142.1 L408.0,141.8 L411.0,141.6 L414.0,141.3 L417.0,140.9 L420.0,140.5 L423.0,140.0 L426.0,139.5 L429.0,138.9 L432.0,138.3 L434.0,137.9 L434.0,138.9 L432.0,139.3 L429.0,139.9 L426.0,140.5 L423.0,141.0 L420.0,141.5 L417.0,141.9 L414.0,142.3 L411.0,142.6 L408.0,142.8 L405.0,143.1 L402.0,144.6 L399.0,147.1 L396.0,148.9 L393.0,149.6 L390.0,149.7 L387.0,148.8 L384.0,147.3 L381.0,145.4 L378.0,143.8 L375.0,142.6 L372.0,141.7 L369.0,141.3 L366.0,141.4 L363.0,142.1 L360.0,143.6 L357.0,145.2 L354.0,146.8 L351.0,148.5 L348.0,149.7 L345.0,150.6 L342.0,151.4 L339.0,152.2 L336.0,153.1 L333.0,154.0 L330.0,155.0 L327.0,156.1 L324.0,157.4 L321.0,158.8 L318.0,160.4 L315.0,162.2 L312.0,164.1 L309.0,166.0 L306.0,167.9 L303.0,169.7 L300.0,171.4 L297.0,172.9 L294.0,174.2 L291.0,175.6 L288.0,177.0 L285.0,178.5 L282.0,179.9 L279.0,181.3 L276.0,182.7 L273.0,184.1 L270.0,185.4 L267.0,186.6 L264.0,187.7 L261.0,188.9 L258.0,190.0 L255.0,191.1 L252.0,192.2 L249.0,193.4 L246.0,194.7 L243.0,195.9 L240.0,197.2 L237.0,198.5 L234.0,199.8 L231.0,201.1 L228.0,202.5 L225.0,203.8 L222.0,205.1 L219.0,206.4 L216.0,207.7 L213.0,209.0 L210.0,210.3 L207.0,211.6 L204.0,212.9 L201.0,214.2 L198.0,215.5 L195.0,216.8 L192.0,218.1 L189.0,219.4 L186.0,220.6 L183.0,221.9 L180.0,223.2 L177.0,224.4 L174.0,225.7 L171.0,226.9 L168.0,228.2 L165.0,229.4 L162.0,230.6 L159.0,231.8 L156.0,232.9 L153.0,234.1 L150.0,235.3 L147.0,236.5 L144.0,237.6 L141.0,238.8 L138.0,239.9 L135.0,241.1 L132.0,242.3 L129.0,243.5 L126.0,244.6 L123.0,245.8 L120.0,246.9 L117.0,248.1 L114.0,249.3 L111.0,250.4 L108.0,251.6 L105.0,252.7 L102.0,253.9 L99.0,255.1 L96.0,256.2 L93.0,257.4 L90.0,258.6 L87.0,259.7 L84.0,260.9Z" fill="url(#gw)" fill-opacity="0.850"/>
<path d="M84.0,431.0 L87.0,430.0 L90.0,428.9 L93.0,427.9 L96.0,426.8 L99.0,425.7 L102.0,424.7 L105.0,423.6 L108.0,422.6 L111.0,421.5 L114.0,420.5 L117.0,419.4 L120.0,418.3 L123.0,417.3 L126.0,416.2 L129.0,415.1 L132.0,414.1 L135.0,413.0 L138.0,411.9 L141.0,410.8 L144.0,409.8 L147.0,408.7 L150.0,407.6 L153.0,406.5 L156.0,405.5 L159.0,404.4 L162.0,403.2 L165.0,402.1 L168.0,401.0 L171.0,399.8 L174.0,398.7 L177.0,397.5 L180.0,396.3 L183.0,395.1 L186.0,393.9 L189.0,392.7 L192.0,391.4 L195.0,390.2 L198.0,389.0 L201.0,387.7 L204.0,386.5 L207.0,385.2 L210.0,384.0 L213.0,382.8 L216.0,381.5 L219.0,380.3 L222.0,379.0 L225.0,377.8 L228.0,376.5 L231.0,375.2 L234.0,373.9 L237.0,372.6 L240.0,371.3 L243.0,370.1 L246.0,368.9 L249.0,367.7 L252.0,366.5 L255.0,365.4 L258.0,364.4 L261.0,363.3 L264.0,362.2 L267.0,361.1 L270.0,360.0 L273.0,358.8 L276.0,357.5 L279.0,356.2 L282.0,354.9 L285.0,353.6 L288.0,352.4 L291.0,351.2 L294.0,350.2 L297.0,349.1 L300.0,347.9 L303.0,346.4 L306.0,344.7 L309.0,343.0 L312.0,341.3 L315.0,339.6 L318.0,338.0 L321.0,336.6 L324.0,335.5 L327.0,334.5 L330.0,333.8 L333.0,333.1 L336.0,332.6 L339.0,332.1 L342.0,331.6 L345.0,331.1 L348.0,330.6 L351.0,329.8 L354.0,328.5 L357.0,327.2 L360.0,326.0 L363.0,324.8 L366.0,324.4 L369.0,324.5 L372.0,325.0 L375.0,325.9 L378.0,327.2 L381.0,328.7 L384.0,330.6 L387.0,332.0 L390.0,332.9 L393.0,332.6 L396.0,332.0 L399.0,330.1 L402.0,327.6 L405.0,326.1 L408.0,325.7 L411.0,325.5 L414.0,325.2 L417.0,324.8 L420.0,324.4 L423.0,323.9 L426.0,323.4 L429.0,322.8 L432.0,322.2 L434.0,321.8 L434.0,322.8 L432.0,323.2 L429.0,323.8 L426.0,324.4 L423.0,324.9 L420.0,325.4 L417.0,325.8 L414.0,326.2 L411.0,326.5 L408.0,326.7 L405.0,327.1 L402.0,328.6 L399.0,331.1 L396.0,333.0 L393.0,333.6 L390.0,333.9 L387.0,333.0 L384.0,331.6 L381.0,329.7 L378.0,328.2 L375.0,326.9 L372.0,326.0 L369.0,325.5 L366.0,325.6 L363.0,326.2 L360.0,327.6 L357.0,329.0 L354.0,330.6 L351.0,332.2 L348.0,333.3 L345.0,334.1 L342.0,334.9 L339.0,335.7 L336.0,336.6 L333.0,337.4 L330.0,338.4 L327.0,339.5 L324.0,340.7 L321.0,342.1 L318.0,343.6 L315.0,345.4 L312.0,347.2 L309.0,349.1 L306.0,350.9 L303.0,352.7 L300.0,354.3 L297.0,355.6 L294.0,356.8 L291.0,358.0 L288.0,359.2 L285.0,360.6 L282.0,361.9 L279.0,363.3 L276.0,364.7 L273.0,366.1 L270.0,367.4 L267.0,368.6 L264.0,369.8 L261.0,371.0 L258.0,372.1 L255.0,373.3 L252.0,374.4 L249.0,375.7 L246.0,377.0 L243.0,378.3 L240.0,379.7 L237.0,381.0 L234.0,382.4 L231.0,383.8 L228.0,385.2 L225.0,386.6 L222.0,387.9 L219.0,389.2 L216.0,390.6 L213.0,391.9 L210.0,393.2 L207.0,394.6 L204.0,395.9 L201.0,397.2 L198.0,398.6 L195.0,399.9 L192.0,401.2 L189.0,402.5 L186.0,403.8 L183.0,405.1 L180.0,406.4 L177.0,407.7 L174.0,409.0 L171.0,410.2 L168.0,411.4 L165.0,412.7 L162.0,413.9 L159.0,415.1 L156.0,416.3 L153.0,417.5 L150.0,418.6 L147.0,419.8 L144.0,421.0 L141.0,422.1 L138.0,423.3 L135.0,424.4 L132.0,425.6 L129.0,426.8 L126.0,427.9 L123.0,429.1 L120.0,430.2 L117.0,431.4 L114.0,432.5 L111.0,433.7 L108.0,434.8 L105.0,436.0 L102.0,437.1 L99.0,438.3 L96.0,439.4 L93.0,440.6 L90.0,441.7 L87.0,442.9 L84.0,444.0Z" fill="url(#gw)" fill-opacity="1.300"/>
<path d="M84.0,435.5 L87.0,434.4 L90.0,433.3 L93.0,432.2 L96.0,431.1 L99.0,430.0 L102.0,428.9 L105.0,427.8 L108.0,426.7 L111.0,425.6 L114.0,424.5 L117.0,423.4 L120.0,422.3 L123.0,421.2 L126.0,420.1 L129.0,418.9 L132.0,417.8 L135.0,416.7 L138.0,415.6 L141.0,414.5 L144.0,413.4 L147.0,412.2 L150.0,411.1 L153.0,410.0 L156.0,408.9 L159.0,407.7 L162.0,406.6 L165.0,405.4 L168.0,404.2 L171.0,403.0 L174.0,401.8 L177.0,400.6 L180.0,399.3 L183.0,398.1 L186.0,396.8 L189.0,395.6 L192.0,394.3 L195.0,393.0 L198.0,391.8 L201.0,390.5 L204.0,389.2 L207.0,387.9 L210.0,386.6 L213.0,385.3 L216.0,384.0 L219.0,382.7 L222.0,381.5 L225.0,380.1 L228.0,378.8 L231.0,377.5 L234.0,376.1 L237.0,374.8 L240.0,373.5 L243.0,372.2 L246.0,370.9 L249.0,369.7 L252.0,368.5 L255.0,367.3 L258.0,366.2 L261.0,365.2 L264.0,364.0 L267.0,362.9 L270.0,361.7 L273.0,360.5 L276.0,359.2 L279.0,357.8 L282.0,356.5 L285.0,355.2 L288.0,353.9 L291.0,352.7 L294.0,351.6 L297.0,350.5 L300.0,349.2 L303.0,347.7 L306.0,346.0 L309.0,344.2 L312.0,342.5 L315.0,340.7 L318.0,339.1 L321.0,337.6 L324.0,336.4 L327.0,335.3 L330.0,334.4 L333.0,333.6 L336.0,333.0 L339.0,332.3 L342.0,331.7 L345.0,331.1 L348.0,330.5 L351.0,329.7 L354.0,328.4 L357.0,327.1 L360.0,325.9 L363.0,324.8 L366.0,324.4 L369.0,324.5 L372.0,325.0 L375.0,325.9 L378.0,327.2 L381.0,328.7 L384.0,330.6 L387.0,332.0 L390.0,332.9 L393.0,332.6 L396.0,332.0 L399.0,330.1 L402.0,327.6 L405.0,326.1 L408.0,325.7 L411.0,325.5 L414.0,325.2 L417.0,324.8 L420.0,324.4 L423.0,323.9 L426.0,323.4 L429.0,322.8 L432.0,322.2 L434.0,321.8 L434.0,322.8 L432.0,323.2 L429.0,323.8 L426.0,324.4 L423.0,324.9 L420.0,325.4 L417.0,325.8 L414.0,326.2 L411.0,326.5 L408.0,326.7 L405.0,327.1 L402.0,328.6 L399.0,331.1 L396.0,333.0 L393.0,333.6 L390.0,333.9 L387.0,333.0 L384.0,331.6 L381.0,329.7 L378.0,328.2 L375.0,326.9 L372.0,326.0 L369.0,325.5 L366.0,325.6 L363.0,326.2 L360.0,327.6 L357.0,329.0 L354.0,330.6 L351.0,332.2 L348.0,333.3 L345.0,334.1 L342.0,334.9 L339.0,335.7 L336.0,336.6 L333.0,337.4 L330.0,338.4 L327.0,339.5 L324.0,340.7 L321.0,342.1 L318.0,343.6 L315.0,345.4 L312.0,347.2 L309.0,349.1 L306.0,350.9 L303.0,352.7 L300.0,354.3 L297.0,355.6 L294.0,356.8 L291.0,358.0 L288.0,359.2 L285.0,360.6 L282.0,361.9 L279.0,363.3 L276.0,364.7 L273.0,366.1 L270.0,367.4 L267.0,368.6 L264.0,369.8 L261.0,371.0 L258.0,372.1 L255.0,373.3 L252.0,374.4 L249.0,375.7 L246.0,377.0 L243.0,378.3 L240.0,379.7 L237.0,381.0 L234.0,382.4 L231.0,383.8 L228.0,385.2 L225.0,386.6 L222.0,387.9 L219.0,389.2 L216.0,390.6 L213.0,391.9 L210.0,393.2 L207.0,394.6 L204.0,395.9 L201.0,397.2 L198.0,398.6 L195.0,399.9 L192.0,401.2 L189.0,402.5 L186.0,403.8 L183.0,405.1 L180.0,406.4 L177.0,407.7 L174.0,409.0 L171.0,410.2 L168.0,411.4 L165.0,412.7 L162.0,413.9 L159.0,415.1 L156.0,416.3 L153.0,417.5 L150.0,418.6 L147.0,419.8 L144.0,421.0 L141.0,422.1 L138.0,423.3 L135.0,424.4 L132.0,425.6 L129.0,426.8 L126.0,427.9 L123.0,429.1 L120.0,430.2 L117.0,431.4 L114.0,432.5 L111.0,433.7 L108.0,434.8 L105.0,436.0 L102.0,437.1 L99.0,438.3 L96.0,439.4 L93.0,440.6 L90.0,441.7 L87.0,442.9 L84.0,444.0Z" fill="url(#gw)" fill-opacity="1.300"/>
<path d="M84.0,439.0 L87.0,437.9 L90.0,436.8 L93.0,435.7 L96.0,434.5 L99.0,433.4 L102.0,432.3 L105.0,431.2 L108.0,430.0 L111.0,428.9 L114.0,427.8 L117.0,426.7 L120.0,425.5 L123.0,424.4 L126.0,423.3 L129.0,422.1 L132.0,421.0 L135.0,419.8 L138.0,418.7 L141.0,417.6 L144.0,416.4 L147.0,415.3 L150.0,414.1 L153.0,413.0 L156.0,411.8 L159.0,410.6 L162.0,409.5 L165.0,408.3 L168.0,407.0 L171.0,405.8 L174.0,404.6 L177.0,403.3 L180.0,402.1 L183.0,400.8 L186.0,399.5 L189.0,398.2 L192.0,396.9 L195.0,395.6 L198.0,394.3 L201.0,393.0 L204.0,391.7 L207.0,390.4 L210.0,389.0 L213.0,387.7 L216.0,386.4 L219.0,385.1 L222.0,383.8 L225.0,382.4 L228.0,381.1 L231.0,379.7 L234.0,378.3 L237.0,377.0 L240.0,375.6 L243.0,374.3 L246.0,373.0 L249.0,371.7 L252.0,370.5 L255.0,369.3 L258.0,368.2 L261.0,367.0 L264.0,365.9 L267.0,364.7 L270.0,363.5 L273.0,362.2 L276.0,360.9 L279.0,359.5 L282.0,358.1 L285.0,356.8 L288.0,355.4 L291.0,354.2 L294.0,353.1 L297.0,351.9 L300.0,350.6 L303.0,349.0 L306.0,347.3 L309.0,345.4 L312.0,343.6 L315.0,341.8 L318.0,340.1 L321.0,338.6 L324.0,337.3 L327.0,336.2 L330.0,335.2 L333.0,334.3 L336.0,333.6 L339.0,332.9 L342.0,332.3 L345.0,331.6 L348.0,331.0 L351.0,330.0 L354.0,328.7 L357.0,327.3 L360.0,326.1 L363.0,324.9 L366.0,324.4 L369.0,324.5 L372.0,325.0 L375.0,325.9 L378.0,327.2 L381.0,328.7 L384.0,330.6 L387.0,332.0 L390.0,332.9 L393.0,332.6 L396.0,332.0 L399.0,330.1 L402.0,327.6 L405.0,326.1 L408.0,325.7 L411.0,325.5 L414.0,325.2 L417.0,324.8 L420.0,324.4 L423.0,323.9 L426.0,323.4 L429.0,322.8 L432.0,322.2 L434.0,321.8 L434.0,322.8 L432.0,323.2 L429.0,323.8 L426.0,324.4 L423.0,324.9 L420.0,325.4 L417.0,325.8 L414.0,326.2 L411.0,326.5 L408.0,326.7 L405.0,327.1 L402.0,328.6 L399.0,331.1 L396.0,333.0 L393.0,333.6 L390.0,333.9 L387.0,333.0 L384.0,331.6 L381.0,329.7 L378.0,328.2 L375.0,326.9 L372.0,326.0 L369.0,325.5 L366.0,325.6 L363.0,326.2 L360.0,327.6 L357.0,329.0 L354.0,330.6 L351.0,332.2 L348.0,333.3 L345.0,334.1 L342.0,334.9 L339.0,335.7 L336.0,336.6 L333.0,337.4 L330.0,338.4 L327.0,339.5 L324.0,340.7 L321.0,342.1 L318.0,343.6 L315.0,345.4 L312.0,347.2 L309.0,349.1 L306.0,350.9 L303.0,352.7 L300.0,354.3 L297.0,355.6 L294.0,356.8 L291.0,358.0 L288.0,359.2 L285.0,360.6 L282.0,361.9 L279.0,363.3 L276.0,364.7 L273.0,366.1 L270.0,367.4 L267.0,368.6 L264.0,369.8 L261.0,371.0 L258.0,372.1 L255.0,373.3 L252.0,374.4 L249.0,375.7 L246.0,377.0 L243.0,378.3 L240.0,379.7 L237.0,381.0 L234.0,382.4 L231.0,383.8 L228.0,385.2 L225.0,386.6 L222.0,387.9 L219.0,389.2 L216.0,390.6 L213.0,391.9 L210.0,393.2 L207.0,394.6 L204.0,395.9 L201.0,397.2 L198.0,398.6 L195.0,399.9 L192.0,401.2 L189.0,402.5 L186.0,403.8 L183.0,405.1 L180.0,406.4 L177.0,407.7 L174.0,409.0 L171.0,410.2 L168.0,411.4 L165.0,412.7 L162.0,413.9 L159.0,415.1 L156.0,416.3 L153.0,417.5 L150.0,418.6 L147.0,419.8 L144.0,421.0 L141.0,422.1 L138.0,423.3 L135.0,424.4 L132.0,425.6 L129.0,426.8 L126.0,427.9 L123.0,429.1 L120.0,430.2 L117.0,431.4 L114.0,432.5 L111.0,433.7 L108.0,434.8 L105.0,436.0 L102.0,437.1 L99.0,438.3 L96.0,439.4 L93.0,440.6 L90.0,441.7 L87.0,442.9 L84.0,444.0Z" fill="url(#gw)" fill-opacity="1.300"/>
<path d="M84.0,444.4 L87.0,443.3 L90.0,442.3 L93.0,441.2 L96.0,440.1 L99.0,439.0 L102.0,438.0 L105.0,436.9 L108.0,435.8 L111.0,434.8 L114.0,433.7 L117.0,432.6 L120.0,431.6 L123.0,430.5 L126.0,429.4 L129.0,428.3 L132.0,427.2 L135.0,426.2 L138.0,425.1 L141.0,424.0 L144.0,422.9 L147.0,421.8 L150.0,420.8 L153.0,419.7 L156.0,418.6 L159.0,417.5 L162.0,416.3 L165.0,415.2 L168.0,414.1 L171.0,412.9 L174.0,411.7 L177.0,410.5 L180.0,409.3 L183.0,408.1 L186.0,406.9 L189.0,405.6 L192.0,404.4 L195.0,403.2 L198.0,401.9 L201.0,400.6 L204.0,399.4 L207.0,398.1 L210.0,396.9 L213.0,395.6 L216.0,394.3 L219.0,393.1 L222.0,391.8 L225.0,390.5 L228.0,389.3 L231.0,388.0 L234.0,386.7 L237.0,385.4 L240.0,384.1 L243.0,382.9 L246.0,381.6 L249.0,380.4 L252.0,379.3 L255.0,378.2 L258.0,377.1 L261.0,376.0 L264.0,374.9 L267.0,373.8 L270.0,372.6 L273.0,371.4 L276.0,370.1 L279.0,368.8 L282.0,367.5 L285.0,366.1 L288.0,364.9 L291.0,363.7 L294.0,362.6 L297.0,361.5 L300.0,360.3 L303.0,358.8 L306.0,357.2 L309.0,355.5 L312.0,353.8 L315.0,352.2 L318.0,350.6 L321.0,349.2 L324.0,348.1 L327.0,347.2 L330.0,346.4 L333.0,345.8 L336.0,345.3 L339.0,344.7 L342.0,344.2 L345.0,343.7 L348.0,343.1 L351.0,342.2 L354.0,340.9 L357.0,339.5 L360.0,338.3 L363.0,337.1 L366.0,336.7 L369.0,336.7 L372.0,337.2 L375.0,338.1 L378.0,339.4 L381.0,341.0 L384.0,342.9 L387.0,344.3 L390.0,345.2 L393.0,344.9 L396.0,344.3 L399.0,342.4 L402.0,339.9 L405.0,338.4 L408.0,338.0 L411.0,337.8 L414.0,337.5 L417.0,337.1 L420.0,336.7 L423.0,336.2 L426.0,335.7 L429.0,335.1 L432.0,334.5 L434.0,334.1 L434.0,335.1 L432.0,335.5 L429.0,336.1 L426.0,336.7 L423.0,337.2 L420.0,337.7 L417.0,338.1 L414.0,338.5 L411.0,338.8 L408.0,339.0 L405.0,339.4 L402.0,340.9 L399.0,343.4 L396.0,345.3 L393.0,345.9 L390.0,346.2 L387.0,345.3 L384.0,343.9 L381.0,342.0 L378.0,340.4 L375.0,339.1 L372.0,338.2 L369.0,337.8 L366.0,337.8 L363.0,338.5 L360.0,339.9 L357.0,341.4 L354.0,343.0 L351.0,344.7 L348.0,345.8 L345.0,346.7 L342.0,347.5 L339.0,348.3 L336.0,349.2 L333.0,350.0 L330.0,351.0 L327.0,352.1 L324.0,353.3 L321.0,354.7 L318.0,356.2 L315.0,358.0 L312.0,359.7 L309.0,361.6 L306.0,363.4 L303.0,365.2 L300.0,366.7 L297.0,368.1 L294.0,369.3 L291.0,370.5 L288.0,371.7 L285.0,373.1 L282.0,374.5 L279.0,375.9 L276.0,377.3 L273.0,378.7 L270.0,380.0 L267.0,381.3 L264.0,382.5 L261.0,383.7 L258.0,384.8 L255.0,386.0 L252.0,387.2 L249.0,388.5 L246.0,389.8 L243.0,391.1 L240.0,392.4 L237.0,393.8 L234.0,395.2 L231.0,396.6 L228.0,398.0 L225.0,399.3 L222.0,400.7 L219.0,402.0 L216.0,403.4 L213.0,404.7 L210.0,406.1 L207.0,407.4 L204.0,408.8 L201.0,410.1 L198.0,411.5 L195.0,412.8 L192.0,414.2 L189.0,415.5 L186.0,416.8 L183.0,418.1 L180.0,419.4 L177.0,420.7 L174.0,422.0 L171.0,423.3 L168.0,424.5 L165.0,425.8 L162.0,427.0 L159.0,428.2 L156.0,429.4 L153.0,430.6 L150.0,431.8 L147.0,432.9 L144.0,434.1 L141.0,435.3 L138.0,436.4 L135.0,437.6 L132.0,438.8 L129.0,440.0 L126.0,441.1 L123.0,442.3 L120.0,443.5 L117.0,444.6 L114.0,445.8 L111.0,447.0 L108.0,448.1 L105.0,449.3 L102.0,450.4 L99.0,451.6 L96.0,452.8 L93.0,453.9 L90.0,455.1 L87.0,456.3 L84.0,457.4Z" fill="url(#gw)" fill-opacity="0.850"/>
<path d="M84.0,448.9 L87.0,447.8 L90.0,446.7 L93.0,445.6 L96.0,444.4 L99.0,443.3 L102.0,442.2 L105.0,441.1 L108.0,440.0 L111.0,438.9 L114.0,437.8 L117.0,436.6 L120.0,435.5 L123.0,434.4 L126.0,433.3 L129.0,432.1 L132.0,431.0 L135.0,429.9 L138.0,428.8 L141.0,427.6 L144.0,426.5 L147.0,425.4 L150.0,424.3 L153.0,423.1 L156.0,422.0 L159.0,420.8 L162.0,419.7 L165.0,418.5 L168.0,417.3 L171.0,416.1 L174.0,414.9 L177.0,413.6 L180.0,412.4 L183.0,411.1 L186.0,409.8 L189.0,408.6 L192.0,407.3 L195.0,406.0 L198.0,404.7 L201.0,403.4 L204.0,402.1 L207.0,400.8 L210.0,399.4 L213.0,398.1 L216.0,396.8 L219.0,395.5 L222.0,394.2 L225.0,392.9 L228.0,391.6 L231.0,390.3 L234.0,388.9 L237.0,387.6 L240.0,386.3 L243.0,385.0 L246.0,383.7 L249.0,382.4 L252.0,381.2 L255.0,380.1 L258.0,379.0 L261.0,377.8 L264.0,376.7 L267.0,375.6 L270.0,374.4 L273.0,373.1 L276.0,371.8 L279.0,370.4 L282.0,369.1 L285.0,367.7 L288.0,366.4 L291.0,365.2 L294.0,364.1 L297.0,362.9 L300.0,361.7 L303.0,360.2 L306.0,358.5 L309.0,356.7 L312.0,355.0 L315.0,353.3 L318.0,351.6 L321.0,350.2 L324.0,349.0 L327.0,347.9 L330.0,347.0 L333.0,346.2 L336.0,345.6 L339.0,344.9 L342.0,344.3 L345.0,343.7 L348.0,343.0 L351.0,342.2 L354.0,340.8 L357.0,339.5 L360.0,338.2 L363.0,337.1 L366.0,336.6 L369.0,336.7 L372.0,337.2 L375.0,338.1 L378.0,339.4 L381.0,341.0 L384.0,342.9 L387.0,344.3 L390.0,345.2 L393.0,344.9 L396.0,344.3 L399.0,342.4 L402.0,339.9 L405.0,338.4 L408.0,338.0 L411.0,337.8 L414.0,337.5 L417.0,337.1 L420.0,336.7 L423.0,336.2 L426.0,335.7 L429.0,335.1 L432.0,334.5 L434.0,334.1 L434.0,335.1 L432.0,335.5 L429.0,336.1 L426.0,336.7 L423.0,337.2 L420.0,337.7 L417.0,338.1 L414.0,338.5 L411.0,338.8 L408.0,339.0 L405.0,339.4 L402.0,340.9 L399.0,343.4 L396.0,345.3 L393.0,345.9 L390.0,346.2 L387.0,345.3 L384.0,343.9 L381.0,342.0 L378.0,340.4 L375.0,339.1 L372.0,338.2 L369.0,337.8 L366.0,337.8 L363.0,338.5 L360.0,339.9 L357.0,341.4 L354.0,343.0 L351.0,344.7 L348.0,345.8 L345.0,346.7 L342.0,347.5 L339.0,348.3 L336.0,349.2 L333.0,350.0 L330.0,351.0 L327.0,352.1 L324.0,353.3 L321.0,354.7 L318.0,356.2 L315.0,358.0 L312.0,359.7 L309.0,361.6 L306.0,363.4 L303.0,365.2 L300.0,366.7 L297.0,368.1 L294.0,369.3 L291.0,370.5 L288.0,371.7 L285.0,373.1 L282.0,374.5 L279.0,375.9 L276.0,377.3 L273.0,378.7 L270.0,380.0 L267.0,381.3 L264.0,382.5 L261.0,383.7 L258.0,384.8 L255.0,386.0 L252.0,387.2 L249.0,388.5 L246.0,389.8 L243.0,391.1 L240.0,392.4 L237.0,393.8 L234.0,395.2 L231.0,396.6 L228.0,398.0 L225.0,399.3 L222.0,400.7 L219.0,402.0 L216.0,403.4 L213.0,404.7 L210.0,406.1 L207.0,407.4 L204.0,408.8 L201.0,410.1 L198.0,411.5 L195.0,412.8 L192.0,414.2 L189.0,415.5 L186.0,416.8 L183.0,418.1 L180.0,419.4 L177.0,420.7 L174.0,422.0 L171.0,423.3 L168.0,424.5 L165.0,425.8 L162.0,427.0 L159.0,428.2 L156.0,429.4 L153.0,430.6 L150.0,431.8 L147.0,432.9 L144.0,434.1 L141.0,435.3 L138.0,436.4 L135.0,437.6 L132.0,438.8 L129.0,440.0 L126.0,441.1 L123.0,442.3 L120.0,443.5 L117.0,444.6 L114.0,445.8 L111.0,447.0 L108.0,448.1 L105.0,449.3 L102.0,450.4 L99.0,451.6 L96.0,452.8 L93.0,453.9 L90.0,455.1 L87.0,456.3 L84.0,457.4Z" fill="url(#gw)" fill-opacity="0.850"/>
<path d="M84.0,452.4 L87.0,451.3 L90.0,450.1 L93.0,449.0 L96.0,447.9 L99.0,446.7 L102.0,445.6 L105.0,444.4 L108.0,443.3 L111.0,442.2 L114.0,441.0 L117.0,439.9 L120.0,438.8 L123.0,437.6 L126.0,436.5 L129.0,435.3 L132.0,434.2 L135.0,433.0 L138.0,431.9 L141.0,430.7 L144.0,429.6 L147.0,428.4 L150.0,427.3 L153.0,426.1 L156.0,424.9 L159.0,423.7 L162.0,422.5 L165.0,421.3 L168.0,420.1 L171.0,418.9 L174.0,417.6 L177.0,416.4 L180.0,415.1 L183.0,413.8 L186.0,412.5 L189.0,411.2 L192.0,409.9 L195.0,408.6 L198.0,407.2 L201.0,405.9 L204.0,404.6 L207.0,403.2 L210.0,401.9 L213.0,400.5 L216.0,399.2 L219.0,397.9 L222.0,396.6 L225.0,395.2 L228.0,393.8 L231.0,392.5 L234.0,391.1 L237.0,389.7 L240.0,388.4 L243.0,387.1 L246.0,385.7 L249.0,384.5 L252.0,383.2 L255.0,382.0 L258.0,380.9 L261.0,379.7 L264.0,378.6 L267.0,377.4 L270.0,376.1 L273.0,374.8 L276.0,373.5 L279.0,372.1 L282.0,370.7 L285.0,369.3 L288.0,367.9 L291.0,366.7 L294.0,365.5 L297.0,364.3 L300.0,363.0 L303.0,361.5 L306.0,359.8 L309.0,358.0 L312.0,356.1 L315.0,354.4 L318.0,352.7 L321.0,351.2 L324.0,349.9 L327.0,348.8 L330.0,347.8 L333.0,347.0 L336.0,346.3 L339.0,345.6 L342.0,344.8 L345.0,344.2 L348.0,343.5 L351.0,342.5 L354.0,341.1 L357.0,339.7 L360.0,338.4 L363.0,337.2 L366.0,336.7 L369.0,336.7 L372.0,337.2 L375.0,338.1 L378.0,339.4 L381.0,341.0 L384.0,342.9 L387.0,344.3 L390.0,345.2 L393.0,344.9 L396.0,344.3 L399.0,342.4 L402.0,339.9 L405.0,338.4 L408.0,338.0 L411.0,337.8 L414.0,337.5 L417.0,337.1 L420.0,336.7 L423.0,336.2 L426.0,335.7 L429.0,335.1 L432.0,334.5 L434.0,334.1 L434.0,335.1 L432.0,335.5 L429.0,336.1 L426.0,336.7 L423.0,337.2 L420.0,337.7 L417.0,338.1 L414.0,338.5 L411.0,338.8 L408.0,339.0 L405.0,339.4 L402.0,340.9 L399.0,343.4 L396.0,345.3 L393.0,345.9 L390.0,346.2 L387.0,345.3 L384.0,343.9 L381.0,342.0 L378.0,340.4 L375.0,339.1 L372.0,338.2 L369.0,337.8 L366.0,337.8 L363.0,338.5 L360.0,339.9 L357.0,341.4 L354.0,343.0 L351.0,344.7 L348.0,345.8 L345.0,346.7 L342.0,347.5 L339.0,348.3 L336.0,349.2 L333.0,350.0 L330.0,351.0 L327.0,352.1 L324.0,353.3 L321.0,354.7 L318.0,356.2 L315.0,358.0 L312.0,359.7 L309.0,361.6 L306.0,363.4 L303.0,365.2 L300.0,366.7 L297.0,368.1 L294.0,369.3 L291.0,370.5 L288.0,371.7 L285.0,373.1 L282.0,374.5 L279.0,375.9 L276.0,377.3 L273.0,378.7 L270.0,380.0 L267.0,381.3 L264.0,382.5 L261.0,383.7 L258.0,384.8 L255.0,386.0 L252.0,387.2 L249.0,388.5 L246.0,389.8 L243.0,391.1 L240.0,392.4 L237.0,393.8 L234.0,395.2 L231.0,396.6 L228.0,398.0 L225.0,399.3 L222.0,400.7 L219.0,402.0 L216.0,403.4 L213.0,404.7 L210.0,406.1 L207.0,407.4 L204.0,408.8 L201.0,410.1 L198.0,411.5 L195.0,412.8 L192.0,414.2 L189.0,415.5 L186.0,416.8 L183.0,418.1 L180.0,419.4 L177.0,420.7 L174.0,422.0 L171.0,423.3 L168.0,424.5 L165.0,425.8 L162.0,427.0 L159.0,428.2 L156.0,429.4 L153.0,430.6 L150.0,431.8 L147.0,432.9 L144.0,434.1 L141.0,435.3 L138.0,436.4 L135.0,437.6 L132.0,438.8 L129.0,440.0 L126.0,441.1 L123.0,442.3 L120.0,443.5 L117.0,444.6 L114.0,445.8 L111.0,447.0 L108.0,448.1 L105.0,449.3 L102.0,450.4 L99.0,451.6 L96.0,452.8 L93.0,453.9 L90.0,455.1 L87.0,456.3 L84.0,457.4Z" fill="url(#gw)" fill-opacity="0.850"/>
</g>
<g>
<path d="M84.0,245.8 L87.0,244.7 L90.0,243.5 L93.0,242.3 L96.0,241.1 L99.0,240.0 L102.0,238.8 L105.0,237.6 L108.0,236.5 L111.0,235.3 L114.0,234.1 L117.0,233.0 L120.0,231.8 L123.0,230.6 L126.0,229.5 L129.0,228.3 L132.0,227.1 L135.0,225.9 L138.0,224.7 L141.0,223.6 L144.0,222.4 L147.0,221.2 L150.0,220.0 L153.0,218.8 L156.0,217.6 L159.0,216.4 L162.0,215.2 L165.0,214.0 L168.0,212.7 L171.0,211.5 L174.0,210.2 L177.0,208.9 L180.0,207.7 L183.0,206.4 L186.0,205.0 L189.0,203.7 L192.0,202.4 L195.0,201.1 L198.0,199.7 L201.0,198.4 L204.0,197.1 L207.0,195.7 L210.0,194.4 L213.0,193.1 L216.0,191.8 L219.0,190.4 L222.0,189.1 L225.0,187.8 L228.0,186.5 L231.0,185.1 L234.0,183.8 L237.0,182.5 L240.0,181.2 L243.0,179.9 L246.0,178.6 L249.0,177.4 L252.0,176.2 L255.0,175.1 L258.0,174.0 L261.0,172.9 L264.0,171.8 L267.0,170.7 L270.0,169.5 L273.0,168.2 L276.0,166.9 L279.0,165.5 L282.0,164.2 L285.0,162.8 L288.0,161.4 L291.0,160.0 L294.0,158.7 L297.0,157.4 L300.0,156.0 L303.0,154.4 L306.0,152.6 L309.0,150.7 L312.0,148.9 L315.0,147.1 L318.0,145.3 L321.0,143.8 L324.0,142.5 L327.0,141.3 L330.0,140.3 L333.0,139.5 L336.0,138.7 L339.0,138.0 L342.0,137.3 L345.0,136.6 L348.0,135.8 L351.0,134.7 L354.0,133.1 L357.0,131.5 L360.0,130.0 L363.0,128.5 L366.0,127.9 L369.0,127.8 L372.0,128.2 L375.0,129.1 L378.0,130.2 L381.0,131.8 L384.0,133.7 L387.0,135.1 L390.0,136.0 L393.0,135.8 L396.0,135.1 L399.0,133.2 L402.0,130.8 L405.0,129.3 L408.0,128.9 L411.0,128.7 L414.0,128.4 L417.0,128.0 L420.0,127.6 L423.0,127.1 L426.0,126.6 L429.0,126.0 L432.0,125.4 L434.0,125.0 L434.0,127.1 L432.0,127.5 L429.0,128.1 L426.0,128.7 L423.0,129.2 L420.0,129.7 L417.0,130.1 L414.0,130.5 L411.0,130.8 L408.0,131.0 L405.0,131.4 L402.0,132.9 L399.0,135.4 L396.0,137.3 L393.0,137.9 L390.0,138.2 L387.0,137.3 L384.0,135.9 L381.0,134.1 L378.0,132.5 L375.0,131.4 L372.0,130.5 L369.0,130.1 L366.0,130.2 L363.0,131.0 L360.0,132.5 L357.0,134.0 L354.0,135.7 L351.0,137.4 L348.0,138.6 L345.0,139.5 L342.0,140.3 L339.0,141.1 L336.0,142.0 L333.0,142.9 L330.0,143.9 L327.0,145.0 L324.0,146.3 L321.0,147.7 L318.0,149.3 L315.0,151.1 L312.0,153.0 L309.0,154.9 L306.0,156.8 L303.0,158.6 L300.0,160.3 L297.0,161.8 L294.0,163.1 L291.0,164.5 L288.0,165.9 L285.0,167.4 L282.0,168.8 L279.0,170.2 L276.0,171.6 L273.0,173.0 L270.0,174.3 L267.0,175.5 L264.0,176.6 L261.0,177.7 L258.0,178.8 L255.0,180.0 L252.0,181.1 L249.0,182.3 L246.0,183.5 L243.0,184.8 L240.0,186.0 L237.0,187.3 L234.0,188.6 L231.0,189.9 L228.0,191.3 L225.0,192.6 L222.0,193.8 L219.0,195.1 L216.0,196.4 L213.0,197.7 L210.0,199.0 L207.0,200.3 L204.0,201.6 L201.0,202.8 L198.0,204.1 L195.0,205.4 L192.0,206.7 L189.0,208.0 L186.0,209.2 L183.0,210.5 L180.0,211.8 L177.0,213.0 L174.0,214.2 L171.0,215.5 L168.0,216.7 L165.0,217.9 L162.0,219.1 L159.0,220.2 L156.0,221.4 L153.0,222.6 L150.0,223.7 L147.0,224.9 L144.0,226.0 L141.0,227.2 L138.0,228.3 L135.0,229.5 L132.0,230.6 L129.0,231.8 L126.0,232.9 L123.0,234.1 L120.0,235.2 L117.0,236.3 L114.0,237.5 L111.0,238.6 L108.0,239.8 L105.0,240.9 L102.0,242.0 L99.0,243.2 L96.0,244.3 L93.0,245.5 L90.0,246.6 L87.0,247.8 L84.0,248.9Z" fill="url(#gn)" fill-opacity="1.000"/>
<path d="M84.0,258.3 L87.0,257.1 L90.0,255.9 L93.0,254.7 L96.0,253.5 L99.0,252.3 L102.0,251.2 L105.0,250.0 L108.0,248.8 L111.0,247.6 L114.0,246.4 L117.0,245.2 L120.0,244.0 L123.0,242.8 L126.0,241.7 L129.0,240.5 L132.0,239.3 L135.0,238.1 L138.0,236.9 L141.0,235.7 L144.0,234.5 L147.0,233.3 L150.0,232.1 L153.0,230.9 L156.0,229.7 L159.0,228.5 L162.0,227.2 L165.0,226.0 L168.0,224.7 L171.0,223.5 L174.0,222.2 L177.0,220.9 L180.0,219.6 L183.0,218.3 L186.0,216.9 L189.0,215.6 L192.0,214.3 L195.0,212.9 L198.0,211.6 L201.0,210.2 L204.0,208.9 L207.0,207.5 L210.0,206.2 L213.0,204.8 L216.0,203.5 L219.0,202.2 L222.0,200.8 L225.0,199.5 L228.0,198.2 L231.0,196.8 L234.0,195.5 L237.0,194.1 L240.0,192.8 L243.0,191.5 L246.0,190.3 L249.0,189.0 L252.0,187.8 L255.0,186.7 L258.0,185.6 L261.0,184.5 L264.0,183.4 L267.0,182.3 L270.0,181.1 L273.0,179.8 L276.0,178.5 L279.0,177.1 L282.0,175.8 L285.0,174.4 L288.0,173.0 L291.0,171.6 L294.0,170.3 L297.0,169.0 L300.0,167.6 L303.0,166.0 L306.0,164.2 L309.0,162.3 L312.0,160.5 L315.0,158.7 L318.0,156.9 L321.0,155.4 L324.0,154.1 L327.0,152.9 L330.0,151.9 L333.0,151.1 L336.0,150.3 L339.0,149.6 L342.0,148.9 L345.0,148.2 L348.0,147.4 L351.0,146.3 L354.0,144.7 L357.0,143.1 L360.0,141.6 L363.0,140.2 L366.0,139.5 L369.0,139.5 L372.0,139.9 L375.0,140.8 L378.0,142.0 L381.0,143.7 L384.0,145.6 L387.0,147.1 L390.0,148.0 L393.0,147.9 L396.0,147.2 L399.0,145.4 L402.0,143.0 L405.0,141.5 L408.0,141.1 L411.0,140.9 L414.0,140.6 L417.0,140.3 L420.0,139.9 L423.0,139.4 L426.0,138.9 L429.0,138.3 L432.0,137.7 L434.0,137.3 L434.0,139.4 L432.0,139.8 L429.0,140.4 L426.0,141.0 L423.0,141.5 L420.0,142.0 L417.0,142.4 L414.0,142.8 L411.0,143.1 L408.0,143.3 L405.0,143.6 L402.0,145.1 L399.0,147.6 L396.0,149.4 L393.0,150.1 L390.0,150.2 L387.0,149.3 L384.0,147.8 L381.0,145.9 L378.0,144.3 L375.0,143.1 L372.0,142.2 L369.0,141.8 L366.0,141.9 L363.0,142.6 L360.0,144.1 L357.0,145.7 L354.0,147.3 L351.0,149.0 L348.0,150.2 L345.0,151.1 L342.0,151.9 L339.0,152.7 L336.0,153.6 L333.0,154.5 L330.0,155.5 L327.0,156.6 L324.0,157.9 L321.0,159.3 L318.0,160.9 L315.0,162.7 L312.0,164.6 L309.0,166.5 L306.0,168.4 L303.0,170.2 L300.0,171.9 L297.0,173.4 L294.0,174.7 L291.0,176.1 L288.0,177.5 L285.0,179.0 L282.0,180.4 L279.0,181.8 L276.0,183.2 L273.0,184.6 L270.0,185.9 L267.0,187.1 L264.0,188.2 L261.0,189.4 L258.0,190.5 L255.0,191.6 L252.0,192.7 L249.0,193.9 L246.0,195.2 L243.0,196.4 L240.0,197.7 L237.0,199.0 L234.0,200.3 L231.0,201.6 L228.0,203.0 L225.0,204.3 L222.0,205.6 L219.0,206.9 L216.0,208.2 L213.0,209.5 L210.0,210.8 L207.0,212.1 L204.0,213.4 L201.0,214.7 L198.0,216.0 L195.0,217.3 L192.0,218.6 L189.0,219.9 L186.0,221.1 L183.0,222.4 L180.0,223.7 L177.0,224.9 L174.0,226.2 L171.0,227.4 L168.0,228.7 L165.0,229.9 L162.0,231.1 L159.0,232.3 L156.0,233.4 L153.0,234.6 L150.0,235.8 L147.0,237.0 L144.0,238.1 L141.0,239.3 L138.0,240.4 L135.0,241.6 L132.0,242.8 L129.0,244.0 L126.0,245.1 L123.0,246.3 L120.0,247.4 L117.0,248.6 L114.0,249.8 L111.0,250.9 L108.0,252.1 L105.0,253.2 L102.0,254.4 L99.0,255.6 L96.0,256.7 L93.0,257.9 L90.0,259.1 L87.0,260.2 L84.0,261.4Z" fill="url(#gn)" fill-opacity="0.850"/>
<path d="M84.0,441.4 L87.0,440.3 L90.0,439.1 L93.0,437.9 L96.0,436.7 L99.0,435.6 L102.0,434.4 L105.0,433.2 L108.0,432.0 L111.0,430.9 L114.0,429.7 L117.0,428.5 L120.0,427.3 L123.0,426.2 L126.0,425.0 L129.0,423.8 L132.0,422.6 L135.0,421.4 L138.0,420.2 L141.0,419.0 L144.0,417.8 L147.0,416.6 L150.0,415.4 L153.0,414.2 L156.0,413.0 L159.0,411.8 L162.0,410.5 L165.0,409.3 L168.0,408.0 L171.0,406.7 L174.0,405.4 L177.0,404.1 L180.0,402.8 L183.0,401.5 L186.0,400.1 L189.0,398.8 L192.0,397.4 L195.0,396.0 L198.0,394.7 L201.0,393.3 L204.0,391.9 L207.0,390.5 L210.0,389.2 L213.0,387.8 L216.0,386.4 L219.0,385.1 L222.0,383.7 L225.0,382.3 L228.0,380.9 L231.0,379.5 L234.0,378.1 L237.0,376.7 L240.0,375.3 L243.0,373.9 L246.0,372.6 L249.0,371.3 L252.0,370.0 L255.0,368.9 L258.0,367.7 L261.0,366.6 L264.0,365.5 L267.0,364.3 L270.0,363.1 L273.0,361.8 L276.0,360.5 L279.0,359.1 L282.0,357.8 L285.0,356.5 L288.0,355.2 L291.0,354.0 L294.0,352.9 L297.0,351.8 L300.0,350.5 L303.0,348.9 L306.0,347.2 L309.0,345.4 L312.0,343.6 L315.0,341.9 L318.0,340.2 L321.0,338.7 L324.0,337.4 L327.0,336.3 L330.0,335.3 L333.0,334.5 L336.0,333.8 L339.0,333.1 L342.0,332.4 L345.0,331.7 L348.0,331.0 L351.0,330.0 L354.0,328.5 L357.0,327.0 L360.0,325.6 L363.0,324.3 L366.0,323.7 L369.0,323.7 L372.0,324.2 L375.0,325.2 L378.0,326.4 L381.0,328.0 L384.0,329.9 L387.0,331.3 L390.0,332.2 L393.0,332.0 L396.0,331.3 L399.0,329.4 L402.0,327.0 L405.0,325.5 L408.0,325.1 L411.0,324.9 L414.0,324.6 L417.0,324.2 L420.0,323.8 L423.0,323.3 L426.0,322.8 L429.0,322.2 L432.0,321.6 L434.0,321.2 L434.0,323.3 L432.0,323.7 L429.0,324.3 L426.0,324.9 L423.0,325.4 L420.0,325.9 L417.0,326.3 L414.0,326.7 L411.0,327.0 L408.0,327.2 L405.0,327.6 L402.0,329.1 L399.0,331.6 L396.0,333.5 L393.0,334.1 L390.0,334.4 L387.0,333.5 L384.0,332.1 L381.0,330.2 L378.0,328.7 L375.0,327.4 L372.0,326.5 L369.0,326.0 L366.0,326.1 L363.0,326.7 L360.0,328.1 L357.0,329.5 L354.0,331.1 L351.0,332.7 L348.0,333.8 L345.0,334.6 L342.0,335.4 L339.0,336.2 L336.0,337.1 L333.0,337.9 L330.0,338.9 L327.0,340.0 L324.0,341.2 L321.0,342.6 L318.0,344.1 L315.0,345.9 L312.0,347.7 L309.0,349.6 L306.0,351.4 L303.0,353.2 L300.0,354.8 L297.0,356.1 L294.0,357.3 L291.0,358.5 L288.0,359.7 L285.0,361.1 L282.0,362.4 L279.0,363.8 L276.0,365.2 L273.0,366.6 L270.0,367.9 L267.0,369.1 L264.0,370.3 L261.0,371.5 L258.0,372.6 L255.0,373.8 L252.0,374.9 L249.0,376.2 L246.0,377.5 L243.0,378.8 L240.0,380.2 L237.0,381.5 L234.0,382.9 L231.0,384.3 L228.0,385.7 L225.0,387.1 L222.0,388.4 L219.0,389.7 L216.0,391.1 L213.0,392.4 L210.0,393.7 L207.0,395.1 L204.0,396.4 L201.0,397.7 L198.0,399.1 L195.0,400.4 L192.0,401.7 L189.0,403.0 L186.0,404.3 L183.0,405.6 L180.0,406.9 L177.0,408.2 L174.0,409.5 L171.0,410.7 L168.0,411.9 L165.0,413.2 L162.0,414.4 L159.0,415.6 L156.0,416.8 L153.0,418.0 L150.0,419.1 L147.0,420.3 L144.0,421.5 L141.0,422.6 L138.0,423.8 L135.0,424.9 L132.0,426.1 L129.0,427.3 L126.0,428.4 L123.0,429.6 L120.0,430.7 L117.0,431.9 L114.0,433.0 L111.0,434.2 L108.0,435.3 L105.0,436.5 L102.0,437.6 L99.0,438.8 L96.0,439.9 L93.0,441.1 L90.0,442.2 L87.0,443.4 L84.0,444.5Z" fill="url(#gn)" fill-opacity="1.300"/>
<path d="M84.0,454.8 L87.0,453.6 L90.0,452.4 L93.0,451.2 L96.0,450.1 L99.0,448.9 L102.0,447.7 L105.0,446.5 L108.0,445.3 L111.0,444.1 L114.0,442.9 L117.0,441.8 L120.0,440.6 L123.0,439.4 L126.0,438.2 L129.0,437.0 L132.0,435.8 L135.0,434.6 L138.0,433.4 L141.0,432.2 L144.0,431.0 L147.0,429.8 L150.0,428.6 L153.0,427.3 L156.0,426.1 L159.0,424.9 L162.0,423.6 L165.0,422.4 L168.0,421.1 L171.0,419.8 L174.0,418.5 L177.0,417.2 L180.0,415.8 L183.0,414.5 L186.0,413.1 L189.0,411.7 L192.0,410.4 L195.0,409.0 L198.0,407.6 L201.0,406.2 L204.0,404.8 L207.0,403.4 L210.0,402.0 L213.0,400.6 L216.0,399.2 L219.0,397.9 L222.0,396.5 L225.0,395.1 L228.0,393.7 L231.0,392.3 L234.0,390.9 L237.0,389.5 L240.0,388.1 L243.0,386.7 L246.0,385.4 L249.0,384.1 L252.0,382.8 L255.0,381.6 L258.0,380.4 L261.0,379.3 L264.0,378.1 L267.0,377.0 L270.0,375.7 L273.0,374.4 L276.0,373.1 L279.0,371.7 L282.0,370.4 L285.0,369.0 L288.0,367.7 L291.0,366.5 L294.0,365.3 L297.0,364.2 L300.0,362.9 L303.0,361.4 L306.0,359.7 L309.0,357.9 L312.0,356.2 L315.0,354.4 L318.0,352.8 L321.0,351.3 L324.0,350.0 L327.0,348.9 L330.0,348.0 L333.0,347.1 L336.0,346.4 L339.0,345.7 L342.0,345.0 L345.0,344.3 L348.0,343.5 L351.0,342.4 L354.0,340.9 L357.0,339.3 L360.0,337.9 L363.0,336.5 L366.0,336.0 L369.0,335.9 L372.0,336.4 L375.0,337.4 L378.0,338.6 L381.0,340.2 L384.0,342.1 L387.0,343.6 L390.0,344.5 L393.0,344.2 L396.0,343.6 L399.0,341.7 L402.0,339.3 L405.0,337.8 L408.0,337.4 L411.0,337.2 L414.0,336.9 L417.0,336.5 L420.0,336.1 L423.0,335.6 L426.0,335.1 L429.0,334.5 L432.0,333.9 L434.0,333.5 L434.0,335.6 L432.0,336.0 L429.0,336.6 L426.0,337.2 L423.0,337.7 L420.0,338.2 L417.0,338.6 L414.0,339.0 L411.0,339.3 L408.0,339.5 L405.0,339.9 L402.0,341.4 L399.0,343.9 L396.0,345.8 L393.0,346.4 L390.0,346.7 L387.0,345.8 L384.0,344.4 L381.0,342.5 L378.0,340.9 L375.0,339.6 L372.0,338.7 L369.0,338.3 L366.0,338.3 L363.0,339.0 L360.0,340.4 L357.0,341.9 L354.0,343.5 L351.0,345.2 L348.0,346.3 L345.0,347.2 L342.0,348.0 L339.0,348.8 L336.0,349.7 L333.0,350.5 L330.0,351.5 L327.0,352.6 L324.0,353.8 L321.0,355.2 L318.0,356.7 L315.0,358.5 L312.0,360.2 L309.0,362.1 L306.0,363.9 L303.0,365.7 L300.0,367.2 L297.0,368.6 L294.0,369.8 L291.0,371.0 L288.0,372.2 L285.0,373.6 L282.0,375.0 L279.0,376.4 L276.0,377.8 L273.0,379.2 L270.0,380.5 L267.0,381.8 L264.0,383.0 L261.0,384.2 L258.0,385.3 L255.0,386.5 L252.0,387.7 L249.0,389.0 L246.0,390.3 L243.0,391.6 L240.0,392.9 L237.0,394.3 L234.0,395.7 L231.0,397.1 L228.0,398.5 L225.0,399.8 L222.0,401.2 L219.0,402.5 L216.0,403.9 L213.0,405.2 L210.0,406.6 L207.0,407.9 L204.0,409.3 L201.0,410.6 L198.0,412.0 L195.0,413.3 L192.0,414.7 L189.0,416.0 L186.0,417.3 L183.0,418.6 L180.0,419.9 L177.0,421.2 L174.0,422.5 L171.0,423.8 L168.0,425.0 L165.0,426.3 L162.0,427.5 L159.0,428.7 L156.0,429.9 L153.0,431.1 L150.0,432.3 L147.0,433.4 L144.0,434.6 L141.0,435.8 L138.0,436.9 L135.0,438.1 L132.0,439.3 L129.0,440.5 L126.0,441.6 L123.0,442.8 L120.0,444.0 L117.0,445.1 L114.0,446.3 L111.0,447.5 L108.0,448.6 L105.0,449.8 L102.0,450.9 L99.0,452.1 L96.0,453.3 L93.0,454.4 L90.0,455.6 L87.0,456.8 L84.0,457.9Z" fill="url(#gn)" fill-opacity="0.850"/>
<path d="M84.0,224.6 L87.0,223.4 L90.0,222.3 L93.0,221.1 L96.0,220.0 L99.0,218.8 L102.0,217.7 L105.0,216.6 L108.0,215.4 L111.0,214.3 L114.0,213.2 L117.0,212.0 L120.0,210.9 L123.0,209.8 L126.0,208.6 L129.0,207.5 L132.0,206.4 L135.0,205.2 L138.0,204.1 L141.0,202.9 L144.0,201.8 L147.0,200.7 L150.0,199.5 L153.0,198.4 L156.0,197.2 L159.0,196.1 L162.0,194.9 L165.0,193.7 L168.0,192.5 L171.0,191.3 L174.0,190.1 L177.0,188.9 L180.0,187.7 L183.0,186.4 L186.0,185.2 L189.0,183.9 L192.0,182.7 L195.0,181.4 L198.0,180.1 L201.0,178.9 L204.0,177.6 L207.0,176.3 L210.0,175.0 L213.0,173.8 L216.0,172.5 L219.0,171.2 L222.0,170.0 L225.0,168.7 L228.0,167.4 L231.0,166.1 L234.0,164.8 L237.0,163.5 L240.0,162.2 L243.0,161.0 L246.0,159.8 L249.0,158.5 L252.0,157.4 L255.0,156.3 L258.0,155.2 L261.0,154.1 L264.0,153.0 L267.0,151.9 L270.0,150.7 L273.0,149.5 L276.0,148.2 L279.0,146.8 L282.0,145.4 L285.0,144.1 L288.0,142.7 L291.0,141.5 L294.0,140.3 L297.0,139.1 L300.0,137.8 L303.0,136.2 L306.0,134.4 L309.0,132.6 L312.0,130.7 L315.0,128.9 L318.0,127.1 L321.0,125.6 L324.0,124.2 L327.0,122.9 L330.0,121.8 L333.0,120.9 L336.0,120.0 L339.0,119.1 L342.0,118.3 L345.0,117.5 L348.0,116.6 L351.0,115.4 L354.0,113.7 L357.0,112.0 L360.0,110.4 L363.0,108.9 L366.0,108.1 L369.0,107.8 L372.0,108.0 L375.0,108.5 L378.0,109.1 L381.0,110.2 L384.0,111.7 L387.0,113.1 L390.0,114.0 L393.0,113.8 L396.0,113.1 L399.0,111.2 L402.0,108.8 L405.0,108.1 L408.0,107.9 L411.0,107.7 L414.0,107.4 L417.0,107.0 L420.0,106.6 L423.0,106.1 L426.0,105.6 L429.0,105.0 L432.0,104.4 L434.0,104.0" fill="none" stroke="url(#gf)" stroke-width="1.50" stroke-opacity="0.065" />
<path d="M84.0,224.6 L87.0,223.4 L90.0,222.3 L93.0,221.1 L96.0,220.0 L99.0,218.8 L102.0,217.7 L105.0,216.6 L108.0,215.4 L111.0,214.3 L114.0,213.2 L117.0,212.0 L120.0,210.9 L123.0,209.8 L126.0,208.6 L129.0,207.5 L132.0,206.4 L135.0,205.2 L138.0,204.1 L141.0,202.9 L144.0,201.8 L147.0,200.7 L150.0,199.5 L153.0,198.4 L156.0,197.2 L159.0,196.1 L162.0,194.9 L165.0,193.7 L168.0,192.5 L171.0,191.3 L174.0,190.1 L177.0,188.9 L180.0,187.7 L183.0,186.4 L186.0,185.2 L189.0,183.9 L192.0,182.7 L195.0,181.4 L198.0,180.1 L201.0,178.9 L204.0,177.6 L207.0,176.3 L210.0,175.0 L213.0,173.8 L216.0,172.5 L219.0,171.2 L222.0,170.0 L225.0,168.7 L228.0,167.4 L231.0,166.1 L234.0,164.8 L237.0,163.5 L240.0,162.2 L243.0,161.0 L246.0,159.8 L249.0,158.5 L252.0,157.4 L255.0,156.3 L258.0,155.2 L261.0,154.1 L264.0,153.0 L267.0,151.9 L270.0,150.7 L273.0,149.5 L276.0,148.2 L279.0,146.8 L282.0,145.4 L285.0,144.1 L288.0,142.7 L291.0,141.5 L294.0,140.3 L297.0,139.1 L300.0,137.8 L303.0,136.2 L306.0,134.4 L309.0,132.6 L312.0,130.7 L315.0,128.9 L318.0,127.1 L321.0,125.6 L324.0,124.2 L327.0,122.9 L330.0,121.8 L333.0,120.9 L336.0,120.0 L339.0,119.1 L342.0,118.3 L345.0,117.5 L348.0,116.6 L351.0,115.4 L354.0,113.7 L357.0,112.0 L360.0,110.4 L363.0,108.9 L366.0,108.1 L369.0,107.8 L372.0,108.0 L375.0,108.5 L378.0,109.1 L381.0,110.2 L384.0,111.7 L387.0,113.1 L390.0,114.0 L393.0,113.8 L396.0,113.1 L399.0,111.2 L402.0,108.8 L405.0,108.1 L408.0,107.9 L411.0,107.7 L414.0,107.4 L417.0,107.0 L420.0,106.6 L423.0,106.1 L426.0,105.6 L429.0,105.0 L432.0,104.4 L434.0,104.0" fill="none" stroke="url(#gf)" stroke-width="3.00" stroke-opacity="0.026" />
<path d="M84.0,236.7 L87.0,235.6 L90.0,234.4 L93.0,233.3 L96.0,232.1 L99.0,231.0 L102.0,229.9 L105.0,228.7 L108.0,227.6 L111.0,226.5 L114.0,225.3 L117.0,224.2 L120.0,223.1 L123.0,221.9 L126.0,220.8 L129.0,219.6 L132.0,218.5 L135.0,217.4 L138.0,216.2 L141.0,215.1 L144.0,214.0 L147.0,212.8 L150.0,211.7 L153.0,210.5 L156.0,209.4 L159.0,208.2 L162.0,207.1 L165.0,205.9 L168.0,204.7 L171.0,203.5 L174.0,202.3 L177.0,201.1 L180.0,199.8 L183.0,198.6 L186.0,197.3 L189.0,196.1 L192.0,194.8 L195.0,193.5 L198.0,192.3 L201.0,191.0 L204.0,189.7 L207.0,188.5 L210.0,187.2 L213.0,185.9 L216.0,184.6 L219.0,183.4 L222.0,182.1 L225.0,180.8 L228.0,179.5 L231.0,178.2 L234.0,177.0 L237.0,175.7 L240.0,174.4 L243.0,173.1 L246.0,171.9 L249.0,170.7 L252.0,169.5 L255.0,168.4 L258.0,167.3 L261.0,166.2 L264.0,165.2 L267.0,164.0 L270.0,162.9 L273.0,161.6 L276.0,160.3 L279.0,159.0 L282.0,157.6 L285.0,156.2 L288.0,154.9 L291.0,153.7 L294.0,152.5 L297.0,151.3 L300.0,149.9 L303.0,148.4 L306.0,146.6 L309.0,144.7 L312.0,142.8 L315.0,141.0 L318.0,139.3 L321.0,137.7 L324.0,136.3 L327.0,135.1 L330.0,134.0 L333.0,133.0 L336.0,132.1 L339.0,131.3 L342.0,130.4 L345.0,129.6 L348.0,128.7 L351.0,127.5 L354.0,125.8 L357.0,124.1 L360.0,122.5 L363.0,121.0 L366.0,120.3 L369.0,120.0 L372.0,120.2 L375.0,120.6 L378.0,121.3 L381.0,122.3 L384.0,123.9 L387.0,125.3 L390.0,126.2 L393.0,125.9 L396.0,125.2 L399.0,123.4 L402.0,121.0 L405.0,120.2 L408.0,120.1 L411.0,119.9 L414.0,119.5 L417.0,119.2 L420.0,118.8 L423.0,118.3 L426.0,117.7 L429.0,117.1 L432.0,116.5 L434.0,116.2" fill="none" stroke="url(#gf)" stroke-width="1.50" stroke-opacity="0.223" />
<path d="M84.0,236.7 L87.0,235.6 L90.0,234.4 L93.0,233.3 L96.0,232.1 L99.0,231.0 L102.0,229.9 L105.0,228.7 L108.0,227.6 L111.0,226.5 L114.0,225.3 L117.0,224.2 L120.0,223.1 L123.0,221.9 L126.0,220.8 L129.0,219.6 L132.0,218.5 L135.0,217.4 L138.0,216.2 L141.0,215.1 L144.0,214.0 L147.0,212.8 L150.0,211.7 L153.0,210.5 L156.0,209.4 L159.0,208.2 L162.0,207.1 L165.0,205.9 L168.0,204.7 L171.0,203.5 L174.0,202.3 L177.0,201.1 L180.0,199.8 L183.0,198.6 L186.0,197.3 L189.0,196.1 L192.0,194.8 L195.0,193.5 L198.0,192.3 L201.0,191.0 L204.0,189.7 L207.0,188.5 L210.0,187.2 L213.0,185.9 L216.0,184.6 L219.0,183.4 L222.0,182.1 L225.0,180.8 L228.0,179.5 L231.0,178.2 L234.0,177.0 L237.0,175.7 L240.0,174.4 L243.0,173.1 L246.0,171.9 L249.0,170.7 L252.0,169.5 L255.0,168.4 L258.0,167.3 L261.0,166.2 L264.0,165.2 L267.0,164.0 L270.0,162.9 L273.0,161.6 L276.0,160.3 L279.0,159.0 L282.0,157.6 L285.0,156.2 L288.0,154.9 L291.0,153.7 L294.0,152.5 L297.0,151.3 L300.0,149.9 L303.0,148.4 L306.0,146.6 L309.0,144.7 L312.0,142.8 L315.0,141.0 L318.0,139.3 L321.0,137.7 L324.0,136.3 L327.0,135.1 L330.0,134.0 L333.0,133.0 L336.0,132.1 L339.0,131.3 L342.0,130.4 L345.0,129.6 L348.0,128.7 L351.0,127.5 L354.0,125.8 L357.0,124.1 L360.0,122.5 L363.0,121.0 L366.0,120.3 L369.0,120.0 L372.0,120.2 L375.0,120.6 L378.0,121.3 L381.0,122.3 L384.0,123.9 L387.0,125.3 L390.0,126.2 L393.0,125.9 L396.0,125.2 L399.0,123.4 L402.0,121.0 L405.0,120.2 L408.0,120.1 L411.0,119.9 L414.0,119.5 L417.0,119.2 L420.0,118.8 L423.0,118.3 L426.0,117.7 L429.0,117.1 L432.0,116.5 L434.0,116.2" fill="none" stroke="url(#gf)" stroke-width="3.00" stroke-opacity="0.089" />
<path d="M84.0,273.2 L87.0,272.0 L90.0,270.9 L93.0,269.7 L96.0,268.6 L99.0,267.4 L102.0,266.3 L105.0,265.2 L108.0,264.0 L111.0,262.9 L114.0,261.8 L117.0,260.6 L120.0,259.5 L123.0,258.4 L126.0,257.2 L129.0,256.1 L132.0,255.0 L135.0,253.8 L138.0,252.7 L141.0,251.5 L144.0,250.4 L147.0,249.3 L150.0,248.1 L153.0,247.0 L156.0,245.8 L159.0,244.7 L162.0,243.5 L165.0,242.3 L168.0,241.1 L171.0,239.9 L174.0,238.7 L177.0,237.5 L180.0,236.3 L183.0,235.0 L186.0,233.8 L189.0,232.5 L192.0,231.3 L195.0,230.0 L198.0,228.7 L201.0,227.5 L204.0,226.2 L207.0,224.9 L210.0,223.6 L213.0,222.4 L216.0,221.1 L219.0,219.8 L222.0,218.6 L225.0,217.3 L228.0,216.0 L231.0,214.7 L234.0,213.4 L237.0,212.1 L240.0,210.8 L243.0,209.6 L246.0,208.4 L249.0,207.1 L252.0,206.0 L255.0,204.9 L258.0,203.8 L261.0,202.7 L264.0,201.6 L267.0,200.5 L270.0,199.3 L273.0,198.1 L276.0,196.8 L279.0,195.4 L282.0,194.0 L285.0,192.7 L288.0,191.3 L291.0,190.1 L294.0,188.9 L297.0,187.7 L300.0,186.4 L303.0,184.8 L306.0,183.0 L309.0,181.2 L312.0,179.3 L315.0,177.5 L318.0,175.7 L321.0,174.2 L324.0,172.8 L327.0,171.5 L330.0,170.4 L333.0,169.5 L336.0,168.6 L339.0,167.7 L342.0,166.9 L345.0,166.1 L348.0,165.2 L351.0,164.0 L354.0,162.3 L357.0,160.6 L360.0,159.0 L363.0,157.5 L366.0,156.7 L369.0,156.4 L372.0,156.6 L375.0,157.1 L378.0,157.7 L381.0,158.8 L384.0,160.3 L387.0,161.7 L390.0,162.6 L393.0,162.4 L396.0,161.7 L399.0,159.8 L402.0,157.4 L405.0,156.7 L408.0,156.5 L411.0,156.3 L414.0,156.0 L417.0,155.6 L420.0,155.2 L423.0,154.7 L426.0,154.2 L429.0,153.6 L432.0,153.0 L434.0,152.6" fill="none" stroke="url(#gf)" stroke-width="1.50" stroke-opacity="0.251" />
<path d="M84.0,273.2 L87.0,272.0 L90.0,270.9 L93.0,269.7 L96.0,268.6 L99.0,267.4 L102.0,266.3 L105.0,265.2 L108.0,264.0 L111.0,262.9 L114.0,261.8 L117.0,260.6 L120.0,259.5 L123.0,258.4 L126.0,257.2 L129.0,256.1 L132.0,255.0 L135.0,253.8 L138.0,252.7 L141.0,251.5 L144.0,250.4 L147.0,249.3 L150.0,248.1 L153.0,247.0 L156.0,245.8 L159.0,244.7 L162.0,243.5 L165.0,242.3 L168.0,241.1 L171.0,239.9 L174.0,238.7 L177.0,237.5 L180.0,236.3 L183.0,235.0 L186.0,233.8 L189.0,232.5 L192.0,231.3 L195.0,230.0 L198.0,228.7 L201.0,227.5 L204.0,226.2 L207.0,224.9 L210.0,223.6 L213.0,222.4 L216.0,221.1 L219.0,219.8 L222.0,218.6 L225.0,217.3 L228.0,216.0 L231.0,214.7 L234.0,213.4 L237.0,212.1 L240.0,210.8 L243.0,209.6 L246.0,208.4 L249.0,207.1 L252.0,206.0 L255.0,204.9 L258.0,203.8 L261.0,202.7 L264.0,201.6 L267.0,200.5 L270.0,199.3 L273.0,198.1 L276.0,196.8 L279.0,195.4 L282.0,194.0 L285.0,192.7 L288.0,191.3 L291.0,190.1 L294.0,188.9 L297.0,187.7 L300.0,186.4 L303.0,184.8 L306.0,183.0 L309.0,181.2 L312.0,179.3 L315.0,177.5 L318.0,175.7 L321.0,174.2 L324.0,172.8 L327.0,171.5 L330.0,170.4 L333.0,169.5 L336.0,168.6 L339.0,167.7 L342.0,166.9 L345.0,166.1 L348.0,165.2 L351.0,164.0 L354.0,162.3 L357.0,160.6 L360.0,159.0 L363.0,157.5 L366.0,156.7 L369.0,156.4 L372.0,156.6 L375.0,157.1 L378.0,157.7 L381.0,158.8 L384.0,160.3 L387.0,161.7 L390.0,162.6 L393.0,162.4 L396.0,161.7 L399.0,159.8 L402.0,157.4 L405.0,156.7 L408.0,156.5 L411.0,156.3 L414.0,156.0 L417.0,155.6 L420.0,155.2 L423.0,154.7 L426.0,154.2 L429.0,153.6 L432.0,153.0 L434.0,152.6" fill="none" stroke="url(#gf)" stroke-width="3.00" stroke-opacity="0.100" />
<path d="M84.0,285.3 L87.0,284.2 L90.0,283.0 L93.0,281.9 L96.0,280.7 L99.0,279.6 L102.0,278.5 L105.0,277.3 L108.0,276.2 L111.0,275.1 L114.0,273.9 L117.0,272.8 L120.0,271.7 L123.0,270.5 L126.0,269.4 L129.0,268.2 L132.0,267.1 L135.0,266.0 L138.0,264.8 L141.0,263.7 L144.0,262.6 L147.0,261.4 L150.0,260.3 L153.0,259.1 L156.0,258.0 L159.0,256.8 L162.0,255.7 L165.0,254.5 L168.0,253.3 L171.0,252.1 L174.0,250.9 L177.0,249.7 L180.0,248.4 L183.0,247.2 L186.0,245.9 L189.0,244.7 L192.0,243.4 L195.0,242.1 L198.0,240.9 L201.0,239.6 L204.0,238.3 L207.0,237.1 L210.0,235.8 L213.0,234.5 L216.0,233.2 L219.0,232.0 L222.0,230.7 L225.0,229.4 L228.0,228.1 L231.0,226.8 L234.0,225.6 L237.0,224.3 L240.0,223.0 L243.0,221.7 L246.0,220.5 L249.0,219.3 L252.0,218.1 L255.0,217.0 L258.0,215.9 L261.0,214.8 L264.0,213.8 L267.0,212.6 L270.0,211.5 L273.0,210.2 L276.0,208.9 L279.0,207.6 L282.0,206.2 L285.0,204.8 L288.0,203.5 L291.0,202.3 L294.0,201.1 L297.0,199.9 L300.0,198.6 L303.0,197.0 L306.0,195.2 L309.0,193.3 L312.0,191.4 L315.0,189.6 L318.0,187.9 L321.0,186.3 L324.0,184.9 L327.0,183.7 L330.0,182.6 L333.0,181.6 L336.0,180.7 L339.0,179.9 L342.0,179.0 L345.0,178.2 L348.0,177.3 L351.0,176.1 L354.0,174.4 L357.0,172.7 L360.0,171.1 L363.0,169.6 L366.0,168.9 L369.0,168.6 L372.0,168.8 L375.0,169.2 L378.0,169.9 L381.0,170.9 L384.0,172.5 L387.0,173.9 L390.0,174.8 L393.0,174.5 L396.0,173.8 L399.0,172.0 L402.0,169.6 L405.0,168.8 L408.0,168.7 L411.0,168.5 L414.0,168.1 L417.0,167.8 L420.0,167.4 L423.0,166.9 L426.0,166.3 L429.0,165.7 L432.0,165.1 L434.0,164.8" fill="none" stroke="url(#gf)" stroke-width="1.50" stroke-opacity="0.121" />
<path d="M84.0,285.3 L87.0,284.2 L90.0,283.0 L93.0,281.9 L96.0,280.7 L99.0,279.6 L102.0,278.5 L105.0,277.3 L108.0,276.2 L111.0,275.1 L114.0,273.9 L117.0,272.8 L120.0,271.7 L123.0,270.5 L126.0,269.4 L129.0,268.2 L132.0,267.1 L135.0,266.0 L138.0,264.8 L141.0,263.7 L144.0,262.6 L147.0,261.4 L150.0,260.3 L153.0,259.1 L156.0,258.0 L159.0,256.8 L162.0,255.7 L165.0,254.5 L168.0,253.3 L171.0,252.1 L174.0,250.9 L177.0,249.7 L180.0,248.4 L183.0,247.2 L186.0,245.9 L189.0,244.7 L192.0,243.4 L195.0,242.1 L198.0,240.9 L201.0,239.6 L204.0,238.3 L207.0,237.1 L210.0,235.8 L213.0,234.5 L216.0,233.2 L219.0,232.0 L222.0,230.7 L225.0,229.4 L228.0,228.1 L231.0,226.8 L234.0,225.6 L237.0,224.3 L240.0,223.0 L243.0,221.7 L246.0,220.5 L249.0,219.3 L252.0,218.1 L255.0,217.0 L258.0,215.9 L261.0,214.8 L264.0,213.8 L267.0,212.6 L270.0,211.5 L273.0,210.2 L276.0,208.9 L279.0,207.6 L282.0,206.2 L285.0,204.8 L288.0,203.5 L291.0,202.3 L294.0,201.1 L297.0,199.9 L300.0,198.6 L303.0,197.0 L306.0,195.2 L309.0,193.3 L312.0,191.4 L315.0,189.6 L318.0,187.9 L321.0,186.3 L324.0,184.9 L327.0,183.7 L330.0,182.6 L333.0,181.6 L336.0,180.7 L339.0,179.9 L342.0,179.0 L345.0,178.2 L348.0,177.3 L351.0,176.1 L354.0,174.4 L357.0,172.7 L360.0,171.1 L363.0,169.6 L366.0,168.9 L369.0,168.6 L372.0,168.8 L375.0,169.2 L378.0,169.9 L381.0,170.9 L384.0,172.5 L387.0,173.9 L390.0,174.8 L393.0,174.5 L396.0,173.8 L399.0,172.0 L402.0,169.6 L405.0,168.8 L408.0,168.7 L411.0,168.5 L414.0,168.1 L417.0,167.8 L420.0,167.4 L423.0,166.9 L426.0,166.3 L429.0,165.7 L432.0,165.1 L434.0,164.8" fill="none" stroke="url(#gf)" stroke-width="3.00" stroke-opacity="0.048" />
<path d="M84.0,297.5 L87.0,296.3 L90.0,295.2 L93.0,294.0 L96.0,292.9 L99.0,291.7 L102.0,290.6 L105.0,289.5 L108.0,288.3 L111.0,287.2 L114.0,286.1 L117.0,284.9 L120.0,283.8 L123.0,282.7 L126.0,281.5 L129.0,280.4 L132.0,279.3 L135.0,278.1 L138.0,277.0 L141.0,275.8 L144.0,274.7 L147.0,273.6 L150.0,272.4 L153.0,271.3 L156.0,270.1 L159.0,269.0 L162.0,267.8 L165.0,266.6 L168.0,265.4 L171.0,264.2 L174.0,263.0 L177.0,261.8 L180.0,260.6 L183.0,259.3 L186.0,258.1 L189.0,256.8 L192.0,255.6 L195.0,254.3 L198.0,253.0 L201.0,251.8 L204.0,250.5 L207.0,249.2 L210.0,247.9 L213.0,246.7 L216.0,245.4 L219.0,244.1 L222.0,242.9 L225.0,241.6 L228.0,240.3 L231.0,239.0 L234.0,237.7 L237.0,236.4 L240.0,235.1 L243.0,233.9 L246.0,232.7 L249.0,231.4 L252.0,230.3 L255.0,229.2 L258.0,228.1 L261.0,227.0 L264.0,225.9 L267.0,224.8 L270.0,223.6 L273.0,222.4 L276.0,221.1 L279.0,219.7 L282.0,218.3 L285.0,217.0 L288.0,215.6 L291.0,214.4 L294.0,213.2 L297.0,212.0 L300.0,210.7 L303.0,209.1 L306.0,207.3 L309.0,205.5 L312.0,203.6 L315.0,201.8 L318.0,200.0 L321.0,198.5 L324.0,197.1 L327.0,195.8 L330.0,194.7 L333.0,193.8 L336.0,192.9 L339.0,192.0 L342.0,191.2 L345.0,190.4 L348.0,189.5 L351.0,188.3 L354.0,186.6 L357.0,184.9 L360.0,183.3 L363.0,181.8 L366.0,181.0 L369.0,180.7 L372.0,180.9 L375.0,181.4 L378.0,182.0 L381.0,183.1 L384.0,184.6 L387.0,186.0 L390.0,186.9 L393.0,186.7 L396.0,186.0 L399.0,184.1 L402.0,181.7 L405.0,181.0 L408.0,180.8 L411.0,180.6 L414.0,180.3 L417.0,179.9 L420.0,179.5 L423.0,179.0 L426.0,178.5 L429.0,177.9 L432.0,177.3 L434.0,176.9" fill="none" stroke="url(#gf)" stroke-width="1.50" stroke-opacity="0.065" />
<path d="M84.0,297.5 L87.0,296.3 L90.0,295.2 L93.0,294.0 L96.0,292.9 L99.0,291.7 L102.0,290.6 L105.0,289.5 L108.0,288.3 L111.0,287.2 L114.0,286.1 L117.0,284.9 L120.0,283.8 L123.0,282.7 L126.0,281.5 L129.0,280.4 L132.0,279.3 L135.0,278.1 L138.0,277.0 L141.0,275.8 L144.0,274.7 L147.0,273.6 L150.0,272.4 L153.0,271.3 L156.0,270.1 L159.0,269.0 L162.0,267.8 L165.0,266.6 L168.0,265.4 L171.0,264.2 L174.0,263.0 L177.0,261.8 L180.0,260.6 L183.0,259.3 L186.0,258.1 L189.0,256.8 L192.0,255.6 L195.0,254.3 L198.0,253.0 L201.0,251.8 L204.0,250.5 L207.0,249.2 L210.0,247.9 L213.0,246.7 L216.0,245.4 L219.0,244.1 L222.0,242.9 L225.0,241.6 L228.0,240.3 L231.0,239.0 L234.0,237.7 L237.0,236.4 L240.0,235.1 L243.0,233.9 L246.0,232.7 L249.0,231.4 L252.0,230.3 L255.0,229.2 L258.0,228.1 L261.0,227.0 L264.0,225.9 L267.0,224.8 L270.0,223.6 L273.0,222.4 L276.0,221.1 L279.0,219.7 L282.0,218.3 L285.0,217.0 L288.0,215.6 L291.0,214.4 L294.0,213.2 L297.0,212.0 L300.0,210.7 L303.0,209.1 L306.0,207.3 L309.0,205.5 L312.0,203.6 L315.0,201.8 L318.0,200.0 L321.0,198.5 L324.0,197.1 L327.0,195.8 L330.0,194.7 L333.0,193.8 L336.0,192.9 L339.0,192.0 L342.0,191.2 L345.0,190.4 L348.0,189.5 L351.0,188.3 L354.0,186.6 L357.0,184.9 L360.0,183.3 L363.0,181.8 L366.0,181.0 L369.0,180.7 L372.0,180.9 L375.0,181.4 L378.0,182.0 L381.0,183.1 L384.0,184.6 L387.0,186.0 L390.0,186.9 L393.0,186.7 L396.0,186.0 L399.0,184.1 L402.0,181.7 L405.0,181.0 L408.0,180.8 L411.0,180.6 L414.0,180.3 L417.0,179.9 L420.0,179.5 L423.0,179.0 L426.0,178.5 L429.0,177.9 L432.0,177.3 L434.0,176.9" fill="none" stroke="url(#gf)" stroke-width="3.00" stroke-opacity="0.026" />
<path d="M84.0,309.6 L87.0,308.5 L90.0,307.3 L93.0,306.2 L96.0,305.0 L99.0,303.9 L102.0,302.8 L105.0,301.6 L108.0,300.5 L111.0,299.4 L114.0,298.2 L117.0,297.1 L120.0,296.0 L123.0,294.8 L126.0,293.7 L129.0,292.5 L132.0,291.4 L135.0,290.3 L138.0,289.1 L141.0,288.0 L144.0,286.9 L147.0,285.7 L150.0,284.6 L153.0,283.4 L156.0,282.3 L159.0,281.1 L162.0,280.0 L165.0,278.8 L168.0,277.6 L171.0,276.4 L174.0,275.2 L177.0,274.0 L180.0,272.7 L183.0,271.5 L186.0,270.2 L189.0,269.0 L192.0,267.7 L195.0,266.4 L198.0,265.2 L201.0,263.9 L204.0,262.6 L207.0,261.4 L210.0,260.1 L213.0,258.8 L216.0,257.5 L219.0,256.3 L222.0,255.0 L225.0,253.7 L228.0,252.4 L231.0,251.1 L234.0,249.9 L237.0,248.6 L240.0,247.3 L243.0,246.0 L246.0,244.8 L249.0,243.6 L252.0,242.4 L255.0,241.3 L258.0,240.2 L261.0,239.1 L264.0,238.1 L267.0,236.9 L270.0,235.8 L273.0,234.5 L276.0,233.2 L279.0,231.9 L282.0,230.5 L285.0,229.1 L288.0,227.8 L291.0,226.6 L294.0,225.4 L297.0,224.2 L300.0,222.8 L303.0,221.3 L306.0,219.5 L309.0,217.6 L312.0,215.7 L315.0,213.9 L318.0,212.2 L321.0,210.6 L324.0,209.2 L327.0,208.0 L330.0,206.9 L333.0,205.9 L336.0,205.0 L339.0,204.2 L342.0,203.3 L345.0,202.5 L348.0,201.6 L351.0,200.4 L354.0,198.7 L357.0,197.0 L360.0,195.4 L363.0,193.9 L366.0,193.2 L369.0,192.9 L372.0,193.1 L375.0,193.5 L378.0,194.2 L381.0,195.2 L384.0,196.8 L387.0,198.2 L390.0,199.1 L393.0,198.8 L396.0,198.1 L399.0,196.3 L402.0,193.9 L405.0,193.1 L408.0,193.0 L411.0,192.8 L414.0,192.4 L417.0,192.1 L420.0,191.7 L423.0,191.2 L426.0,190.6 L429.0,190.0 L432.0,189.4 L434.0,189.1" fill="none" stroke="url(#gf)" stroke-width="1.50" stroke-opacity="0.047" />
<path d="M84.0,309.6 L87.0,308.5 L90.0,307.3 L93.0,306.2 L96.0,305.0 L99.0,303.9 L102.0,302.8 L105.0,301.6 L108.0,300.5 L111.0,299.4 L114.0,298.2 L117.0,297.1 L120.0,296.0 L123.0,294.8 L126.0,293.7 L129.0,292.5 L132.0,291.4 L135.0,290.3 L138.0,289.1 L141.0,288.0 L144.0,286.9 L147.0,285.7 L150.0,284.6 L153.0,283.4 L156.0,282.3 L159.0,281.1 L162.0,280.0 L165.0,278.8 L168.0,277.6 L171.0,276.4 L174.0,275.2 L177.0,274.0 L180.0,272.7 L183.0,271.5 L186.0,270.2 L189.0,269.0 L192.0,267.7 L195.0,266.4 L198.0,265.2 L201.0,263.9 L204.0,262.6 L207.0,261.4 L210.0,260.1 L213.0,258.8 L216.0,257.5 L219.0,256.3 L222.0,255.0 L225.0,253.7 L228.0,252.4 L231.0,251.1 L234.0,249.9 L237.0,248.6 L240.0,247.3 L243.0,246.0 L246.0,244.8 L249.0,243.6 L252.0,242.4 L255.0,241.3 L258.0,240.2 L261.0,239.1 L264.0,238.1 L267.0,236.9 L270.0,235.8 L273.0,234.5 L276.0,233.2 L279.0,231.9 L282.0,230.5 L285.0,229.1 L288.0,227.8 L291.0,226.6 L294.0,225.4 L297.0,224.2 L300.0,222.8 L303.0,221.3 L306.0,219.5 L309.0,217.6 L312.0,215.7 L315.0,213.9 L318.0,212.2 L321.0,210.6 L324.0,209.2 L327.0,208.0 L330.0,206.9 L333.0,205.9 L336.0,205.0 L339.0,204.2 L342.0,203.3 L345.0,202.5 L348.0,201.6 L351.0,200.4 L354.0,198.7 L357.0,197.0 L360.0,195.4 L363.0,193.9 L366.0,193.2 L369.0,192.9 L372.0,193.1 L375.0,193.5 L378.0,194.2 L381.0,195.2 L384.0,196.8 L387.0,198.2 L390.0,199.1 L393.0,198.8 L396.0,198.1 L399.0,196.3 L402.0,193.9 L405.0,193.1 L408.0,193.0 L411.0,192.8 L414.0,192.4 L417.0,192.1 L420.0,191.7 L423.0,191.2 L426.0,190.6 L429.0,190.0 L432.0,189.4 L434.0,189.1" fill="none" stroke="url(#gf)" stroke-width="3.00" stroke-opacity="0.018" />
<path d="M84.0,321.8 L87.0,320.6 L90.0,319.5 L93.0,318.3 L96.0,317.2 L99.0,316.0 L102.0,314.9 L105.0,313.8 L108.0,312.6 L111.0,311.5 L114.0,310.4 L117.0,309.2 L120.0,308.1 L123.0,307.0 L126.0,305.8 L129.0,304.7 L132.0,303.6 L135.0,302.4 L138.0,301.3 L141.0,300.1 L144.0,299.0 L147.0,297.9 L150.0,296.7 L153.0,295.6 L156.0,294.4 L159.0,293.3 L162.0,292.1 L165.0,290.9 L168.0,289.7 L171.0,288.5 L174.0,287.3 L177.0,286.1 L180.0,284.9 L183.0,283.6 L186.0,282.4 L189.0,281.1 L192.0,279.9 L195.0,278.6 L198.0,277.3 L201.0,276.1 L204.0,274.8 L207.0,273.5 L210.0,272.2 L213.0,271.0 L216.0,269.7 L219.0,268.4 L222.0,267.2 L225.0,265.9 L228.0,264.6 L231.0,263.3 L234.0,262.0 L237.0,260.7 L240.0,259.4 L243.0,258.2 L246.0,257.0 L249.0,255.7 L252.0,254.6 L255.0,253.5 L258.0,252.4 L261.0,251.3 L264.0,250.2 L267.0,249.1 L270.0,247.9 L273.0,246.7 L276.0,245.4 L279.0,244.0 L282.0,242.6 L285.0,241.3 L288.0,239.9 L291.0,238.7 L294.0,237.5 L297.0,236.3 L300.0,235.0 L303.0,233.4 L306.0,231.6 L309.0,229.8 L312.0,227.9 L315.0,226.1 L318.0,224.3 L321.0,222.8 L324.0,221.4 L327.0,220.1 L330.0,219.0 L333.0,218.1 L336.0,217.2 L339.0,216.3 L342.0,215.5 L345.0,214.7 L348.0,213.8 L351.0,212.6 L354.0,210.9 L357.0,209.2 L360.0,207.6 L363.0,206.1 L366.0,205.3 L369.0,205.0 L372.0,205.2 L375.0,205.7 L378.0,206.3 L381.0,207.4 L384.0,208.9 L387.0,210.3 L390.0,211.2 L393.0,211.0 L396.0,210.3 L399.0,208.4 L402.0,206.0 L405.0,205.3 L408.0,205.1 L411.0,204.9 L414.0,204.6 L417.0,204.2 L420.0,203.8 L423.0,203.3 L426.0,202.8 L429.0,202.2 L432.0,201.6 L434.0,201.2" fill="none" stroke="url(#gf)" stroke-width="1.50" stroke-opacity="0.037" />
<path d="M84.0,321.8 L87.0,320.6 L90.0,319.5 L93.0,318.3 L96.0,317.2 L99.0,316.0 L102.0,314.9 L105.0,313.8 L108.0,312.6 L111.0,311.5 L114.0,310.4 L117.0,309.2 L120.0,308.1 L123.0,307.0 L126.0,305.8 L129.0,304.7 L132.0,303.6 L135.0,302.4 L138.0,301.3 L141.0,300.1 L144.0,299.0 L147.0,297.9 L150.0,296.7 L153.0,295.6 L156.0,294.4 L159.0,293.3 L162.0,292.1 L165.0,290.9 L168.0,289.7 L171.0,288.5 L174.0,287.3 L177.0,286.1 L180.0,284.9 L183.0,283.6 L186.0,282.4 L189.0,281.1 L192.0,279.9 L195.0,278.6 L198.0,277.3 L201.0,276.1 L204.0,274.8 L207.0,273.5 L210.0,272.2 L213.0,271.0 L216.0,269.7 L219.0,268.4 L222.0,267.2 L225.0,265.9 L228.0,264.6 L231.0,263.3 L234.0,262.0 L237.0,260.7 L240.0,259.4 L243.0,258.2 L246.0,257.0 L249.0,255.7 L252.0,254.6 L255.0,253.5 L258.0,252.4 L261.0,251.3 L264.0,250.2 L267.0,249.1 L270.0,247.9 L273.0,246.7 L276.0,245.4 L279.0,244.0 L282.0,242.6 L285.0,241.3 L288.0,239.9 L291.0,238.7 L294.0,237.5 L297.0,236.3 L300.0,235.0 L303.0,233.4 L306.0,231.6 L309.0,229.8 L312.0,227.9 L315.0,226.1 L318.0,224.3 L321.0,222.8 L324.0,221.4 L327.0,220.1 L330.0,219.0 L333.0,218.1 L336.0,217.2 L339.0,216.3 L342.0,215.5 L345.0,214.7 L348.0,213.8 L351.0,212.6 L354.0,210.9 L357.0,209.2 L360.0,207.6 L363.0,206.1 L366.0,205.3 L369.0,205.0 L372.0,205.2 L375.0,205.7 L378.0,206.3 L381.0,207.4 L384.0,208.9 L387.0,210.3 L390.0,211.2 L393.0,211.0 L396.0,210.3 L399.0,208.4 L402.0,206.0 L405.0,205.3 L408.0,205.1 L411.0,204.9 L414.0,204.6 L417.0,204.2 L420.0,203.8 L423.0,203.3 L426.0,202.8 L429.0,202.2 L432.0,201.6 L434.0,201.2" fill="none" stroke="url(#gf)" stroke-width="3.00" stroke-opacity="0.015" />
<path d="M84.0,333.9 L87.0,332.8 L90.0,331.6 L93.0,330.5 L96.0,329.3 L99.0,328.2 L102.0,327.1 L105.0,325.9 L108.0,324.8 L111.0,323.7 L114.0,322.5 L117.0,321.4 L120.0,320.3 L123.0,319.1 L126.0,318.0 L129.0,316.8 L132.0,315.7 L135.0,314.6 L138.0,313.4 L141.0,312.3 L144.0,311.2 L147.0,310.0 L150.0,308.9 L153.0,307.7 L156.0,306.6 L159.0,305.4 L162.0,304.3 L165.0,303.1 L168.0,301.9 L171.0,300.7 L174.0,299.5 L177.0,298.3 L180.0,297.0 L183.0,295.8 L186.0,294.5 L189.0,293.3 L192.0,292.0 L195.0,290.7 L198.0,289.5 L201.0,288.2 L204.0,286.9 L207.0,285.7 L210.0,284.4 L213.0,283.1 L216.0,281.8 L219.0,280.6 L222.0,279.3 L225.0,278.0 L228.0,276.7 L231.0,275.4 L234.0,274.2 L237.0,272.9 L240.0,271.6 L243.0,270.3 L246.0,269.1 L249.0,267.9 L252.0,266.7 L255.0,265.6 L258.0,264.5 L261.0,263.4 L264.0,262.4 L267.0,261.2 L270.0,260.1 L273.0,258.8 L276.0,257.5 L279.0,256.2 L282.0,254.8 L285.0,253.4 L288.0,252.1 L291.0,250.9 L294.0,249.7 L297.0,248.5 L300.0,247.1 L303.0,245.6 L306.0,243.8 L309.0,241.9 L312.0,240.0 L315.0,238.2 L318.0,236.5 L321.0,234.9 L324.0,233.5 L327.0,232.3 L330.0,231.2 L333.0,230.2 L336.0,229.3 L339.0,228.5 L342.0,227.6 L345.0,226.8 L348.0,225.9 L351.0,224.7 L354.0,223.0 L357.0,221.3 L360.0,219.7 L363.0,218.2 L366.0,217.5 L369.0,217.2 L372.0,217.4 L375.0,217.8 L378.0,218.5 L381.0,219.5 L384.0,221.1 L387.0,222.5 L390.0,223.4 L393.0,223.1 L396.0,222.4 L399.0,220.6 L402.0,218.2 L405.0,217.4 L408.0,217.3 L411.0,217.1 L414.0,216.7 L417.0,216.4 L420.0,215.9 L423.0,215.5 L426.0,214.9 L429.0,214.3 L432.0,213.7 L434.0,213.4" fill="none" stroke="url(#gf)" stroke-width="1.50" stroke-opacity="0.028" />
<path d="M84.0,333.9 L87.0,332.8 L90.0,331.6 L93.0,330.5 L96.0,329.3 L99.0,328.2 L102.0,327.1 L105.0,325.9 L108.0,324.8 L111.0,323.7 L114.0,322.5 L117.0,321.4 L120.0,320.3 L123.0,319.1 L126.0,318.0 L129.0,316.8 L132.0,315.7 L135.0,314.6 L138.0,313.4 L141.0,312.3 L144.0,311.2 L147.0,310.0 L150.0,308.9 L153.0,307.7 L156.0,306.6 L159.0,305.4 L162.0,304.3 L165.0,303.1 L168.0,301.9 L171.0,300.7 L174.0,299.5 L177.0,298.3 L180.0,297.0 L183.0,295.8 L186.0,294.5 L189.0,293.3 L192.0,292.0 L195.0,290.7 L198.0,289.5 L201.0,288.2 L204.0,286.9 L207.0,285.7 L210.0,284.4 L213.0,283.1 L216.0,281.8 L219.0,280.6 L222.0,279.3 L225.0,278.0 L228.0,276.7 L231.0,275.4 L234.0,274.2 L237.0,272.9 L240.0,271.6 L243.0,270.3 L246.0,269.1 L249.0,267.9 L252.0,266.7 L255.0,265.6 L258.0,264.5 L261.0,263.4 L264.0,262.4 L267.0,261.2 L270.0,260.1 L273.0,258.8 L276.0,257.5 L279.0,256.2 L282.0,254.8 L285.0,253.4 L288.0,252.1 L291.0,250.9 L294.0,249.7 L297.0,248.5 L300.0,247.1 L303.0,245.6 L306.0,243.8 L309.0,241.9 L312.0,240.0 L315.0,238.2 L318.0,236.5 L321.0,234.9 L324.0,233.5 L327.0,232.3 L330.0,231.2 L333.0,230.2 L336.0,229.3 L339.0,228.5 L342.0,227.6 L345.0,226.8 L348.0,225.9 L351.0,224.7 L354.0,223.0 L357.0,221.3 L360.0,219.7 L363.0,218.2 L366.0,217.5 L369.0,217.2 L372.0,217.4 L375.0,217.8 L378.0,218.5 L381.0,219.5 L384.0,221.1 L387.0,222.5 L390.0,223.4 L393.0,223.1 L396.0,222.4 L399.0,220.6 L402.0,218.2 L405.0,217.4 L408.0,217.3 L411.0,217.1 L414.0,216.7 L417.0,216.4 L420.0,215.9 L423.0,215.5 L426.0,214.9 L429.0,214.3 L432.0,213.7 L434.0,213.4" fill="none" stroke="url(#gf)" stroke-width="3.00" stroke-opacity="0.011" />
<path d="M84.0,432.4 L87.0,431.3 L90.0,430.1 L93.0,429.0 L96.0,427.8 L99.0,426.7 L102.0,425.6 L105.0,424.4 L108.0,423.3 L111.0,422.2 L114.0,421.0 L117.0,419.9 L120.0,418.8 L123.0,417.6 L126.0,416.5 L129.0,415.3 L132.0,414.2 L135.0,413.1 L138.0,411.9 L141.0,410.8 L144.0,409.7 L147.0,408.5 L150.0,407.4 L153.0,406.2 L156.0,405.1 L159.0,403.9 L162.0,402.8 L165.0,401.6 L168.0,400.4 L171.0,399.2 L174.0,398.0 L177.0,396.8 L180.0,395.5 L183.0,394.3 L186.0,393.0 L189.0,391.8 L192.0,390.5 L195.0,389.2 L198.0,388.0 L201.0,386.7 L204.0,385.4 L207.0,384.2 L210.0,382.9 L213.0,381.6 L216.0,380.3 L219.0,379.1 L222.0,377.8 L225.0,376.5 L228.0,375.2 L231.0,373.9 L234.0,372.7 L237.0,371.4 L240.0,370.1 L243.0,368.8 L246.0,367.6 L249.0,366.4 L252.0,365.2 L255.0,364.1 L258.0,363.0 L261.0,361.9 L264.0,360.9 L267.0,359.7 L270.0,358.6 L273.0,357.3 L276.0,356.0 L279.0,354.7 L282.0,353.3 L285.0,351.9 L288.0,350.6 L291.0,349.4 L294.0,348.2 L297.0,347.0 L300.0,345.6 L303.0,344.1 L306.0,342.3 L309.0,340.4 L312.0,338.5 L315.0,336.7 L318.0,335.0 L321.0,333.4 L324.0,332.0 L327.0,330.8 L330.0,329.7 L333.0,328.7 L336.0,327.8 L339.0,327.0 L342.0,326.1 L345.0,325.3 L348.0,324.4 L351.0,323.2 L354.0,321.5 L357.0,319.8 L360.0,318.2 L363.0,316.7 L366.0,316.0 L369.0,315.7 L372.0,315.9 L375.0,316.3 L378.0,317.0 L381.0,318.0 L384.0,319.6 L387.0,321.0 L390.0,321.9 L393.0,321.6 L396.0,320.9 L399.0,319.1 L402.0,316.7 L405.0,315.9 L408.0,315.8 L411.0,315.6 L414.0,315.2 L417.0,314.9 L420.0,314.4 L423.0,314.0 L426.0,313.4 L429.0,312.8 L432.0,312.2 L434.0,311.9" fill="none" stroke="url(#gf)" stroke-width="1.50" stroke-opacity="0.242" />
<path d="M84.0,432.4 L87.0,431.3 L90.0,430.1 L93.0,429.0 L96.0,427.8 L99.0,426.7 L102.0,425.6 L105.0,424.4 L108.0,423.3 L111.0,422.2 L114.0,421.0 L117.0,419.9 L120.0,418.8 L123.0,417.6 L126.0,416.5 L129.0,415.3 L132.0,414.2 L135.0,413.1 L138.0,411.9 L141.0,410.8 L144.0,409.7 L147.0,408.5 L150.0,407.4 L153.0,406.2 L156.0,405.1 L159.0,403.9 L162.0,402.8 L165.0,401.6 L168.0,400.4 L171.0,399.2 L174.0,398.0 L177.0,396.8 L180.0,395.5 L183.0,394.3 L186.0,393.0 L189.0,391.8 L192.0,390.5 L195.0,389.2 L198.0,388.0 L201.0,386.7 L204.0,385.4 L207.0,384.2 L210.0,382.9 L213.0,381.6 L216.0,380.3 L219.0,379.1 L222.0,377.8 L225.0,376.5 L228.0,375.2 L231.0,373.9 L234.0,372.7 L237.0,371.4 L240.0,370.1 L243.0,368.8 L246.0,367.6 L249.0,366.4 L252.0,365.2 L255.0,364.1 L258.0,363.0 L261.0,361.9 L264.0,360.9 L267.0,359.7 L270.0,358.6 L273.0,357.3 L276.0,356.0 L279.0,354.7 L282.0,353.3 L285.0,351.9 L288.0,350.6 L291.0,349.4 L294.0,348.2 L297.0,347.0 L300.0,345.6 L303.0,344.1 L306.0,342.3 L309.0,340.4 L312.0,338.5 L315.0,336.7 L318.0,335.0 L321.0,333.4 L324.0,332.0 L327.0,330.8 L330.0,329.7 L333.0,328.7 L336.0,327.8 L339.0,327.0 L342.0,326.1 L345.0,325.3 L348.0,324.4 L351.0,323.2 L354.0,321.5 L357.0,319.8 L360.0,318.2 L363.0,316.7 L366.0,316.0 L369.0,315.7 L372.0,315.9 L375.0,316.3 L378.0,317.0 L381.0,318.0 L384.0,319.6 L387.0,321.0 L390.0,321.9 L393.0,321.6 L396.0,320.9 L399.0,319.1 L402.0,316.7 L405.0,315.9 L408.0,315.8 L411.0,315.6 L414.0,315.2 L417.0,314.9 L420.0,314.4 L423.0,314.0 L426.0,313.4 L429.0,312.8 L432.0,312.2 L434.0,311.9" fill="none" stroke="url(#gf)" stroke-width="3.00" stroke-opacity="0.096" />
<path d="M84.0,420.3 L87.0,419.1 L90.0,418.0 L93.0,416.8 L96.0,415.7 L99.0,414.5 L102.0,413.4 L105.0,412.3 L108.0,411.1 L111.0,410.0 L114.0,408.9 L117.0,407.7 L120.0,406.6 L123.0,405.5 L126.0,404.3 L129.0,403.2 L132.0,402.1 L135.0,400.9 L138.0,399.8 L141.0,398.6 L144.0,397.5 L147.0,396.4 L150.0,395.2 L153.0,394.1 L156.0,392.9 L159.0,391.8 L162.0,390.6 L165.0,389.4 L168.0,388.2 L171.0,387.0 L174.0,385.8 L177.0,384.6 L180.0,383.4 L183.0,382.1 L186.0,380.9 L189.0,379.6 L192.0,378.4 L195.0,377.1 L198.0,375.8 L201.0,374.6 L204.0,373.3 L207.0,372.0 L210.0,370.7 L213.0,369.5 L216.0,368.2 L219.0,366.9 L222.0,365.7 L225.0,364.4 L228.0,363.1 L231.0,361.8 L234.0,360.5 L237.0,359.2 L240.0,357.9 L243.0,356.7 L246.0,355.5 L249.0,354.2 L252.0,353.1 L255.0,352.0 L258.0,350.9 L261.0,349.8 L264.0,348.7 L267.0,347.6 L270.0,346.4 L273.0,345.2 L276.0,343.9 L279.0,342.5 L282.0,341.1 L285.0,339.8 L288.0,338.4 L291.0,337.2 L294.0,336.0 L297.0,334.8 L300.0,333.5 L303.0,331.9 L306.0,330.1 L309.0,328.3 L312.0,326.4 L315.0,324.6 L318.0,322.8 L321.0,321.3 L324.0,319.9 L327.0,318.6 L330.0,317.5 L333.0,316.6 L336.0,315.7 L339.0,314.8 L342.0,314.0 L345.0,313.2 L348.0,312.3 L351.0,311.1 L354.0,309.4 L357.0,307.7 L360.0,306.1 L363.0,304.6 L366.0,303.8 L369.0,303.5 L372.0,303.7 L375.0,304.2 L378.0,304.8 L381.0,305.9 L384.0,307.4 L387.0,308.8 L390.0,309.7 L393.0,309.5 L396.0,308.8 L399.0,306.9 L402.0,304.5 L405.0,303.8 L408.0,303.6 L411.0,303.4 L414.0,303.1 L417.0,302.7 L420.0,302.3 L423.0,301.8 L426.0,301.3 L429.0,300.7 L432.0,300.1 L434.0,299.7" fill="none" stroke="url(#gf)" stroke-width="1.50" stroke-opacity="0.140" />
<path d="M84.0,420.3 L87.0,419.1 L90.0,418.0 L93.0,416.8 L96.0,415.7 L99.0,414.5 L102.0,413.4 L105.0,412.3 L108.0,411.1 L111.0,410.0 L114.0,408.9 L117.0,407.7 L120.0,406.6 L123.0,405.5 L126.0,404.3 L129.0,403.2 L132.0,402.1 L135.0,400.9 L138.0,399.8 L141.0,398.6 L144.0,397.5 L147.0,396.4 L150.0,395.2 L153.0,394.1 L156.0,392.9 L159.0,391.8 L162.0,390.6 L165.0,389.4 L168.0,388.2 L171.0,387.0 L174.0,385.8 L177.0,384.6 L180.0,383.4 L183.0,382.1 L186.0,380.9 L189.0,379.6 L192.0,378.4 L195.0,377.1 L198.0,375.8 L201.0,374.6 L204.0,373.3 L207.0,372.0 L210.0,370.7 L213.0,369.5 L216.0,368.2 L219.0,366.9 L222.0,365.7 L225.0,364.4 L228.0,363.1 L231.0,361.8 L234.0,360.5 L237.0,359.2 L240.0,357.9 L243.0,356.7 L246.0,355.5 L249.0,354.2 L252.0,353.1 L255.0,352.0 L258.0,350.9 L261.0,349.8 L264.0,348.7 L267.0,347.6 L270.0,346.4 L273.0,345.2 L276.0,343.9 L279.0,342.5 L282.0,341.1 L285.0,339.8 L288.0,338.4 L291.0,337.2 L294.0,336.0 L297.0,334.8 L300.0,333.5 L303.0,331.9 L306.0,330.1 L309.0,328.3 L312.0,326.4 L315.0,324.6 L318.0,322.8 L321.0,321.3 L324.0,319.9 L327.0,318.6 L330.0,317.5 L333.0,316.6 L336.0,315.7 L339.0,314.8 L342.0,314.0 L345.0,313.2 L348.0,312.3 L351.0,311.1 L354.0,309.4 L357.0,307.7 L360.0,306.1 L363.0,304.6 L366.0,303.8 L369.0,303.5 L372.0,303.7 L375.0,304.2 L378.0,304.8 L381.0,305.9 L384.0,307.4 L387.0,308.8 L390.0,309.7 L393.0,309.5 L396.0,308.8 L399.0,306.9 L402.0,304.5 L405.0,303.8 L408.0,303.6 L411.0,303.4 L414.0,303.1 L417.0,302.7 L420.0,302.3 L423.0,301.8 L426.0,301.3 L429.0,300.7 L432.0,300.1 L434.0,299.7" fill="none" stroke="url(#gf)" stroke-width="3.00" stroke-opacity="0.056" />
<path d="M84.0,408.1 L87.0,407.0 L90.0,405.8 L93.0,404.7 L96.0,403.5 L99.0,402.4 L102.0,401.3 L105.0,400.1 L108.0,399.0 L111.0,397.9 L114.0,396.7 L117.0,395.6 L120.0,394.5 L123.0,393.3 L126.0,392.2 L129.0,391.0 L132.0,389.9 L135.0,388.8 L138.0,387.6 L141.0,386.5 L144.0,385.4 L147.0,384.2 L150.0,383.1 L153.0,381.9 L156.0,380.8 L159.0,379.6 L162.0,378.5 L165.0,377.3 L168.0,376.1 L171.0,374.9 L174.0,373.7 L177.0,372.5 L180.0,371.2 L183.0,370.0 L186.0,368.7 L189.0,367.5 L192.0,366.2 L195.0,364.9 L198.0,363.7 L201.0,362.4 L204.0,361.1 L207.0,359.9 L210.0,358.6 L213.0,357.3 L216.0,356.0 L219.0,354.8 L222.0,353.5 L225.0,352.2 L228.0,350.9 L231.0,349.6 L234.0,348.4 L237.0,347.1 L240.0,345.8 L243.0,344.5 L246.0,343.3 L249.0,342.1 L252.0,340.9 L255.0,339.8 L258.0,338.7 L261.0,337.6 L264.0,336.6 L267.0,335.4 L270.0,334.3 L273.0,333.0 L276.0,331.7 L279.0,330.4 L282.0,329.0 L285.0,327.6 L288.0,326.3 L291.0,325.1 L294.0,323.9 L297.0,322.7 L300.0,321.4 L303.0,319.8 L306.0,318.0 L309.0,316.1 L312.0,314.2 L315.0,312.4 L318.0,310.7 L321.0,309.1 L324.0,307.7 L327.0,306.5 L330.0,305.4 L333.0,304.4 L336.0,303.5 L339.0,302.7 L342.0,301.8 L345.0,301.0 L348.0,300.1 L351.0,298.9 L354.0,297.2 L357.0,295.5 L360.0,293.9 L363.0,292.4 L366.0,291.7 L369.0,291.4 L372.0,291.6 L375.0,292.0 L378.0,292.7 L381.0,293.7 L384.0,295.3 L387.0,296.7 L390.0,297.6 L393.0,297.3 L396.0,296.6 L399.0,294.8 L402.0,292.4 L405.0,291.6 L408.0,291.5 L411.0,291.3 L414.0,290.9 L417.0,290.6 L420.0,290.1 L423.0,289.7 L426.0,289.1 L429.0,288.5 L432.0,287.9 L434.0,287.6" fill="none" stroke="url(#gf)" stroke-width="1.50" stroke-opacity="0.093" />
<path d="M84.0,408.1 L87.0,407.0 L90.0,405.8 L93.0,404.7 L96.0,403.5 L99.0,402.4 L102.0,401.3 L105.0,400.1 L108.0,399.0 L111.0,397.9 L114.0,396.7 L117.0,395.6 L120.0,394.5 L123.0,393.3 L126.0,392.2 L129.0,391.0 L132.0,389.9 L135.0,388.8 L138.0,387.6 L141.0,386.5 L144.0,385.4 L147.0,384.2 L150.0,383.1 L153.0,381.9 L156.0,380.8 L159.0,379.6 L162.0,378.5 L165.0,377.3 L168.0,376.1 L171.0,374.9 L174.0,373.7 L177.0,372.5 L180.0,371.2 L183.0,370.0 L186.0,368.7 L189.0,367.5 L192.0,366.2 L195.0,364.9 L198.0,363.7 L201.0,362.4 L204.0,361.1 L207.0,359.9 L210.0,358.6 L213.0,357.3 L216.0,356.0 L219.0,354.8 L222.0,353.5 L225.0,352.2 L228.0,350.9 L231.0,349.6 L234.0,348.4 L237.0,347.1 L240.0,345.8 L243.0,344.5 L246.0,343.3 L249.0,342.1 L252.0,340.9 L255.0,339.8 L258.0,338.7 L261.0,337.6 L264.0,336.6 L267.0,335.4 L270.0,334.3 L273.0,333.0 L276.0,331.7 L279.0,330.4 L282.0,329.0 L285.0,327.6 L288.0,326.3 L291.0,325.1 L294.0,323.9 L297.0,322.7 L300.0,321.4 L303.0,319.8 L306.0,318.0 L309.0,316.1 L312.0,314.2 L315.0,312.4 L318.0,310.7 L321.0,309.1 L324.0,307.7 L327.0,306.5 L330.0,305.4 L333.0,304.4 L336.0,303.5 L339.0,302.7 L342.0,301.8 L345.0,301.0 L348.0,300.1 L351.0,298.9 L354.0,297.2 L357.0,295.5 L360.0,293.9 L363.0,292.4 L366.0,291.7 L369.0,291.4 L372.0,291.6 L375.0,292.0 L378.0,292.7 L381.0,293.7 L384.0,295.3 L387.0,296.7 L390.0,297.6 L393.0,297.3 L396.0,296.6 L399.0,294.8 L402.0,292.4 L405.0,291.6 L408.0,291.5 L411.0,291.3 L414.0,290.9 L417.0,290.6 L420.0,290.1 L423.0,289.7 L426.0,289.1 L429.0,288.5 L432.0,287.9 L434.0,287.6" fill="none" stroke="url(#gf)" stroke-width="3.00" stroke-opacity="0.037" />
<path d="M84.0,396.0 L87.0,394.8 L90.0,393.7 L93.0,392.5 L96.0,391.4 L99.0,390.2 L102.0,389.1 L105.0,388.0 L108.0,386.8 L111.0,385.7 L114.0,384.6 L117.0,383.4 L120.0,382.3 L123.0,381.2 L126.0,380.0 L129.0,378.9 L132.0,377.8 L135.0,376.6 L138.0,375.5 L141.0,374.3 L144.0,373.2 L147.0,372.1 L150.0,370.9 L153.0,369.8 L156.0,368.6 L159.0,367.5 L162.0,366.3 L165.0,365.1 L168.0,363.9 L171.0,362.7 L174.0,361.5 L177.0,360.3 L180.0,359.1 L183.0,357.8 L186.0,356.6 L189.0,355.3 L192.0,354.1 L195.0,352.8 L198.0,351.5 L201.0,350.3 L204.0,349.0 L207.0,347.7 L210.0,346.4 L213.0,345.2 L216.0,343.9 L219.0,342.6 L222.0,341.4 L225.0,340.1 L228.0,338.8 L231.0,337.5 L234.0,336.2 L237.0,334.9 L240.0,333.6 L243.0,332.4 L246.0,331.2 L249.0,329.9 L252.0,328.8 L255.0,327.7 L258.0,326.6 L261.0,325.5 L264.0,324.4 L267.0,323.3 L270.0,322.1 L273.0,320.9 L276.0,319.6 L279.0,318.2 L282.0,316.8 L285.0,315.5 L288.0,314.1 L291.0,312.9 L294.0,311.7 L297.0,310.5 L300.0,309.2 L303.0,307.6 L306.0,305.8 L309.0,304.0 L312.0,302.1 L315.0,300.3 L318.0,298.5 L321.0,297.0 L324.0,295.6 L327.0,294.3 L330.0,293.2 L333.0,292.3 L336.0,291.4 L339.0,290.5 L342.0,289.7 L345.0,288.9 L348.0,288.0 L351.0,286.8 L354.0,285.1 L357.0,283.4 L360.0,281.8 L363.0,280.3 L366.0,279.5 L369.0,279.2 L372.0,279.4 L375.0,279.9 L378.0,280.5 L381.0,281.6 L384.0,283.1 L387.0,284.5 L390.0,285.4 L393.0,285.2 L396.0,284.5 L399.0,282.6 L402.0,280.2 L405.0,279.5 L408.0,279.3 L411.0,279.1 L414.0,278.8 L417.0,278.4 L420.0,278.0 L423.0,277.5 L426.0,277.0 L429.0,276.4 L432.0,275.8 L434.0,275.4" fill="none" stroke="url(#gf)" stroke-width="1.50" stroke-opacity="0.065" />
<path d="M84.0,396.0 L87.0,394.8 L90.0,393.7 L93.0,392.5 L96.0,391.4 L99.0,390.2 L102.0,389.1 L105.0,388.0 L108.0,386.8 L111.0,385.7 L114.0,384.6 L117.0,383.4 L120.0,382.3 L123.0,381.2 L126.0,380.0 L129.0,378.9 L132.0,377.8 L135.0,376.6 L138.0,375.5 L141.0,374.3 L144.0,373.2 L147.0,372.1 L150.0,370.9 L153.0,369.8 L156.0,368.6 L159.0,367.5 L162.0,366.3 L165.0,365.1 L168.0,363.9 L171.0,362.7 L174.0,361.5 L177.0,360.3 L180.0,359.1 L183.0,357.8 L186.0,356.6 L189.0,355.3 L192.0,354.1 L195.0,352.8 L198.0,351.5 L201.0,350.3 L204.0,349.0 L207.0,347.7 L210.0,346.4 L213.0,345.2 L216.0,343.9 L219.0,342.6 L222.0,341.4 L225.0,340.1 L228.0,338.8 L231.0,337.5 L234.0,336.2 L237.0,334.9 L240.0,333.6 L243.0,332.4 L246.0,331.2 L249.0,329.9 L252.0,328.8 L255.0,327.7 L258.0,326.6 L261.0,325.5 L264.0,324.4 L267.0,323.3 L270.0,322.1 L273.0,320.9 L276.0,319.6 L279.0,318.2 L282.0,316.8 L285.0,315.5 L288.0,314.1 L291.0,312.9 L294.0,311.7 L297.0,310.5 L300.0,309.2 L303.0,307.6 L306.0,305.8 L309.0,304.0 L312.0,302.1 L315.0,300.3 L318.0,298.5 L321.0,297.0 L324.0,295.6 L327.0,294.3 L330.0,293.2 L333.0,292.3 L336.0,291.4 L339.0,290.5 L342.0,289.7 L345.0,288.9 L348.0,288.0 L351.0,286.8 L354.0,285.1 L357.0,283.4 L360.0,281.8 L363.0,280.3 L366.0,279.5 L369.0,279.2 L372.0,279.4 L375.0,279.9 L378.0,280.5 L381.0,281.6 L384.0,283.1 L387.0,284.5 L390.0,285.4 L393.0,285.2 L396.0,284.5 L399.0,282.6 L402.0,280.2 L405.0,279.5 L408.0,279.3 L411.0,279.1 L414.0,278.8 L417.0,278.4 L420.0,278.0 L423.0,277.5 L426.0,277.0 L429.0,276.4 L432.0,275.8 L434.0,275.4" fill="none" stroke="url(#gf)" stroke-width="3.00" stroke-opacity="0.026" />
<path d="M84.0,383.8 L87.0,382.7 L90.0,381.5 L93.0,380.4 L96.0,379.2 L99.0,378.1 L102.0,377.0 L105.0,375.8 L108.0,374.7 L111.0,373.6 L114.0,372.4 L117.0,371.3 L120.0,370.2 L123.0,369.0 L126.0,367.9 L129.0,366.7 L132.0,365.6 L135.0,364.5 L138.0,363.3 L141.0,362.2 L144.0,361.1 L147.0,359.9 L150.0,358.8 L153.0,357.6 L156.0,356.5 L159.0,355.3 L162.0,354.2 L165.0,353.0 L168.0,351.8 L171.0,350.6 L174.0,349.4 L177.0,348.2 L180.0,346.9 L183.0,345.7 L186.0,344.4 L189.0,343.2 L192.0,341.9 L195.0,340.6 L198.0,339.4 L201.0,338.1 L204.0,336.8 L207.0,335.6 L210.0,334.3 L213.0,333.0 L216.0,331.7 L219.0,330.5 L222.0,329.2 L225.0,327.9 L228.0,326.6 L231.0,325.3 L234.0,324.1 L237.0,322.8 L240.0,321.5 L243.0,320.2 L246.0,319.0 L249.0,317.8 L252.0,316.6 L255.0,315.5 L258.0,314.4 L261.0,313.3 L264.0,312.3 L267.0,311.1 L270.0,310.0 L273.0,308.7 L276.0,307.4 L279.0,306.1 L282.0,304.7 L285.0,303.3 L288.0,302.0 L291.0,300.8 L294.0,299.6 L297.0,298.4 L300.0,297.0 L303.0,295.5 L306.0,293.7 L309.0,291.8 L312.0,289.9 L315.0,288.1 L318.0,286.4 L321.0,284.8 L324.0,283.4 L327.0,282.2 L330.0,281.1 L333.0,280.1 L336.0,279.2 L339.0,278.4 L342.0,277.5 L345.0,276.7 L348.0,275.8 L351.0,274.6 L354.0,272.9 L357.0,271.2 L360.0,269.6 L363.0,268.1 L366.0,267.4 L369.0,267.1 L372.0,267.3 L375.0,267.7 L378.0,268.4 L381.0,269.4 L384.0,271.0 L387.0,272.4 L390.0,273.3 L393.0,273.0 L396.0,272.3 L399.0,270.5 L402.0,268.1 L405.0,267.3 L408.0,267.2 L411.0,267.0 L414.0,266.6 L417.0,266.3 L420.0,265.9 L423.0,265.4 L426.0,264.8 L429.0,264.2 L432.0,263.6 L434.0,263.3" fill="none" stroke="url(#gf)" stroke-width="1.50" stroke-opacity="0.047" />
<path d="M84.0,383.8 L87.0,382.7 L90.0,381.5 L93.0,380.4 L96.0,379.2 L99.0,378.1 L102.0,377.0 L105.0,375.8 L108.0,374.7 L111.0,373.6 L114.0,372.4 L117.0,371.3 L120.0,370.2 L123.0,369.0 L126.0,367.9 L129.0,366.7 L132.0,365.6 L135.0,364.5 L138.0,363.3 L141.0,362.2 L144.0,361.1 L147.0,359.9 L150.0,358.8 L153.0,357.6 L156.0,356.5 L159.0,355.3 L162.0,354.2 L165.0,353.0 L168.0,351.8 L171.0,350.6 L174.0,349.4 L177.0,348.2 L180.0,346.9 L183.0,345.7 L186.0,344.4 L189.0,343.2 L192.0,341.9 L195.0,340.6 L198.0,339.4 L201.0,338.1 L204.0,336.8 L207.0,335.6 L210.0,334.3 L213.0,333.0 L216.0,331.7 L219.0,330.5 L222.0,329.2 L225.0,327.9 L228.0,326.6 L231.0,325.3 L234.0,324.1 L237.0,322.8 L240.0,321.5 L243.0,320.2 L246.0,319.0 L249.0,317.8 L252.0,316.6 L255.0,315.5 L258.0,314.4 L261.0,313.3 L264.0,312.3 L267.0,311.1 L270.0,310.0 L273.0,308.7 L276.0,307.4 L279.0,306.1 L282.0,304.7 L285.0,303.3 L288.0,302.0 L291.0,300.8 L294.0,299.6 L297.0,298.4 L300.0,297.0 L303.0,295.5 L306.0,293.7 L309.0,291.8 L312.0,289.9 L315.0,288.1 L318.0,286.4 L321.0,284.8 L324.0,283.4 L327.0,282.2 L330.0,281.1 L333.0,280.1 L336.0,279.2 L339.0,278.4 L342.0,277.5 L345.0,276.7 L348.0,275.8 L351.0,274.6 L354.0,272.9 L357.0,271.2 L360.0,269.6 L363.0,268.1 L366.0,267.4 L369.0,267.1 L372.0,267.3 L375.0,267.7 L378.0,268.4 L381.0,269.4 L384.0,271.0 L387.0,272.4 L390.0,273.3 L393.0,273.0 L396.0,272.3 L399.0,270.5 L402.0,268.1 L405.0,267.3 L408.0,267.2 L411.0,267.0 L414.0,266.6 L417.0,266.3 L420.0,265.9 L423.0,265.4 L426.0,264.8 L429.0,264.2 L432.0,263.6 L434.0,263.3" fill="none" stroke="url(#gf)" stroke-width="3.00" stroke-opacity="0.018" />
<path d="M84.0,371.7 L87.0,370.5 L90.0,369.4 L93.0,368.2 L96.0,367.1 L99.0,365.9 L102.0,364.8 L105.0,363.7 L108.0,362.5 L111.0,361.4 L114.0,360.3 L117.0,359.1 L120.0,358.0 L123.0,356.9 L126.0,355.7 L129.0,354.6 L132.0,353.5 L135.0,352.3 L138.0,351.2 L141.0,350.0 L144.0,348.9 L147.0,347.8 L150.0,346.6 L153.0,345.5 L156.0,344.3 L159.0,343.2 L162.0,342.0 L165.0,340.8 L168.0,339.6 L171.0,338.4 L174.0,337.2 L177.0,336.0 L180.0,334.8 L183.0,333.5 L186.0,332.3 L189.0,331.0 L192.0,329.8 L195.0,328.5 L198.0,327.2 L201.0,326.0 L204.0,324.7 L207.0,323.4 L210.0,322.1 L213.0,320.9 L216.0,319.6 L219.0,318.3 L222.0,317.1 L225.0,315.8 L228.0,314.5 L231.0,313.2 L234.0,311.9 L237.0,310.6 L240.0,309.3 L243.0,308.1 L246.0,306.9 L249.0,305.6 L252.0,304.5 L255.0,303.4 L258.0,302.3 L261.0,301.2 L264.0,300.1 L267.0,299.0 L270.0,297.8 L273.0,296.6 L276.0,295.3 L279.0,293.9 L282.0,292.5 L285.0,291.2 L288.0,289.8 L291.0,288.6 L294.0,287.4 L297.0,286.2 L300.0,284.9 L303.0,283.3 L306.0,281.5 L309.0,279.7 L312.0,277.8 L315.0,276.0 L318.0,274.2 L321.0,272.7 L324.0,271.3 L327.0,270.0 L330.0,268.9 L333.0,268.0 L336.0,267.1 L339.0,266.2 L342.0,265.4 L345.0,264.6 L348.0,263.7 L351.0,262.5 L354.0,260.8 L357.0,259.1 L360.0,257.5 L363.0,256.0 L366.0,255.2 L369.0,254.9 L372.0,255.1 L375.0,255.6 L378.0,256.2 L381.0,257.3 L384.0,258.8 L387.0,260.2 L390.0,261.1 L393.0,260.9 L396.0,260.2 L399.0,258.3 L402.0,255.9 L405.0,255.2 L408.0,255.0 L411.0,254.8 L414.0,254.5 L417.0,254.1 L420.0,253.7 L423.0,253.2 L426.0,252.7 L429.0,252.1 L432.0,251.5 L434.0,251.1" fill="none" stroke="url(#gf)" stroke-width="1.50" stroke-opacity="0.037" />
<path d="M84.0,371.7 L87.0,370.5 L90.0,369.4 L93.0,368.2 L96.0,367.1 L99.0,365.9 L102.0,364.8 L105.0,363.7 L108.0,362.5 L111.0,361.4 L114.0,360.3 L117.0,359.1 L120.0,358.0 L123.0,356.9 L126.0,355.7 L129.0,354.6 L132.0,353.5 L135.0,352.3 L138.0,351.2 L141.0,350.0 L144.0,348.9 L147.0,347.8 L150.0,346.6 L153.0,345.5 L156.0,344.3 L159.0,343.2 L162.0,342.0 L165.0,340.8 L168.0,339.6 L171.0,338.4 L174.0,337.2 L177.0,336.0 L180.0,334.8 L183.0,333.5 L186.0,332.3 L189.0,331.0 L192.0,329.8 L195.0,328.5 L198.0,327.2 L201.0,326.0 L204.0,324.7 L207.0,323.4 L210.0,322.1 L213.0,320.9 L216.0,319.6 L219.0,318.3 L222.0,317.1 L225.0,315.8 L228.0,314.5 L231.0,313.2 L234.0,311.9 L237.0,310.6 L240.0,309.3 L243.0,308.1 L246.0,306.9 L249.0,305.6 L252.0,304.5 L255.0,303.4 L258.0,302.3 L261.0,301.2 L264.0,300.1 L267.0,299.0 L270.0,297.8 L273.0,296.6 L276.0,295.3 L279.0,293.9 L282.0,292.5 L285.0,291.2 L288.0,289.8 L291.0,288.6 L294.0,287.4 L297.0,286.2 L300.0,284.9 L303.0,283.3 L306.0,281.5 L309.0,279.7 L312.0,277.8 L315.0,276.0 L318.0,274.2 L321.0,272.7 L324.0,271.3 L327.0,270.0 L330.0,268.9 L333.0,268.0 L336.0,267.1 L339.0,266.2 L342.0,265.4 L345.0,264.6 L348.0,263.7 L351.0,262.5 L354.0,260.8 L357.0,259.1 L360.0,257.5 L363.0,256.0 L366.0,255.2 L369.0,254.9 L372.0,255.1 L375.0,255.6 L378.0,256.2 L381.0,257.3 L384.0,258.8 L387.0,260.2 L390.0,261.1 L393.0,260.9 L396.0,260.2 L399.0,258.3 L402.0,255.9 L405.0,255.2 L408.0,255.0 L411.0,254.8 L414.0,254.5 L417.0,254.1 L420.0,253.7 L423.0,253.2 L426.0,252.7 L429.0,252.1 L432.0,251.5 L434.0,251.1" fill="none" stroke="url(#gf)" stroke-width="3.00" stroke-opacity="0.015" />
<path d="M84.0,468.9 L87.0,467.7 L90.0,466.6 L93.0,465.4 L96.0,464.3 L99.0,463.1 L102.0,462.0 L105.0,460.9 L108.0,459.7 L111.0,458.6 L114.0,457.5 L117.0,456.3 L120.0,455.2 L123.0,454.1 L126.0,452.9 L129.0,451.8 L132.0,450.7 L135.0,449.5 L138.0,448.4 L141.0,447.2 L144.0,446.1 L147.0,445.0 L150.0,443.8 L153.0,442.7 L156.0,441.5 L159.0,440.4 L162.0,439.2 L165.0,438.0 L168.0,436.8 L171.0,435.6 L174.0,434.4 L177.0,433.2 L180.0,432.0 L183.0,430.7 L186.0,429.5 L189.0,428.2 L192.0,427.0 L195.0,425.7 L198.0,424.4 L201.0,423.2 L204.0,421.9 L207.0,420.6 L210.0,419.3 L213.0,418.1 L216.0,416.8 L219.0,415.5 L222.0,414.3 L225.0,413.0 L228.0,411.7 L231.0,410.4 L234.0,409.1 L237.0,407.8 L240.0,406.5 L243.0,405.3 L246.0,404.1 L249.0,402.8 L252.0,401.7 L255.0,400.6 L258.0,399.5 L261.0,398.4 L264.0,397.3 L267.0,396.2 L270.0,395.0 L273.0,393.8 L276.0,392.5 L279.0,391.1 L282.0,389.7 L285.0,388.4 L288.0,387.0 L291.0,385.8 L294.0,384.6 L297.0,383.4 L300.0,382.1 L303.0,380.5 L306.0,378.7 L309.0,376.9 L312.0,375.0 L315.0,373.2 L318.0,371.4 L321.0,369.9 L324.0,368.5 L327.0,367.2 L330.0,366.1 L333.0,365.2 L336.0,364.3 L339.0,363.4 L342.0,362.6 L345.0,361.8 L348.0,360.9 L351.0,359.7 L354.0,358.0 L357.0,356.3 L360.0,354.7 L363.0,353.2 L366.0,352.4 L369.0,352.1 L372.0,352.3 L375.0,352.8 L378.0,353.4 L381.0,354.5 L384.0,356.0 L387.0,357.4 L390.0,358.3 L393.0,358.1 L396.0,357.4 L399.0,355.5 L402.0,353.1 L405.0,352.4 L408.0,352.2 L411.0,352.0 L414.0,351.7 L417.0,351.3 L420.0,350.9 L423.0,350.4 L426.0,349.9 L429.0,349.3 L432.0,348.7 L434.0,348.3" fill="none" stroke="url(#gf)" stroke-width="1.50" stroke-opacity="0.223" />
<path d="M84.0,468.9 L87.0,467.7 L90.0,466.6 L93.0,465.4 L96.0,464.3 L99.0,463.1 L102.0,462.0 L105.0,460.9 L108.0,459.7 L111.0,458.6 L114.0,457.5 L117.0,456.3 L120.0,455.2 L123.0,454.1 L126.0,452.9 L129.0,451.8 L132.0,450.7 L135.0,449.5 L138.0,448.4 L141.0,447.2 L144.0,446.1 L147.0,445.0 L150.0,443.8 L153.0,442.7 L156.0,441.5 L159.0,440.4 L162.0,439.2 L165.0,438.0 L168.0,436.8 L171.0,435.6 L174.0,434.4 L177.0,433.2 L180.0,432.0 L183.0,430.7 L186.0,429.5 L189.0,428.2 L192.0,427.0 L195.0,425.7 L198.0,424.4 L201.0,423.2 L204.0,421.9 L207.0,420.6 L210.0,419.3 L213.0,418.1 L216.0,416.8 L219.0,415.5 L222.0,414.3 L225.0,413.0 L228.0,411.7 L231.0,410.4 L234.0,409.1 L237.0,407.8 L240.0,406.5 L243.0,405.3 L246.0,404.1 L249.0,402.8 L252.0,401.7 L255.0,400.6 L258.0,399.5 L261.0,398.4 L264.0,397.3 L267.0,396.2 L270.0,395.0 L273.0,393.8 L276.0,392.5 L279.0,391.1 L282.0,389.7 L285.0,388.4 L288.0,387.0 L291.0,385.8 L294.0,384.6 L297.0,383.4 L300.0,382.1 L303.0,380.5 L306.0,378.7 L309.0,376.9 L312.0,375.0 L315.0,373.2 L318.0,371.4 L321.0,369.9 L324.0,368.5 L327.0,367.2 L330.0,366.1 L333.0,365.2 L336.0,364.3 L339.0,363.4 L342.0,362.6 L345.0,361.8 L348.0,360.9 L351.0,359.7 L354.0,358.0 L357.0,356.3 L360.0,354.7 L363.0,353.2 L366.0,352.4 L369.0,352.1 L372.0,352.3 L375.0,352.8 L378.0,353.4 L381.0,354.5 L384.0,356.0 L387.0,357.4 L390.0,358.3 L393.0,358.1 L396.0,357.4 L399.0,355.5 L402.0,353.1 L405.0,352.4 L408.0,352.2 L411.0,352.0 L414.0,351.7 L417.0,351.3 L420.0,350.9 L423.0,350.4 L426.0,349.9 L429.0,349.3 L432.0,348.7 L434.0,348.3" fill="none" stroke="url(#gf)" stroke-width="3.00" stroke-opacity="0.089" />
<path d="M84.0,481.0 L87.0,479.9 L90.0,478.7 L93.0,477.6 L96.0,476.4 L99.0,475.3 L102.0,474.2 L105.0,473.0 L108.0,471.9 L111.0,470.8 L114.0,469.6 L117.0,468.5 L120.0,467.4 L123.0,466.2 L126.0,465.1 L129.0,463.9 L132.0,462.8 L135.0,461.7 L138.0,460.5 L141.0,459.4 L144.0,458.3 L147.0,457.1 L150.0,456.0 L153.0,454.8 L156.0,453.7 L159.0,452.5 L162.0,451.4 L165.0,450.2 L168.0,449.0 L171.0,447.8 L174.0,446.6 L177.0,445.4 L180.0,444.1 L183.0,442.9 L186.0,441.6 L189.0,440.4 L192.0,439.1 L195.0,437.8 L198.0,436.6 L201.0,435.3 L204.0,434.0 L207.0,432.8 L210.0,431.5 L213.0,430.2 L216.0,428.9 L219.0,427.7 L222.0,426.4 L225.0,425.1 L228.0,423.8 L231.0,422.5 L234.0,421.3 L237.0,420.0 L240.0,418.7 L243.0,417.4 L246.0,416.2 L249.0,415.0 L252.0,413.8 L255.0,412.7 L258.0,411.6 L261.0,410.5 L264.0,409.5 L267.0,408.3 L270.0,407.2 L273.0,405.9 L276.0,404.6 L279.0,403.3 L282.0,401.9 L285.0,400.5 L288.0,399.2 L291.0,398.0 L294.0,396.8 L297.0,395.6 L300.0,394.2 L303.0,392.7 L306.0,390.9 L309.0,389.0 L312.0,387.1 L315.0,385.3 L318.0,383.6 L321.0,382.0 L324.0,380.6 L327.0,379.4 L330.0,378.3 L333.0,377.3 L336.0,376.4 L339.0,375.6 L342.0,374.7 L345.0,373.9 L348.0,373.0 L351.0,371.8 L354.0,370.1 L357.0,368.4 L360.0,366.8 L363.0,365.3 L366.0,364.6 L369.0,364.3 L372.0,364.5 L375.0,364.9 L378.0,365.6 L381.0,366.6 L384.0,368.2 L387.0,369.6 L390.0,370.5 L393.0,370.2 L396.0,369.5 L399.0,367.7 L402.0,365.3 L405.0,364.5 L408.0,364.4 L411.0,364.2 L414.0,363.8 L417.0,363.5 L420.0,363.0 L423.0,362.6 L426.0,362.0 L429.0,361.4 L432.0,360.8 L434.0,360.5" fill="none" stroke="url(#gf)" stroke-width="1.50" stroke-opacity="0.074" />
<path d="M84.0,481.0 L87.0,479.9 L90.0,478.7 L93.0,477.6 L96.0,476.4 L99.0,475.3 L102.0,474.2 L105.0,473.0 L108.0,471.9 L111.0,470.8 L114.0,469.6 L117.0,468.5 L120.0,467.4 L123.0,466.2 L126.0,465.1 L129.0,463.9 L132.0,462.8 L135.0,461.7 L138.0,460.5 L141.0,459.4 L144.0,458.3 L147.0,457.1 L150.0,456.0 L153.0,454.8 L156.0,453.7 L159.0,452.5 L162.0,451.4 L165.0,450.2 L168.0,449.0 L171.0,447.8 L174.0,446.6 L177.0,445.4 L180.0,444.1 L183.0,442.9 L186.0,441.6 L189.0,440.4 L192.0,439.1 L195.0,437.8 L198.0,436.6 L201.0,435.3 L204.0,434.0 L207.0,432.8 L210.0,431.5 L213.0,430.2 L216.0,428.9 L219.0,427.7 L222.0,426.4 L225.0,425.1 L228.0,423.8 L231.0,422.5 L234.0,421.3 L237.0,420.0 L240.0,418.7 L243.0,417.4 L246.0,416.2 L249.0,415.0 L252.0,413.8 L255.0,412.7 L258.0,411.6 L261.0,410.5 L264.0,409.5 L267.0,408.3 L270.0,407.2 L273.0,405.9 L276.0,404.6 L279.0,403.3 L282.0,401.9 L285.0,400.5 L288.0,399.2 L291.0,398.0 L294.0,396.8 L297.0,395.6 L300.0,394.2 L303.0,392.7 L306.0,390.9 L309.0,389.0 L312.0,387.1 L315.0,385.3 L318.0,383.6 L321.0,382.0 L324.0,380.6 L327.0,379.4 L330.0,378.3 L333.0,377.3 L336.0,376.4 L339.0,375.6 L342.0,374.7 L345.0,373.9 L348.0,373.0 L351.0,371.8 L354.0,370.1 L357.0,368.4 L360.0,366.8 L363.0,365.3 L366.0,364.6 L369.0,364.3 L372.0,364.5 L375.0,364.9 L378.0,365.6 L381.0,366.6 L384.0,368.2 L387.0,369.6 L390.0,370.5 L393.0,370.2 L396.0,369.5 L399.0,367.7 L402.0,365.3 L405.0,364.5 L408.0,364.4 L411.0,364.2 L414.0,363.8 L417.0,363.5 L420.0,363.0 L423.0,362.6 L426.0,362.0 L429.0,361.4 L432.0,360.8 L434.0,360.5" fill="none" stroke="url(#gf)" stroke-width="3.00" stroke-opacity="0.030" />
<path d="M84.0,493.2 L87.0,492.0 L90.0,490.9 L93.0,489.7 L96.0,488.6 L99.0,487.4 L102.0,486.3 L105.0,485.2 L108.0,484.0 L111.0,482.9 L114.0,481.8 L117.0,480.6 L120.0,479.5 L123.0,478.4 L126.0,477.2 L129.0,476.1 L132.0,475.0 L135.0,473.8 L138.0,472.7 L141.0,471.5 L144.0,470.4 L147.0,469.3 L150.0,468.1 L153.0,467.0 L156.0,465.8 L159.0,464.7 L162.0,463.5 L165.0,462.3 L168.0,461.1 L171.0,459.9 L174.0,458.7 L177.0,457.5 L180.0,456.3 L183.0,455.0 L186.0,453.8 L189.0,452.5 L192.0,451.3 L195.0,450.0 L198.0,448.7 L201.0,447.5 L204.0,446.2 L207.0,444.9 L210.0,443.6 L213.0,442.4 L216.0,441.1 L219.0,439.8 L222.0,438.6 L225.0,437.3 L228.0,436.0 L231.0,434.7 L234.0,433.4 L237.0,432.1 L240.0,430.8 L243.0,429.6 L246.0,428.4 L249.0,427.1 L252.0,426.0 L255.0,424.9 L258.0,423.8 L261.0,422.7 L264.0,421.6 L267.0,420.5 L270.0,419.3 L273.0,418.1 L276.0,416.8 L279.0,415.4 L282.0,414.0 L285.0,412.7 L288.0,411.3 L291.0,410.1 L294.0,408.9 L297.0,407.7 L300.0,406.4 L303.0,404.8 L306.0,403.0 L309.0,401.2 L312.0,399.3 L315.0,397.5 L318.0,395.7 L321.0,394.2 L324.0,392.8 L327.0,391.5 L330.0,390.4 L333.0,389.5 L336.0,388.6 L339.0,387.7 L342.0,386.9 L345.0,386.1 L348.0,385.2 L351.0,384.0 L354.0,382.3 L357.0,380.6 L360.0,379.0 L363.0,377.5 L366.0,376.7 L369.0,376.4 L372.0,376.6 L375.0,377.1 L378.0,377.7 L381.0,378.8 L384.0,380.3 L387.0,381.7 L390.0,382.6 L393.0,382.4 L396.0,381.7 L399.0,379.8 L402.0,377.4 L405.0,376.7 L408.0,376.5 L411.0,376.3 L414.0,376.0 L417.0,375.6 L420.0,375.2 L423.0,374.7 L426.0,374.2 L429.0,373.6 L432.0,373.0 L434.0,372.6" fill="none" stroke="url(#gf)" stroke-width="1.50" stroke-opacity="0.037" />
<path d="M84.0,493.2 L87.0,492.0 L90.0,490.9 L93.0,489.7 L96.0,488.6 L99.0,487.4 L102.0,486.3 L105.0,485.2 L108.0,484.0 L111.0,482.9 L114.0,481.8 L117.0,480.6 L120.0,479.5 L123.0,478.4 L126.0,477.2 L129.0,476.1 L132.0,475.0 L135.0,473.8 L138.0,472.7 L141.0,471.5 L144.0,470.4 L147.0,469.3 L150.0,468.1 L153.0,467.0 L156.0,465.8 L159.0,464.7 L162.0,463.5 L165.0,462.3 L168.0,461.1 L171.0,459.9 L174.0,458.7 L177.0,457.5 L180.0,456.3 L183.0,455.0 L186.0,453.8 L189.0,452.5 L192.0,451.3 L195.0,450.0 L198.0,448.7 L201.0,447.5 L204.0,446.2 L207.0,444.9 L210.0,443.6 L213.0,442.4 L216.0,441.1 L219.0,439.8 L222.0,438.6 L225.0,437.3 L228.0,436.0 L231.0,434.7 L234.0,433.4 L237.0,432.1 L240.0,430.8 L243.0,429.6 L246.0,428.4 L249.0,427.1 L252.0,426.0 L255.0,424.9 L258.0,423.8 L261.0,422.7 L264.0,421.6 L267.0,420.5 L270.0,419.3 L273.0,418.1 L276.0,416.8 L279.0,415.4 L282.0,414.0 L285.0,412.7 L288.0,411.3 L291.0,410.1 L294.0,408.9 L297.0,407.7 L300.0,406.4 L303.0,404.8 L306.0,403.0 L309.0,401.2 L312.0,399.3 L315.0,397.5 L318.0,395.7 L321.0,394.2 L324.0,392.8 L327.0,391.5 L330.0,390.4 L333.0,389.5 L336.0,388.6 L339.0,387.7 L342.0,386.9 L345.0,386.1 L348.0,385.2 L351.0,384.0 L354.0,382.3 L357.0,380.6 L360.0,379.0 L363.0,377.5 L366.0,376.7 L369.0,376.4 L372.0,376.6 L375.0,377.1 L378.0,377.7 L381.0,378.8 L384.0,380.3 L387.0,381.7 L390.0,382.6 L393.0,382.4 L396.0,381.7 L399.0,379.8 L402.0,377.4 L405.0,376.7 L408.0,376.5 L411.0,376.3 L414.0,376.0 L417.0,375.6 L420.0,375.2 L423.0,374.7 L426.0,374.2 L429.0,373.6 L432.0,373.0 L434.0,372.6" fill="none" stroke="url(#gf)" stroke-width="3.00" stroke-opacity="0.015" />
<path d="M84.0,158.1 L87.0,156.9 L90.0,155.8 L93.0,154.6 L96.0,153.5 L99.0,152.3 L102.0,151.2 L105.0,150.1 L108.0,148.9 L111.0,147.8 L114.0,146.7 L117.0,145.5 L120.0,144.4 L123.0,143.3 L126.0,142.1 L129.0,141.0 L132.0,139.8 L135.0,138.7 L138.0,137.6 L141.0,136.4 L144.0,135.3 L147.0,134.1 L150.0,133.0 L153.0,131.8 L156.0,130.7 L159.0,129.5 L162.0,128.4 L165.0,127.2 L168.0,126.0 L171.0,124.8 L174.0,123.6 L177.0,122.4 L180.0,121.1 L183.0,119.9 L186.0,118.6 L189.0,117.4 L192.0,116.1 L195.0,114.8 L198.0,113.6 L201.0,112.3 L204.0,111.0 L207.0,109.7 L210.0,108.4 L213.0,107.2 L216.0,105.9 L219.0,104.6 L222.0,103.4 L225.0,102.1 L228.0,100.8 L231.0,99.5 L234.0,98.2 L237.0,96.9 L240.0,95.6 L243.0,94.4 L246.0,93.1 L249.0,91.9 L252.0,90.7 L255.0,89.6 L258.0,88.5 L261.0,87.4 L264.0,86.3 L267.0,85.2 L270.0,84.0 L273.0,82.7 L276.0,81.4 L279.0,80.0 L282.0,78.7 L285.0,77.3 L288.0,75.9 L291.0,74.6 L294.0,73.3 L297.0,72.0 L300.0,70.6 L303.0,69.0 L306.0,67.2 L309.0,65.3 L312.0,63.3 L315.0,61.5 L318.0,59.7 L321.0,58.1 L324.0,56.7 L327.0,55.4 L330.0,54.3 L333.0,53.3 L336.0,52.4 L339.0,51.6 L342.0,50.7 L345.0,49.9 L348.0,49.0 L351.0,47.9 L354.0,46.2 L357.0,44.5 L360.0,42.9 L363.0,41.4 L366.0,40.7 L369.0,40.4 L372.0,40.6 L375.0,41.2 L378.0,42.1 L381.0,43.3 L384.0,45.0 L387.0,46.4 L390.0,47.3 L393.0,47.1 L396.0,46.4 L399.0,44.5 L402.0,42.1 L405.0,41.0 L408.0,40.7 L411.0,40.5 L414.0,40.2 L417.0,39.8 L420.0,39.4 L423.0,38.9 L426.0,38.4 L429.0,37.8 L432.0,37.2 L434.0,36.8" fill="none" stroke="#ffffff" stroke-width="1.50" stroke-opacity="0.190" />
<path d="M84.0,158.1 L87.0,156.9 L90.0,155.8 L93.0,154.6 L96.0,153.5 L99.0,152.3 L102.0,151.2 L105.0,150.1 L108.0,148.9 L111.0,147.8 L114.0,146.7 L117.0,145.5 L120.0,144.4 L123.0,143.3 L126.0,142.1 L129.0,141.0 L132.0,139.8 L135.0,138.7 L138.0,137.6 L141.0,136.4 L144.0,135.3 L147.0,134.1 L150.0,133.0 L153.0,131.8 L156.0,130.7 L159.0,129.5 L162.0,128.4 L165.0,127.2 L168.0,126.0 L171.0,124.8 L174.0,123.6 L177.0,122.4 L180.0,121.1 L183.0,119.9 L186.0,118.6 L189.0,117.4 L192.0,116.1 L195.0,114.8 L198.0,113.6 L201.0,112.3 L204.0,111.0 L207.0,109.7 L210.0,108.4 L213.0,107.2 L216.0,105.9 L219.0,104.6 L222.0,103.4 L225.0,102.1 L228.0,100.8 L231.0,99.5 L234.0,98.2 L237.0,96.9 L240.0,95.6 L243.0,94.4 L246.0,93.1 L249.0,91.9 L252.0,90.7 L255.0,89.6 L258.0,88.5 L261.0,87.4 L264.0,86.3 L267.0,85.2 L270.0,84.0 L273.0,82.7 L276.0,81.4 L279.0,80.0 L282.0,78.7 L285.0,77.3 L288.0,75.9 L291.0,74.6 L294.0,73.3 L297.0,72.0 L300.0,70.6 L303.0,69.0 L306.0,67.2 L309.0,65.3 L312.0,63.3 L315.0,61.5 L318.0,59.7 L321.0,58.1 L324.0,56.7 L327.0,55.4 L330.0,54.3 L333.0,53.3 L336.0,52.4 L339.0,51.6 L342.0,50.7 L345.0,49.9 L348.0,49.0 L351.0,47.9 L354.0,46.2 L357.0,44.5 L360.0,42.9 L363.0,41.4 L366.0,40.7 L369.0,40.4 L372.0,40.6 L375.0,41.2 L378.0,42.1 L381.0,43.3 L384.0,45.0 L387.0,46.4 L390.0,47.3 L393.0,47.1 L396.0,46.4 L399.0,44.5 L402.0,42.1 L405.0,41.0 L408.0,40.7 L411.0,40.5 L414.0,40.2 L417.0,39.8 L420.0,39.4 L423.0,38.9 L426.0,38.4 L429.0,37.8 L432.0,37.2 L434.0,36.8" fill="none" stroke="#ffffff" stroke-width="3.20" stroke-opacity="0.070" />
<path d="M84.0,547.1 L87.0,545.9 L90.0,544.8 L93.0,543.6 L96.0,542.5 L99.0,541.3 L102.0,540.2 L105.0,539.1 L108.0,537.9 L111.0,536.8 L114.0,535.7 L117.0,534.5 L120.0,533.4 L123.0,532.3 L126.0,531.1 L129.0,530.0 L132.0,528.8 L135.0,527.7 L138.0,526.6 L141.0,525.4 L144.0,524.3 L147.0,523.1 L150.0,522.0 L153.0,520.8 L156.0,519.7 L159.0,518.5 L162.0,517.4 L165.0,516.2 L168.0,515.0 L171.0,513.8 L174.0,512.6 L177.0,511.4 L180.0,510.1 L183.0,508.9 L186.0,507.6 L189.0,506.4 L192.0,505.1 L195.0,503.8 L198.0,502.6 L201.0,501.3 L204.0,500.0 L207.0,498.7 L210.0,497.4 L213.0,496.2 L216.0,494.9 L219.0,493.6 L222.0,492.4 L225.0,491.1 L228.0,489.8 L231.0,488.5 L234.0,487.2 L237.0,485.9 L240.0,484.6 L243.0,483.4 L246.0,482.1 L249.0,480.9 L252.0,479.7 L255.0,478.6 L258.0,477.5 L261.0,476.4 L264.0,475.3 L267.0,474.2 L270.0,473.0 L273.0,471.7 L276.0,470.4 L279.0,469.0 L282.0,467.7 L285.0,466.3 L288.0,464.9 L291.0,463.6 L294.0,462.3 L297.0,461.0 L300.0,459.6 L303.0,458.0 L306.0,456.2 L309.0,454.3 L312.0,452.3 L315.0,450.5 L318.0,448.7 L321.0,447.1 L324.0,445.7 L327.0,444.4 L330.0,443.3 L333.0,442.3 L336.0,441.4 L339.0,440.6 L342.0,439.7 L345.0,438.9 L348.0,438.0 L351.0,436.9 L354.0,435.2 L357.0,433.5 L360.0,431.9 L363.0,430.4 L366.0,429.7 L369.0,429.4 L372.0,429.6 L375.0,430.2 L378.0,431.1 L381.0,432.3 L384.0,434.0 L387.0,435.4 L390.0,436.3 L393.0,436.1 L396.0,435.4 L399.0,433.5 L402.0,431.1 L405.0,430.0 L408.0,429.7 L411.0,429.5 L414.0,429.2 L417.0,428.8 L420.0,428.4 L423.0,427.9 L426.0,427.4 L429.0,426.8 L432.0,426.2 L434.0,425.8" fill="none" stroke="url(#gl)" stroke-width="1.60" stroke-opacity="0.200" />
<path d="M84.0,547.1 L87.0,545.9 L90.0,544.8 L93.0,543.6 L96.0,542.5 L99.0,541.3 L102.0,540.2 L105.0,539.1 L108.0,537.9 L111.0,536.8 L114.0,535.7 L117.0,534.5 L120.0,533.4 L123.0,532.3 L126.0,531.1 L129.0,530.0 L132.0,528.8 L135.0,527.7 L138.0,526.6 L141.0,525.4 L144.0,524.3 L147.0,523.1 L150.0,522.0 L153.0,520.8 L156.0,519.7 L159.0,518.5 L162.0,517.4 L165.0,516.2 L168.0,515.0 L171.0,513.8 L174.0,512.6 L177.0,511.4 L180.0,510.1 L183.0,508.9 L186.0,507.6 L189.0,506.4 L192.0,505.1 L195.0,503.8 L198.0,502.6 L201.0,501.3 L204.0,500.0 L207.0,498.7 L210.0,497.4 L213.0,496.2 L216.0,494.9 L219.0,493.6 L222.0,492.4 L225.0,491.1 L228.0,489.8 L231.0,488.5 L234.0,487.2 L237.0,485.9 L240.0,484.6 L243.0,483.4 L246.0,482.1 L249.0,480.9 L252.0,479.7 L255.0,478.6 L258.0,477.5 L261.0,476.4 L264.0,475.3 L267.0,474.2 L270.0,473.0 L273.0,471.7 L276.0,470.4 L279.0,469.0 L282.0,467.7 L285.0,466.3 L288.0,464.9 L291.0,463.6 L294.0,462.3 L297.0,461.0 L300.0,459.6 L303.0,458.0 L306.0,456.2 L309.0,454.3 L312.0,452.3 L315.0,450.5 L318.0,448.7 L321.0,447.1 L324.0,445.7 L327.0,444.4 L330.0,443.3 L333.0,442.3 L336.0,441.4 L339.0,440.6 L342.0,439.7 L345.0,438.9 L348.0,438.0 L351.0,436.9 L354.0,435.2 L357.0,433.5 L360.0,431.9 L363.0,430.4 L366.0,429.7 L369.0,429.4 L372.0,429.6 L375.0,430.2 L378.0,431.1 L381.0,432.3 L384.0,434.0 L387.0,435.4 L390.0,436.3 L393.0,436.1 L396.0,435.4 L399.0,433.5 L402.0,431.1 L405.0,430.0 L408.0,429.7 L411.0,429.5 L414.0,429.2 L417.0,428.8 L420.0,428.4 L423.0,427.9 L426.0,427.4 L429.0,426.8 L432.0,426.2 L434.0,425.8" fill="none" stroke="url(#gl)" stroke-width="3.40" stroke-opacity="0.100" />
</g>
<g>
<path d="M84.0,247.7 L87.0,246.6 L90.0,245.4 L93.0,244.3 L96.0,243.1 L99.0,242.0 L102.0,240.8 L105.0,239.7 L108.0,238.6 L111.0,237.4 L114.0,236.3 L117.0,235.1 L120.0,234.0 L123.0,232.9 L126.0,231.7 L129.0,230.6 L132.0,229.4 L135.0,228.3 L138.0,227.1 L141.0,226.0 L144.0,224.8 L147.0,223.7 L150.0,222.5 L153.0,221.4 L156.0,220.2 L159.0,219.0 L162.0,217.9 L165.0,216.7 L168.0,215.5 L171.0,214.3 L174.0,213.0 L177.0,211.8 L180.0,210.6 L183.0,209.3 L186.0,208.0 L189.0,206.8 L192.0,205.5 L195.0,204.2 L198.0,202.9 L201.0,201.6 L204.0,200.4 L207.0,199.1 L210.0,197.8 L213.0,196.5 L216.0,195.2 L219.0,193.9 L222.0,192.6 L225.0,191.4 L228.0,190.1 L231.0,188.7 L234.0,187.4 L237.0,186.1 L240.0,184.8 L243.0,183.6 L246.0,182.3 L249.0,181.1 L252.0,179.9 L255.0,178.8 L258.0,177.6 L261.0,176.5 L264.0,175.4 L267.0,174.3 L270.0,173.1 L273.0,171.8 L276.0,170.4 L279.0,169.0 L282.0,167.6 L285.0,166.2 L288.0,164.7 L291.0,163.3 L294.0,161.9 L297.0,160.6 L300.0,159.1 L303.0,157.4 L306.0,155.6 L309.0,153.7 L312.0,151.8 L315.0,149.9 L318.0,148.1 L321.0,146.5 L324.0,145.1 L327.0,143.8 L330.0,142.7 L333.0,141.7 L336.0,140.8 L339.0,139.9 L342.0,139.1 L345.0,138.3 L348.0,137.4 L351.0,136.2 L354.0,134.5 L357.0,132.8 L360.0,131.3 L363.0,129.8 L366.0,129.0 L369.0,128.9 L372.0,129.3 L375.0,130.2 L378.0,131.3 L381.0,132.9 L384.0,134.7 L387.0,136.1 L390.0,137.0 L393.0,136.7 L396.0,136.1 L399.0,134.2 L402.0,131.7 L405.0,130.2 L408.0,129.8 L411.0,129.6 L414.0,129.3 L417.0,128.9 L420.0,128.5 L423.0,128.0 L426.0,127.5 L429.0,126.9 L432.0,126.3 L434.0,125.9 L434.0,130.1 L432.0,130.5 L429.0,131.1 L426.0,131.7 L423.0,132.2 L420.0,132.7 L417.0,133.1 L414.0,133.5 L411.0,133.8 L408.0,134.0 L405.0,134.2 L402.0,134.9 L399.0,137.3 L396.0,139.2 L393.0,139.9 L390.0,140.1 L387.0,139.2 L384.0,137.8 L381.0,136.3 L378.0,135.2 L375.0,134.6 L372.0,134.1 L369.0,133.9 L366.0,134.2 L363.0,135.0 L360.0,136.5 L357.0,138.1 L354.0,139.8 L351.0,141.5 L348.0,142.7 L345.0,143.6 L342.0,144.4 L339.0,145.2 L336.0,146.1 L333.0,147.0 L330.0,147.9 L327.0,149.0 L324.0,150.3 L321.0,151.7 L318.0,153.2 L315.0,155.0 L312.0,156.8 L309.0,158.7 L306.0,160.5 L303.0,162.3 L300.0,163.9 L297.0,165.2 L294.0,166.4 L291.0,167.6 L288.0,168.8 L285.0,170.2 L282.0,171.5 L279.0,172.9 L276.0,174.3 L273.0,175.6 L270.0,176.8 L267.0,178.0 L264.0,179.1 L261.0,180.2 L258.0,181.3 L255.0,182.4 L252.0,183.5 L249.0,184.6 L246.0,185.9 L243.0,187.1 L240.0,188.3 L237.0,189.6 L234.0,190.9 L231.0,192.2 L228.0,193.5 L225.0,194.8 L222.0,196.1 L219.0,197.3 L216.0,198.6 L213.0,199.9 L210.0,201.1 L207.0,202.4 L204.0,203.7 L201.0,205.0 L198.0,206.2 L195.0,207.5 L192.0,208.8 L189.0,210.0 L186.0,211.3 L183.0,212.5 L180.0,213.8 L177.0,215.0 L174.0,216.2 L171.0,217.4 L168.0,218.6 L165.0,219.8 L162.0,221.0 L159.0,222.2 L156.0,223.3 L153.0,224.5 L150.0,225.6 L147.0,226.8 L144.0,227.9 L141.0,229.0 L138.0,230.2 L135.0,231.3 L132.0,232.5 L129.0,233.6 L126.0,234.7 L123.0,235.9 L120.0,237.0 L117.0,238.1 L114.0,239.3 L111.0,240.4 L108.0,241.5 L105.0,242.7 L102.0,243.8 L99.0,244.9 L96.0,246.1 L93.0,247.2 L90.0,248.4 L87.0,249.5 L84.0,250.7Z" fill="#fff" fill-opacity="0.400"/>
<path d="M84.0,248.4 L87.0,247.3 L90.0,246.1 L93.0,245.0 L96.0,243.8 L99.0,242.7 L102.0,241.5 L105.0,240.4 L108.0,239.3 L111.0,238.1 L114.0,237.0 L117.0,235.8 L120.0,234.7 L123.0,233.6 L126.0,232.4 L129.0,231.3 L132.0,230.1 L135.0,229.0 L138.0,227.8 L141.0,226.7 L144.0,225.5 L147.0,224.4 L150.0,223.2 L153.0,222.1 L156.0,220.9 L159.0,219.7 L162.0,218.6 L165.0,217.4 L168.0,216.2 L171.0,215.0 L174.0,213.7 L177.0,212.5 L180.0,211.3 L183.0,210.0 L186.0,208.7 L189.0,207.5 L192.0,206.2 L195.0,204.9 L198.0,203.6 L201.0,202.3 L204.0,201.1 L207.0,199.8 L210.0,198.5 L213.0,197.2 L216.0,195.9 L219.0,194.6 L222.0,193.3 L225.0,192.1 L228.0,190.8 L231.0,189.4 L234.0,188.1 L237.0,186.8 L240.0,185.5 L243.0,184.3 L246.0,183.0 L249.0,181.8 L252.0,180.6 L255.0,179.5 L258.0,178.3 L261.0,177.2 L264.0,176.1 L267.0,175.0 L270.0,173.8 L273.0,172.5 L276.0,171.1 L279.0,169.7 L282.0,168.3 L285.0,166.9 L288.0,165.4 L291.0,164.0 L294.0,162.6 L297.0,161.3 L300.0,159.8 L303.0,158.1 L306.0,156.3 L309.0,154.4 L312.0,152.5 L315.0,150.6 L318.0,148.8 L321.0,147.2 L324.0,145.8 L327.0,144.5 L330.0,143.4 L333.0,142.4 L336.0,141.5 L339.0,140.6 L342.0,139.8 L345.0,139.0 L348.0,138.1 L351.0,136.9 L354.0,135.2 L357.0,133.5 L360.0,132.0 L363.0,130.5 L366.0,129.7 L369.0,129.6 L372.0,130.0 L375.0,130.9 L378.0,132.0 L381.0,133.6 L384.0,135.4 L387.0,136.8 L390.0,137.7 L393.0,137.4 L396.0,136.8 L399.0,134.9 L402.0,132.4 L405.0,130.9 L408.0,130.5 L411.0,130.3 L414.0,130.0 L417.0,129.6 L420.0,129.2 L423.0,128.7 L426.0,128.2 L429.0,127.6 L432.0,127.0 L434.0,126.6 L434.0,129.6 L432.0,130.0 L429.0,130.6 L426.0,131.2 L423.0,131.7 L420.0,132.2 L417.0,132.6 L414.0,133.0 L411.0,133.3 L408.0,133.5 L405.0,133.7 L402.0,134.4 L399.0,136.8 L396.0,138.7 L393.0,139.4 L390.0,139.6 L387.0,138.7 L384.0,137.3 L381.0,135.8 L378.0,134.7 L375.0,134.1 L372.0,133.6 L369.0,133.4 L366.0,133.7 L363.0,134.5 L360.0,136.0 L357.0,137.6 L354.0,139.3 L351.0,141.0 L348.0,142.2 L345.0,143.1 L342.0,143.9 L339.0,144.7 L336.0,145.6 L333.0,146.5 L330.0,147.4 L327.0,148.5 L324.0,149.8 L321.0,151.2 L318.0,152.7 L315.0,154.5 L312.0,156.3 L309.0,158.2 L306.0,160.0 L303.0,161.8 L300.0,163.4 L297.0,164.7 L294.0,165.9 L291.0,167.1 L288.0,168.3 L285.0,169.7 L282.0,171.0 L279.0,172.4 L276.0,173.8 L273.0,175.1 L270.0,176.3 L267.0,177.5 L264.0,178.6 L261.0,179.7 L258.0,180.8 L255.0,181.9 L252.0,183.0 L249.0,184.1 L246.0,185.4 L243.0,186.6 L240.0,187.8 L237.0,189.1 L234.0,190.4 L231.0,191.7 L228.0,193.0 L225.0,194.3 L222.0,195.6 L219.0,196.8 L216.0,198.1 L213.0,199.4 L210.0,200.6 L207.0,201.9 L204.0,203.2 L201.0,204.5 L198.0,205.7 L195.0,207.0 L192.0,208.3 L189.0,209.5 L186.0,210.8 L183.0,212.0 L180.0,213.3 L177.0,214.5 L174.0,215.7 L171.0,216.9 L168.0,218.1 L165.0,219.3 L162.0,220.5 L159.0,221.7 L156.0,222.8 L153.0,224.0 L150.0,225.1 L147.0,226.3 L144.0,227.4 L141.0,228.5 L138.0,229.7 L135.0,230.8 L132.0,232.0 L129.0,233.1 L126.0,234.2 L123.0,235.4 L120.0,236.5 L117.0,237.6 L114.0,238.8 L111.0,239.9 L108.0,241.0 L105.0,242.2 L102.0,243.3 L99.0,244.4 L96.0,245.6 L93.0,246.7 L90.0,247.9 L87.0,249.0 L84.0,250.2Z" fill="#fff" fill-opacity="1.000"/>
<path d="M84.0,260.2 L87.0,259.0 L90.0,257.9 L93.0,256.7 L96.0,255.5 L99.0,254.4 L102.0,253.2 L105.0,252.0 L108.0,250.9 L111.0,249.7 L114.0,248.6 L117.0,247.4 L120.0,246.2 L123.0,245.1 L126.0,243.9 L129.0,242.8 L132.0,241.6 L135.0,240.4 L138.0,239.2 L141.0,238.1 L144.0,236.9 L147.0,235.8 L150.0,234.6 L153.0,233.4 L156.0,232.2 L159.0,231.1 L162.0,229.9 L165.0,228.7 L168.0,227.5 L171.0,226.2 L174.0,225.0 L177.0,223.7 L180.0,222.5 L183.0,221.2 L186.0,219.9 L189.0,218.7 L192.0,217.4 L195.0,216.1 L198.0,214.8 L201.0,213.5 L204.0,212.2 L207.0,210.9 L210.0,209.6 L213.0,208.3 L216.0,207.0 L219.0,205.7 L222.0,204.4 L225.0,203.1 L228.0,201.8 L231.0,200.4 L234.0,199.1 L237.0,197.8 L240.0,196.5 L243.0,195.2 L246.0,194.0 L249.0,192.7 L252.0,191.5 L255.0,190.4 L258.0,189.3 L261.0,188.2 L264.0,187.0 L267.0,185.9 L270.0,184.7 L273.0,183.4 L276.0,182.0 L279.0,180.6 L282.0,179.2 L285.0,177.8 L288.0,176.3 L291.0,174.9 L294.0,173.5 L297.0,172.2 L300.0,170.7 L303.0,169.0 L306.0,167.2 L309.0,165.3 L312.0,163.4 L315.0,161.5 L318.0,159.7 L321.0,158.1 L324.0,156.7 L327.0,155.4 L330.0,154.3 L333.0,153.3 L336.0,152.4 L339.0,151.5 L342.0,150.7 L345.0,149.9 L348.0,149.0 L351.0,147.8 L354.0,146.1 L357.0,144.5 L360.0,142.9 L363.0,141.4 L366.0,140.7 L369.0,140.6 L372.0,141.0 L375.0,141.9 L378.0,143.1 L381.0,144.7 L384.0,146.6 L387.0,148.1 L390.0,149.0 L393.0,148.9 L396.0,148.2 L399.0,146.4 L402.0,143.9 L405.0,142.4 L408.0,142.1 L411.0,141.9 L414.0,141.6 L417.0,141.2 L420.0,140.8 L423.0,140.3 L426.0,139.8 L429.0,139.2 L432.0,138.6 L434.0,138.2 L434.0,142.4 L432.0,142.8 L429.0,143.4 L426.0,144.0 L423.0,144.5 L420.0,145.0 L417.0,145.4 L414.0,145.8 L411.0,146.1 L408.0,146.3 L405.0,146.4 L402.0,147.1 L399.0,149.5 L396.0,151.4 L393.0,152.0 L390.0,152.2 L387.0,151.2 L384.0,149.7 L381.0,148.1 L378.0,147.0 L375.0,146.3 L372.0,145.8 L369.0,145.6 L366.0,145.9 L363.0,146.6 L360.0,148.1 L357.0,149.7 L354.0,151.4 L351.0,153.1 L348.0,154.3 L345.0,155.2 L342.0,156.0 L339.0,156.8 L336.0,157.7 L333.0,158.6 L330.0,159.5 L327.0,160.6 L324.0,161.9 L321.0,163.3 L318.0,164.8 L315.0,166.6 L312.0,168.4 L309.0,170.3 L306.0,172.1 L303.0,173.9 L300.0,175.5 L297.0,176.8 L294.0,178.0 L291.0,179.2 L288.0,180.4 L285.0,181.8 L282.0,183.1 L279.0,184.5 L276.0,185.9 L273.0,187.2 L270.0,188.4 L267.0,189.6 L264.0,190.7 L261.0,191.8 L258.0,192.9 L255.0,194.0 L252.0,195.1 L249.0,196.3 L246.0,197.5 L243.0,198.7 L240.0,200.0 L237.0,201.3 L234.0,202.6 L231.0,203.9 L228.0,205.2 L225.0,206.5 L222.0,207.8 L219.0,209.1 L216.0,210.3 L213.0,211.6 L210.0,212.9 L207.0,214.2 L204.0,215.5 L201.0,216.8 L198.0,218.1 L195.0,219.4 L192.0,220.6 L189.0,221.9 L186.0,223.2 L183.0,224.4 L180.0,225.7 L177.0,226.9 L174.0,228.2 L171.0,229.4 L168.0,230.6 L165.0,231.8 L162.0,233.0 L159.0,234.2 L156.0,235.4 L153.0,236.5 L150.0,237.7 L147.0,238.8 L144.0,240.0 L141.0,241.2 L138.0,242.3 L135.0,243.5 L132.0,244.6 L129.0,245.8 L126.0,246.9 L123.0,248.1 L120.0,249.2 L117.0,250.4 L114.0,251.6 L111.0,252.7 L108.0,253.9 L105.0,255.0 L102.0,256.2 L99.0,257.3 L96.0,258.5 L93.0,259.6 L90.0,260.8 L87.0,262.0 L84.0,263.1Z" fill="#fff" fill-opacity="0.400"/>
<path d="M84.0,260.9 L87.0,259.7 L90.0,258.6 L93.0,257.4 L96.0,256.2 L99.0,255.1 L102.0,253.9 L105.0,252.7 L108.0,251.6 L111.0,250.4 L114.0,249.3 L117.0,248.1 L120.0,246.9 L123.0,245.8 L126.0,244.6 L129.0,243.5 L132.0,242.3 L135.0,241.1 L138.0,239.9 L141.0,238.8 L144.0,237.6 L147.0,236.5 L150.0,235.3 L153.0,234.1 L156.0,232.9 L159.0,231.8 L162.0,230.6 L165.0,229.4 L168.0,228.2 L171.0,226.9 L174.0,225.7 L177.0,224.4 L180.0,223.2 L183.0,221.9 L186.0,220.6 L189.0,219.4 L192.0,218.1 L195.0,216.8 L198.0,215.5 L201.0,214.2 L204.0,212.9 L207.0,211.6 L210.0,210.3 L213.0,209.0 L216.0,207.7 L219.0,206.4 L222.0,205.1 L225.0,203.8 L228.0,202.5 L231.0,201.1 L234.0,199.8 L237.0,198.5 L240.0,197.2 L243.0,195.9 L246.0,194.7 L249.0,193.4 L252.0,192.2 L255.0,191.1 L258.0,190.0 L261.0,188.9 L264.0,187.7 L267.0,186.6 L270.0,185.4 L273.0,184.1 L276.0,182.7 L279.0,181.3 L282.0,179.9 L285.0,178.5 L288.0,177.0 L291.0,175.6 L294.0,174.2 L297.0,172.9 L300.0,171.4 L303.0,169.7 L306.0,167.9 L309.0,166.0 L312.0,164.1 L315.0,162.2 L318.0,160.4 L321.0,158.8 L324.0,157.4 L327.0,156.1 L330.0,155.0 L333.0,154.0 L336.0,153.1 L339.0,152.2 L342.0,151.4 L345.0,150.6 L348.0,149.7 L351.0,148.5 L354.0,146.8 L357.0,145.2 L360.0,143.6 L363.0,142.1 L366.0,141.4 L369.0,141.3 L372.0,141.7 L375.0,142.6 L378.0,143.8 L381.0,145.4 L384.0,147.3 L387.0,148.8 L390.0,149.7 L393.0,149.6 L396.0,148.9 L399.0,147.1 L402.0,144.6 L405.0,143.1 L408.0,142.8 L411.0,142.6 L414.0,142.3 L417.0,141.9 L420.0,141.5 L423.0,141.0 L426.0,140.5 L429.0,139.9 L432.0,139.3 L434.0,138.9 L434.0,141.9 L432.0,142.3 L429.0,142.9 L426.0,143.5 L423.0,144.0 L420.0,144.5 L417.0,144.9 L414.0,145.3 L411.0,145.6 L408.0,145.8 L405.0,145.9 L402.0,146.6 L399.0,149.0 L396.0,150.9 L393.0,151.5 L390.0,151.7 L387.0,150.7 L384.0,149.2 L381.0,147.6 L378.0,146.5 L375.0,145.8 L372.0,145.3 L369.0,145.1 L366.0,145.4 L363.0,146.1 L360.0,147.6 L357.0,149.2 L354.0,150.9 L351.0,152.6 L348.0,153.8 L345.0,154.7 L342.0,155.5 L339.0,156.3 L336.0,157.2 L333.0,158.1 L330.0,159.0 L327.0,160.1 L324.0,161.4 L321.0,162.8 L318.0,164.3 L315.0,166.1 L312.0,167.9 L309.0,169.8 L306.0,171.6 L303.0,173.4 L300.0,175.0 L297.0,176.3 L294.0,177.5 L291.0,178.7 L288.0,179.9 L285.0,181.3 L282.0,182.6 L279.0,184.0 L276.0,185.4 L273.0,186.7 L270.0,187.9 L267.0,189.1 L264.0,190.2 L261.0,191.3 L258.0,192.4 L255.0,193.5 L252.0,194.6 L249.0,195.8 L246.0,197.0 L243.0,198.2 L240.0,199.5 L237.0,200.8 L234.0,202.1 L231.0,203.4 L228.0,204.7 L225.0,206.0 L222.0,207.3 L219.0,208.6 L216.0,209.8 L213.0,211.1 L210.0,212.4 L207.0,213.7 L204.0,215.0 L201.0,216.3 L198.0,217.6 L195.0,218.9 L192.0,220.1 L189.0,221.4 L186.0,222.7 L183.0,223.9 L180.0,225.2 L177.0,226.4 L174.0,227.7 L171.0,228.9 L168.0,230.1 L165.0,231.3 L162.0,232.5 L159.0,233.7 L156.0,234.9 L153.0,236.0 L150.0,237.2 L147.0,238.3 L144.0,239.5 L141.0,240.7 L138.0,241.8 L135.0,243.0 L132.0,244.1 L129.0,245.3 L126.0,246.4 L123.0,247.6 L120.0,248.7 L117.0,249.9 L114.0,251.1 L111.0,252.2 L108.0,253.4 L105.0,254.5 L102.0,255.7 L99.0,256.8 L96.0,258.0 L93.0,259.1 L90.0,260.3 L87.0,261.5 L84.0,262.6Z" fill="#fff" fill-opacity="1.000"/>
<path d="M84.0,443.3 L87.0,442.2 L90.0,441.0 L93.0,439.9 L96.0,438.7 L99.0,437.6 L102.0,436.4 L105.0,435.3 L108.0,434.1 L111.0,433.0 L114.0,431.8 L117.0,430.7 L120.0,429.5 L123.0,428.4 L126.0,427.2 L129.0,426.1 L132.0,424.9 L135.0,423.7 L138.0,422.6 L141.0,421.4 L144.0,420.3 L147.0,419.1 L150.0,417.9 L153.0,416.8 L156.0,415.6 L159.0,414.4 L162.0,413.2 L165.0,412.0 L168.0,410.7 L171.0,409.5 L174.0,408.3 L177.0,407.0 L180.0,405.7 L183.0,404.4 L186.0,403.1 L189.0,401.8 L192.0,400.5 L195.0,399.2 L198.0,397.9 L201.0,396.5 L204.0,395.2 L207.0,393.9 L210.0,392.5 L213.0,391.2 L216.0,389.9 L219.0,388.5 L222.0,387.2 L225.0,385.9 L228.0,384.5 L231.0,383.1 L234.0,381.7 L237.0,380.3 L240.0,379.0 L243.0,377.6 L246.0,376.3 L249.0,375.0 L252.0,373.7 L255.0,372.6 L258.0,371.4 L261.0,370.3 L264.0,369.1 L267.0,367.9 L270.0,366.7 L273.0,365.4 L276.0,364.0 L279.0,362.6 L282.0,361.2 L285.0,359.9 L288.0,358.5 L291.0,357.3 L294.0,356.1 L297.0,354.9 L300.0,353.6 L303.0,352.0 L306.0,350.2 L309.0,348.4 L312.0,346.5 L315.0,344.7 L318.0,342.9 L321.0,341.4 L324.0,340.0 L327.0,338.8 L330.0,337.7 L333.0,336.7 L336.0,335.9 L339.0,335.0 L342.0,334.2 L345.0,333.4 L348.0,332.6 L351.0,331.5 L354.0,329.9 L357.0,328.3 L360.0,326.9 L363.0,325.5 L366.0,324.9 L369.0,324.8 L372.0,325.3 L375.0,326.2 L378.0,327.5 L381.0,329.0 L384.0,330.9 L387.0,332.3 L390.0,333.2 L393.0,332.9 L396.0,332.3 L399.0,330.4 L402.0,327.9 L405.0,326.4 L408.0,326.0 L411.0,325.8 L414.0,325.5 L417.0,325.1 L420.0,324.7 L423.0,324.2 L426.0,323.7 L429.0,323.1 L432.0,322.5 L434.0,322.1 L434.0,326.3 L432.0,326.7 L429.0,327.3 L426.0,327.9 L423.0,328.4 L420.0,328.9 L417.0,329.3 L414.0,329.7 L411.0,330.0 L408.0,330.2 L405.0,330.4 L402.0,331.1 L399.0,333.5 L396.0,335.4 L393.0,336.1 L390.0,336.3 L387.0,335.4 L384.0,334.0 L381.0,332.5 L378.0,331.4 L375.0,330.8 L372.0,330.3 L369.0,330.1 L366.0,330.4 L363.0,331.2 L360.0,332.7 L357.0,334.3 L354.0,336.0 L351.0,337.7 L348.0,338.9 L345.0,339.8 L342.0,340.6 L339.0,341.4 L336.0,342.3 L333.0,343.2 L330.0,344.1 L327.0,345.2 L324.0,346.5 L321.0,347.9 L318.0,349.4 L315.0,351.2 L312.0,353.0 L309.0,354.9 L306.0,356.7 L303.0,358.5 L300.0,360.1 L297.0,361.4 L294.0,362.6 L291.0,363.8 L288.0,365.0 L285.0,366.4 L282.0,367.7 L279.0,369.1 L276.0,370.5 L273.0,371.8 L270.0,373.0 L267.0,374.2 L264.0,375.3 L261.0,376.4 L258.0,377.5 L255.0,378.6 L252.0,379.7 L249.0,380.8 L246.0,382.1 L243.0,383.3 L240.0,384.5 L237.0,385.8 L234.0,387.1 L231.0,388.4 L228.0,389.7 L225.0,391.0 L222.0,392.3 L219.0,393.5 L216.0,394.8 L213.0,396.1 L210.0,397.3 L207.0,398.6 L204.0,399.9 L201.0,401.2 L198.0,402.4 L195.0,403.7 L192.0,405.0 L189.0,406.2 L186.0,407.5 L183.0,408.7 L180.0,410.0 L177.0,411.2 L174.0,412.4 L171.0,413.6 L168.0,414.8 L165.0,416.0 L162.0,417.2 L159.0,418.4 L156.0,419.5 L153.0,420.7 L150.0,421.8 L147.0,423.0 L144.0,424.1 L141.0,425.2 L138.0,426.4 L135.0,427.5 L132.0,428.7 L129.0,429.8 L126.0,430.9 L123.0,432.1 L120.0,433.2 L117.0,434.3 L114.0,435.5 L111.0,436.6 L108.0,437.7 L105.0,438.9 L102.0,440.0 L99.0,441.1 L96.0,442.3 L93.0,443.4 L90.0,444.6 L87.0,445.7 L84.0,446.9Z" fill="#fff" fill-opacity="0.400"/>
<path d="M84.0,444.0 L87.0,442.9 L90.0,441.7 L93.0,440.6 L96.0,439.4 L99.0,438.3 L102.0,437.1 L105.0,436.0 L108.0,434.8 L111.0,433.7 L114.0,432.5 L117.0,431.4 L120.0,430.2 L123.0,429.1 L126.0,427.9 L129.0,426.8 L132.0,425.6 L135.0,424.4 L138.0,423.3 L141.0,422.1 L144.0,421.0 L147.0,419.8 L150.0,418.6 L153.0,417.5 L156.0,416.3 L159.0,415.1 L162.0,413.9 L165.0,412.7 L168.0,411.4 L171.0,410.2 L174.0,409.0 L177.0,407.7 L180.0,406.4 L183.0,405.1 L186.0,403.8 L189.0,402.5 L192.0,401.2 L195.0,399.9 L198.0,398.6 L201.0,397.2 L204.0,395.9 L207.0,394.6 L210.0,393.2 L213.0,391.9 L216.0,390.6 L219.0,389.2 L222.0,387.9 L225.0,386.6 L228.0,385.2 L231.0,383.8 L234.0,382.4 L237.0,381.0 L240.0,379.7 L243.0,378.3 L246.0,377.0 L249.0,375.7 L252.0,374.4 L255.0,373.3 L258.0,372.1 L261.0,371.0 L264.0,369.8 L267.0,368.6 L270.0,367.4 L273.0,366.1 L276.0,364.7 L279.0,363.3 L282.0,361.9 L285.0,360.6 L288.0,359.2 L291.0,358.0 L294.0,356.8 L297.0,355.6 L300.0,354.3 L303.0,352.7 L306.0,350.9 L309.0,349.1 L312.0,347.2 L315.0,345.4 L318.0,343.6 L321.0,342.1 L324.0,340.7 L327.0,339.5 L330.0,338.4 L333.0,337.4 L336.0,336.6 L339.0,335.7 L342.0,334.9 L345.0,334.1 L348.0,333.3 L351.0,332.2 L354.0,330.6 L357.0,329.0 L360.0,327.6 L363.0,326.2 L366.0,325.6 L369.0,325.5 L372.0,326.0 L375.0,326.9 L378.0,328.2 L381.0,329.7 L384.0,331.6 L387.0,333.0 L390.0,333.9 L393.0,333.6 L396.0,333.0 L399.0,331.1 L402.0,328.6 L405.0,327.1 L408.0,326.7 L411.0,326.5 L414.0,326.2 L417.0,325.8 L420.0,325.4 L423.0,324.9 L426.0,324.4 L429.0,323.8 L432.0,323.2 L434.0,322.8 L434.0,325.8 L432.0,326.2 L429.0,326.8 L426.0,327.4 L423.0,327.9 L420.0,328.4 L417.0,328.8 L414.0,329.2 L411.0,329.5 L408.0,329.7 L405.0,329.9 L402.0,330.6 L399.0,333.0 L396.0,334.9 L393.0,335.6 L390.0,335.8 L387.0,334.9 L384.0,333.5 L381.0,332.0 L378.0,330.9 L375.0,330.3 L372.0,329.8 L369.0,329.6 L366.0,329.9 L363.0,330.7 L360.0,332.2 L357.0,333.8 L354.0,335.5 L351.0,337.2 L348.0,338.4 L345.0,339.3 L342.0,340.1 L339.0,340.9 L336.0,341.8 L333.0,342.7 L330.0,343.6 L327.0,344.7 L324.0,346.0 L321.0,347.4 L318.0,348.9 L315.0,350.7 L312.0,352.5 L309.0,354.4 L306.0,356.2 L303.0,358.0 L300.0,359.6 L297.0,360.9 L294.0,362.1 L291.0,363.3 L288.0,364.5 L285.0,365.9 L282.0,367.2 L279.0,368.6 L276.0,370.0 L273.0,371.3 L270.0,372.5 L267.0,373.7 L264.0,374.8 L261.0,375.9 L258.0,377.0 L255.0,378.1 L252.0,379.2 L249.0,380.3 L246.0,381.6 L243.0,382.8 L240.0,384.0 L237.0,385.3 L234.0,386.6 L231.0,387.9 L228.0,389.2 L225.0,390.5 L222.0,391.8 L219.0,393.0 L216.0,394.3 L213.0,395.6 L210.0,396.8 L207.0,398.1 L204.0,399.4 L201.0,400.7 L198.0,401.9 L195.0,403.2 L192.0,404.5 L189.0,405.7 L186.0,407.0 L183.0,408.2 L180.0,409.5 L177.0,410.7 L174.0,411.9 L171.0,413.1 L168.0,414.3 L165.0,415.5 L162.0,416.7 L159.0,417.9 L156.0,419.0 L153.0,420.2 L150.0,421.3 L147.0,422.5 L144.0,423.6 L141.0,424.7 L138.0,425.9 L135.0,427.0 L132.0,428.2 L129.0,429.3 L126.0,430.4 L123.0,431.6 L120.0,432.7 L117.0,433.8 L114.0,435.0 L111.0,436.1 L108.0,437.2 L105.0,438.4 L102.0,439.5 L99.0,440.6 L96.0,441.8 L93.0,442.9 L90.0,444.1 L87.0,445.2 L84.0,446.4Z" fill="#fff" fill-opacity="1.000"/>
<path d="M84.0,456.7 L87.0,455.6 L90.0,454.4 L93.0,453.2 L96.0,452.1 L99.0,450.9 L102.0,449.7 L105.0,448.6 L108.0,447.4 L111.0,446.3 L114.0,445.1 L117.0,443.9 L120.0,442.8 L123.0,441.6 L126.0,440.4 L129.0,439.3 L132.0,438.1 L135.0,436.9 L138.0,435.7 L141.0,434.6 L144.0,433.4 L147.0,432.2 L150.0,431.1 L153.0,429.9 L156.0,428.7 L159.0,427.5 L162.0,426.3 L165.0,425.1 L168.0,423.8 L171.0,422.6 L174.0,421.3 L177.0,420.0 L180.0,418.7 L183.0,417.4 L186.0,416.1 L189.0,414.8 L192.0,413.5 L195.0,412.1 L198.0,410.8 L201.0,409.4 L204.0,408.1 L207.0,406.7 L210.0,405.4 L213.0,404.0 L216.0,402.7 L219.0,401.3 L222.0,400.0 L225.0,398.6 L228.0,397.3 L231.0,395.9 L234.0,394.5 L237.0,393.1 L240.0,391.7 L243.0,390.4 L246.0,389.1 L249.0,387.8 L252.0,386.5 L255.0,385.3 L258.0,384.1 L261.0,383.0 L264.0,381.8 L267.0,380.6 L270.0,379.3 L273.0,378.0 L276.0,376.6 L279.0,375.2 L282.0,373.8 L285.0,372.4 L288.0,371.0 L291.0,369.8 L294.0,368.6 L297.0,367.4 L300.0,366.0 L303.0,364.5 L306.0,362.7 L309.0,360.9 L312.0,359.0 L315.0,357.3 L318.0,355.5 L321.0,354.0 L324.0,352.6 L327.0,351.4 L330.0,350.3 L333.0,349.3 L336.0,348.5 L339.0,347.6 L342.0,346.8 L345.0,346.0 L348.0,345.1 L351.0,344.0 L354.0,342.3 L357.0,340.7 L360.0,339.2 L363.0,337.8 L366.0,337.1 L369.0,337.1 L372.0,337.5 L375.0,338.4 L378.0,339.7 L381.0,341.3 L384.0,343.2 L387.0,344.6 L390.0,345.5 L393.0,345.2 L396.0,344.6 L399.0,342.7 L402.0,340.2 L405.0,338.7 L408.0,338.3 L411.0,338.1 L414.0,337.8 L417.0,337.4 L420.0,337.0 L423.0,336.5 L426.0,336.0 L429.0,335.4 L432.0,334.8 L434.0,334.4 L434.0,338.6 L432.0,339.0 L429.0,339.6 L426.0,340.2 L423.0,340.7 L420.0,341.2 L417.0,341.6 L414.0,342.0 L411.0,342.3 L408.0,342.5 L405.0,342.7 L402.0,343.4 L399.0,345.8 L396.0,347.7 L393.0,348.3 L390.0,348.6 L387.0,347.7 L384.0,346.3 L381.0,344.7 L378.0,343.6 L375.0,343.0 L372.0,342.5 L369.0,342.4 L366.0,342.7 L363.0,343.5 L360.0,345.0 L357.0,346.7 L354.0,348.4 L351.0,350.2 L348.0,351.4 L345.0,352.3 L342.0,353.2 L339.0,354.0 L336.0,354.9 L333.0,355.7 L330.0,356.7 L327.0,357.7 L324.0,358.9 L321.0,360.3 L318.0,361.8 L315.0,363.5 L312.0,365.2 L309.0,367.0 L306.0,368.8 L303.0,370.5 L300.0,372.0 L297.0,373.3 L294.0,374.4 L291.0,375.5 L288.0,376.7 L285.0,378.0 L282.0,379.3 L279.0,380.7 L276.0,382.0 L273.0,383.3 L270.0,384.5 L267.0,385.7 L264.0,386.8 L261.0,387.9 L258.0,389.0 L255.0,390.1 L252.0,391.2 L249.0,392.4 L246.0,393.6 L243.0,394.9 L240.0,396.2 L237.0,397.5 L234.0,398.8 L231.0,400.1 L228.0,401.4 L225.0,402.7 L222.0,404.0 L219.0,405.3 L216.0,406.6 L213.0,407.9 L210.0,409.2 L207.0,410.5 L204.0,411.8 L201.0,413.1 L198.0,414.4 L195.0,415.7 L192.0,417.0 L189.0,418.3 L186.0,419.6 L183.0,420.8 L180.0,422.1 L177.0,423.4 L174.0,424.6 L171.0,425.8 L168.0,427.1 L165.0,428.3 L162.0,429.5 L159.0,430.6 L156.0,431.8 L153.0,433.0 L150.0,434.2 L147.0,435.3 L144.0,436.5 L141.0,437.6 L138.0,438.8 L135.0,440.0 L132.0,441.1 L129.0,442.3 L126.0,443.4 L123.0,444.6 L120.0,445.7 L117.0,446.9 L114.0,448.1 L111.0,449.2 L108.0,450.4 L105.0,451.5 L102.0,452.7 L99.0,453.8 L96.0,455.0 L93.0,456.1 L90.0,457.3 L87.0,458.5 L84.0,459.6Z" fill="#fff" fill-opacity="0.400"/>
<path d="M84.0,457.4 L87.0,456.3 L90.0,455.1 L93.0,453.9 L96.0,452.8 L99.0,451.6 L102.0,450.4 L105.0,449.3 L108.0,448.1 L111.0,447.0 L114.0,445.8 L117.0,444.6 L120.0,443.5 L123.0,442.3 L126.0,441.1 L129.0,440.0 L132.0,438.8 L135.0,437.6 L138.0,436.4 L141.0,435.3 L144.0,434.1 L147.0,432.9 L150.0,431.8 L153.0,430.6 L156.0,429.4 L159.0,428.2 L162.0,427.0 L165.0,425.8 L168.0,424.5 L171.0,423.3 L174.0,422.0 L177.0,420.7 L180.0,419.4 L183.0,418.1 L186.0,416.8 L189.0,415.5 L192.0,414.2 L195.0,412.8 L198.0,411.5 L201.0,410.1 L204.0,408.8 L207.0,407.4 L210.0,406.1 L213.0,404.7 L216.0,403.4 L219.0,402.0 L222.0,400.7 L225.0,399.3 L228.0,398.0 L231.0,396.6 L234.0,395.2 L237.0,393.8 L240.0,392.4 L243.0,391.1 L246.0,389.8 L249.0,388.5 L252.0,387.2 L255.0,386.0 L258.0,384.8 L261.0,383.7 L264.0,382.5 L267.0,381.3 L270.0,380.0 L273.0,378.7 L276.0,377.3 L279.0,375.9 L282.0,374.5 L285.0,373.1 L288.0,371.7 L291.0,370.5 L294.0,369.3 L297.0,368.1 L300.0,366.7 L303.0,365.2 L306.0,363.4 L309.0,361.6 L312.0,359.7 L315.0,358.0 L318.0,356.2 L321.0,354.7 L324.0,353.3 L327.0,352.1 L330.0,351.0 L333.0,350.0 L336.0,349.2 L339.0,348.3 L342.0,347.5 L345.0,346.7 L348.0,345.8 L351.0,344.7 L354.0,343.0 L357.0,341.4 L360.0,339.9 L363.0,338.5 L366.0,337.8 L369.0,337.8 L372.0,338.2 L375.0,339.1 L378.0,340.4 L381.0,342.0 L384.0,343.9 L387.0,345.3 L390.0,346.2 L393.0,345.9 L396.0,345.3 L399.0,343.4 L402.0,340.9 L405.0,339.4 L408.0,339.0 L411.0,338.8 L414.0,338.5 L417.0,338.1 L420.0,337.7 L423.0,337.2 L426.0,336.7 L429.0,336.1 L432.0,335.5 L434.0,335.1 L434.0,338.1 L432.0,338.5 L429.0,339.1 L426.0,339.7 L423.0,340.2 L420.0,340.7 L417.0,341.1 L414.0,341.5 L411.0,341.8 L408.0,342.0 L405.0,342.2 L402.0,342.9 L399.0,345.3 L396.0,347.2 L393.0,347.8 L390.0,348.1 L387.0,347.2 L384.0,345.8 L381.0,344.2 L378.0,343.1 L375.0,342.5 L372.0,342.0 L369.0,341.9 L366.0,342.2 L363.0,343.0 L360.0,344.5 L357.0,346.2 L354.0,347.9 L351.0,349.7 L348.0,350.9 L345.0,351.8 L342.0,352.7 L339.0,353.5 L336.0,354.4 L333.0,355.2 L330.0,356.2 L327.0,357.2 L324.0,358.4 L321.0,359.8 L318.0,361.3 L315.0,363.0 L312.0,364.7 L309.0,366.5 L306.0,368.3 L303.0,370.0 L300.0,371.5 L297.0,372.8 L294.0,373.9 L291.0,375.0 L288.0,376.2 L285.0,377.5 L282.0,378.8 L279.0,380.2 L276.0,381.5 L273.0,382.8 L270.0,384.0 L267.0,385.2 L264.0,386.3 L261.0,387.4 L258.0,388.5 L255.0,389.6 L252.0,390.7 L249.0,391.9 L246.0,393.1 L243.0,394.4 L240.0,395.7 L237.0,397.0 L234.0,398.3 L231.0,399.6 L228.0,400.9 L225.0,402.2 L222.0,403.5 L219.0,404.8 L216.0,406.1 L213.0,407.4 L210.0,408.7 L207.0,410.0 L204.0,411.3 L201.0,412.6 L198.0,413.9 L195.0,415.2 L192.0,416.5 L189.0,417.8 L186.0,419.1 L183.0,420.3 L180.0,421.6 L177.0,422.9 L174.0,424.1 L171.0,425.3 L168.0,426.6 L165.0,427.8 L162.0,429.0 L159.0,430.1 L156.0,431.3 L153.0,432.5 L150.0,433.7 L147.0,434.8 L144.0,436.0 L141.0,437.1 L138.0,438.3 L135.0,439.5 L132.0,440.6 L129.0,441.8 L126.0,442.9 L123.0,444.1 L120.0,445.2 L117.0,446.4 L114.0,447.6 L111.0,448.7 L108.0,449.9 L105.0,451.0 L102.0,452.2 L99.0,453.3 L96.0,454.5 L93.0,455.6 L90.0,456.8 L87.0,458.0 L84.0,459.1Z" fill="#fff" fill-opacity="1.000"/>
</g>
</g>
<g>
<path d="M84.0,339.1 L87.0,338.3 L90.0,337.5 L93.0,336.7 L96.0,335.9 L99.0,335.1 L102.0,334.1 L105.0,333.2 L108.0,332.2 L111.0,331.2 L114.0,330.2 L117.0,329.3 L120.0,328.5 L123.0,327.6 L126.0,326.8 L129.0,326.0 L132.0,325.1 L135.0,324.2 L138.0,323.4 L141.0,322.4 L144.0,321.5 L147.0,320.6 L150.0,319.7 L153.0,318.8 L156.0,317.8 L159.0,316.8 L162.0,315.6 L165.0,314.4 L168.0,313.2 L171.0,312.0 L174.0,310.8 L177.0,309.6 L180.0,308.3 L183.0,307.1 L186.0,305.8 L189.0,304.6 L192.0,303.3 L195.0,302.0 L198.0,300.7 L201.0,299.5 L204.0,298.2 L207.0,296.9 L210.0,295.6 L213.0,294.3 L216.0,293.0 L219.0,291.8 L222.0,290.5 L225.0,289.2 L228.0,287.9 L231.0,286.6 L234.0,285.3 L237.0,284.0 L240.0,282.7 L243.0,281.5 L246.0,280.3 L249.0,279.1 L252.0,277.9 L255.0,276.8 L258.0,275.7 L261.0,274.7 L264.0,273.6 L267.0,272.5 L270.0,271.3 L273.0,270.1 L276.0,268.8 L279.0,267.5 L282.0,266.2 L285.0,264.8 L288.0,263.6 L291.0,262.3 L294.0,261.2 L297.0,260.1 L300.0,258.8 L303.0,257.2 L306.0,255.5 L309.0,253.7 L312.0,251.9 L315.0,250.1 L318.0,248.4 L321.0,246.9 L324.0,245.6 L327.0,244.4 L330.0,243.3 L333.0,242.4 L336.0,241.6 L339.0,240.8 L342.0,240.0 L345.0,239.2 L348.0,238.2 L351.0,236.9 L354.0,235.1 L357.0,233.5 L360.0,232.4 L363.0,231.2 L366.0,230.4 L369.0,229.7 L372.0,229.5 L375.0,229.8 L378.0,230.6 L381.0,231.9 L384.0,233.6 L387.0,234.7 L390.0,234.7 L393.0,233.5 L396.0,232.4 L399.0,230.4 L402.0,229.0 L405.0,230.5 L408.0,232.2 L411.0,232.6 L414.0,232.3 L417.0,232.0 L420.0,231.7 L423.0,231.2 L426.0,230.7 L429.0,230.1 L432.0,229.5 L434.0,229.0 L434.0,234.7 L432.0,235.1 L429.0,235.6 L426.0,236.1 L423.0,236.6 L420.0,237.0 L417.0,237.3 L414.0,237.7 L411.0,238.0 L408.0,238.1 L405.0,238.2 L402.0,239.0 L399.0,241.4 L396.0,243.2 L393.0,243.9 L390.0,244.1 L387.0,243.2 L384.0,241.8 L381.0,240.3 L378.0,239.2 L375.0,238.6 L372.0,238.2 L369.0,238.1 L366.0,238.6 L363.0,239.6 L360.0,241.3 L357.0,243.1 L354.0,245.0 L351.0,246.9 L348.0,248.4 L345.0,249.4 L342.0,250.4 L339.0,251.2 L336.0,252.1 L333.0,253.0 L330.0,253.9 L327.0,255.0 L324.0,256.3 L321.0,257.7 L318.0,259.2 L315.0,261.0 L312.0,262.8 L309.0,264.7 L306.0,266.5 L303.0,268.3 L300.0,269.9 L297.0,271.2 L294.0,272.4 L291.0,273.6 L288.0,274.8 L285.0,276.2 L282.0,277.5 L279.0,278.9 L276.0,280.3 L273.0,281.6 L270.0,282.8 L267.0,284.0 L264.0,285.1 L261.0,286.2 L258.0,287.3 L255.0,288.4 L252.0,289.5 L249.0,290.6 L246.0,291.9 L243.0,293.1 L240.0,294.3 L237.0,295.6 L234.0,296.9 L231.0,298.2 L228.0,299.5 L225.0,300.8 L222.0,302.1 L219.0,303.3 L216.0,304.6 L213.0,305.9 L210.0,307.1 L207.0,308.4 L204.0,309.7 L201.0,311.0 L198.0,312.2 L195.0,313.5 L192.0,314.8 L189.0,316.0 L186.0,317.3 L183.0,318.5 L180.0,319.8 L177.0,321.0 L174.0,322.2 L171.0,323.4 L168.0,324.6 L165.0,325.8 L162.0,327.0 L159.0,328.2 L156.0,329.3 L153.0,330.5 L150.0,331.6 L147.0,332.8 L144.0,333.9 L141.0,335.0 L138.0,336.2 L135.0,337.3 L132.0,338.5 L129.0,339.6 L126.0,340.7 L123.0,341.9 L120.0,343.0 L117.0,344.1 L114.0,345.3 L111.0,346.4 L108.0,347.5 L105.0,348.7 L102.0,349.8 L99.0,350.9 L96.0,352.1 L93.0,353.2 L90.0,354.4 L87.0,355.5 L84.0,356.7Z" fill="#fff" fill-opacity="0.420"/>
<path d="M84.0,339.8 L87.0,339.0 L90.0,338.2 L93.0,337.4 L96.0,336.6 L99.0,335.8 L102.0,334.8 L105.0,333.9 L108.0,332.9 L111.0,331.9 L114.0,330.9 L117.0,330.0 L120.0,329.2 L123.0,328.3 L126.0,327.5 L129.0,326.7 L132.0,325.8 L135.0,324.9 L138.0,324.1 L141.0,323.1 L144.0,322.2 L147.0,321.3 L150.0,320.4 L153.0,319.5 L156.0,318.5 L159.0,317.5 L162.0,316.3 L165.0,315.1 L168.0,313.9 L171.0,312.7 L174.0,311.5 L177.0,310.3 L180.0,309.0 L183.0,307.8 L186.0,306.5 L189.0,305.3 L192.0,304.0 L195.0,302.7 L198.0,301.4 L201.0,300.2 L204.0,298.9 L207.0,297.6 L210.0,296.3 L213.0,295.0 L216.0,293.7 L219.0,292.5 L222.0,291.2 L225.0,289.9 L228.0,288.6 L231.0,287.3 L234.0,286.0 L237.0,284.7 L240.0,283.4 L243.0,282.2 L246.0,281.0 L249.0,279.8 L252.0,278.6 L255.0,277.5 L258.0,276.4 L261.0,275.4 L264.0,274.3 L267.0,273.2 L270.0,272.0 L273.0,270.8 L276.0,269.5 L279.0,268.2 L282.0,266.9 L285.0,265.5 L288.0,264.3 L291.0,263.0 L294.0,261.9 L297.0,260.8 L300.0,259.5 L303.0,257.9 L306.0,256.2 L309.0,254.4 L312.0,252.6 L315.0,250.8 L318.0,249.1 L321.0,247.6 L324.0,246.3 L327.0,245.1 L330.0,244.0 L333.0,243.1 L336.0,242.3 L339.0,241.5 L342.0,240.7 L345.0,239.9 L348.0,238.9 L351.0,237.6 L354.0,235.8 L357.0,234.2 L360.0,233.1 L363.0,231.9 L366.0,231.1 L369.0,230.4 L372.0,230.2 L375.0,230.5 L378.0,231.3 L381.0,232.6 L384.0,234.3 L387.0,235.4 L390.0,235.4 L393.0,234.2 L396.0,233.1 L399.0,231.1 L402.0,229.7 L405.0,231.2 L408.0,232.9 L411.0,233.3 L414.0,233.0 L417.0,232.7 L420.0,232.4 L423.0,231.9 L426.0,231.4 L429.0,230.8 L432.0,230.2 L434.0,229.7 L434.0,234.2 L432.0,234.6 L429.0,235.1 L426.0,235.6 L423.0,236.1 L420.0,236.5 L417.0,236.8 L414.0,237.2 L411.0,237.5 L408.0,237.6 L405.0,237.7 L402.0,238.5 L399.0,240.9 L396.0,242.7 L393.0,243.4 L390.0,243.6 L387.0,242.7 L384.0,241.3 L381.0,239.8 L378.0,238.7 L375.0,238.1 L372.0,237.7 L369.0,237.6 L366.0,238.1 L363.0,239.1 L360.0,240.8 L357.0,242.6 L354.0,244.5 L351.0,246.4 L348.0,247.9 L345.0,248.9 L342.0,249.9 L339.0,250.7 L336.0,251.6 L333.0,252.5 L330.0,253.4 L327.0,254.5 L324.0,255.8 L321.0,257.2 L318.0,258.7 L315.0,260.5 L312.0,262.3 L309.0,264.2 L306.0,266.0 L303.0,267.8 L300.0,269.4 L297.0,270.7 L294.0,271.9 L291.0,273.1 L288.0,274.3 L285.0,275.7 L282.0,277.0 L279.0,278.4 L276.0,279.8 L273.0,281.1 L270.0,282.3 L267.0,283.5 L264.0,284.6 L261.0,285.7 L258.0,286.8 L255.0,287.9 L252.0,289.0 L249.0,290.1 L246.0,291.4 L243.0,292.6 L240.0,293.8 L237.0,295.1 L234.0,296.4 L231.0,297.7 L228.0,299.0 L225.0,300.3 L222.0,301.6 L219.0,302.8 L216.0,304.1 L213.0,305.4 L210.0,306.6 L207.0,307.9 L204.0,309.2 L201.0,310.5 L198.0,311.7 L195.0,313.0 L192.0,314.3 L189.0,315.5 L186.0,316.8 L183.0,318.0 L180.0,319.3 L177.0,320.5 L174.0,321.7 L171.0,322.9 L168.0,324.1 L165.0,325.3 L162.0,326.5 L159.0,327.7 L156.0,328.8 L153.0,330.0 L150.0,331.1 L147.0,332.3 L144.0,333.4 L141.0,334.5 L138.0,335.7 L135.0,336.8 L132.0,338.0 L129.0,339.1 L126.0,340.2 L123.0,341.4 L120.0,342.5 L117.0,343.6 L114.0,344.8 L111.0,345.9 L108.0,347.0 L105.0,348.2 L102.0,349.3 L99.0,350.4 L96.0,351.6 L93.0,352.7 L90.0,353.9 L87.0,355.0 L84.0,356.2Z" fill="#fff" fill-opacity="1.000"/>
</g>
<g>
<ellipse cx="400.8" cy="129.6" rx="2.9" ry="2.8" fill="#fff" fill-opacity="0.4"/><ellipse cx="400.8" cy="129.6" rx="1.7" ry="1.7" fill="#fff"/>
<ellipse cx="400.8" cy="141.8" rx="2.9" ry="2.8" fill="#fff" fill-opacity="0.4"/><ellipse cx="400.8" cy="141.8" rx="1.7" ry="1.7" fill="#fff"/>
<ellipse cx="400.8" cy="325.8" rx="2.9" ry="2.8" fill="#fff" fill-opacity="0.4"/><ellipse cx="400.8" cy="325.8" rx="1.7" ry="1.7" fill="#fff"/>
<ellipse cx="400.8" cy="338.1" rx="2.9" ry="2.8" fill="#fff" fill-opacity="0.4"/><ellipse cx="400.8" cy="338.1" rx="1.7" ry="1.7" fill="#fff"/>
</g>
<g filter="url(#b4)">
<ellipse cx="388.5" cy="144.5" rx="11" ry="12" fill="#fff" fill-opacity="0.16"/>
<ellipse cx="388.5" cy="340.7" rx="11" ry="12" fill="#fff" fill-opacity="0.16"/>
</g>
</g>
</g>
</g>
<rect x="85.5" y="63.5" width="554.0" height="420.0" fill="none" stroke="#e6e6e6" stroke-width="1"/>
<path d="M88.5,63.5 L88.5,66.0 M99.5,63.5 L99.5,66.0 M110.5,63.5 L110.5,66.0 M121.5,63.5 L121.5,66.0 M132.5,63.5 L132.5,69.0 M143.5,63.5 L143.5,66.0 M154.5,63.5 L154.5,66.0 M165.5,63.5 L165.5,66.0 M176.5,63.5 L176.5,66.0 M187.5,63.5 L187.5,69.0 M198.5,63.5 L198.5,66.0 M209.5,63.5 L209.5,66.0 M220.5,63.5 L220.5,66.0 M231.5,63.5 L231.5,66.0 M242.5,63.5 L242.5,69.0 M253.5,63.5 L253.5,66.0 M264.5,63.5 L264.5,66.0 M275.5,63.5 L275.5,66.0 M286.5,63.5 L286.5,66.0 M297.5,63.5 L297.5,69.0 M308.5,63.5 L308.5,66.0 M319.5,63.5 L319.5,66.0 M330.5,63.5 L330.5,66.0 M341.5,63.5 L341.5,66.0 M352.5,63.5 L352.5,69.0 M363.5,63.5 L363.5,66.0 M374.5,63.5 L374.5,66.0 M385.5,63.5 L385.5,66.0 M396.5,63.5 L396.5,66.0 M407.5,63.5 L407.5,69.0 M418.5,63.5 L418.5,66.0 M428.5,63.5 L428.5,66.0 M439.5,63.5 L439.5,66.0 M450.5,63.5 L450.5,66.0 M461.5,63.5 L461.5,69.0 M472.5,63.5 L472.5,66.0 M483.5,63.5 L483.5,66.0 M494.5,63.5 L494.5,66.0 M505.5,63.5 L505.5,66.0 M516.5,63.5 L516.5,69.0 M527.5,63.5 L527.5,66.0 M538.5,63.5 L538.5,66.0 M549.5,63.5 L549.5,66.0 M560.5,63.5 L560.5,66.0 M571.5,63.5 L571.5,69.0 M582.5,63.5 L582.5,66.0 M593.5,63.5 L593.5,66.0 M604.5,63.5 L604.5,66.0 M615.5,63.5 L615.5,66.0 M626.5,63.5 L626.5,69.0 M637.5,63.5 L637.5,66.0 M639.5,476.5 L637.0,476.5 M639.5,464.5 L637.0,464.5 M639.5,452.5 L634.0,452.5 M639.5,439.5 L637.0,439.5 M639.5,427.5 L637.0,427.5 M639.5,415.5 L637.0,415.5 M639.5,403.5 L637.0,403.5 M639.5,390.5 L634.0,390.5 M639.5,378.5 L637.0,378.5 M639.5,366.5 L637.0,366.5 M639.5,354.5 L637.0,354.5 M639.5,341.5 L637.0,341.5 M639.5,329.5 L634.0,329.5 M639.5,317.5 L637.0,317.5 M639.5,305.5 L637.0,305.5 M639.5,292.5 L637.0,292.5 M639.5,280.5 L637.0,280.5 M639.5,268.5 L634.0,268.5 M639.5,256.5 L637.0,256.5 M639.5,243.5 L637.0,243.5 M639.5,231.5 L637.0,231.5 M639.5,219.5 L637.0,219.5 M639.5,207.5 L634.0,207.5 M639.5,194.5 L637.0,194.5 M639.5,182.5 L637.0,182.5 M639.5,170.5 L637.0,170.5 M639.5,158.5 L637.0,158.5 M639.5,146.5 L634.0,146.5 M639.5,133.5 L637.0,133.5 M639.5,121.5 L637.0,121.5 M639.5,109.5 L637.0,109.5 M639.5,97.5 L637.0,97.5 M639.5,84.5 L634.0,84.5 M639.5,72.5 L637.0,72.5 M85.5,476.5 L88.0,476.5 M85.5,463.5 L91.0,463.5 M85.5,451.5 L88.0,451.5 M85.5,439.5 L88.0,439.5 M85.5,427.5 L88.0,427.5 M85.5,414.5 L88.0,414.5 M85.5,402.5 L91.0,402.5 M85.5,390.5 L88.0,390.5 M85.5,378.5 L88.0,378.5 M85.5,366.5 L88.0,366.5 M85.5,353.5 L88.0,353.5 M85.5,341.5 L91.0,341.5 M85.5,329.5 L88.0,329.5 M85.5,317.5 L88.0,317.5 M85.5,304.5 L88.0,304.5 M85.5,292.5 L88.0,292.5 M85.5,280.5 L91.0,280.5 M85.5,268.5 L88.0,268.5 M85.5,256.5 L88.0,256.5 M85.5,243.5 L88.0,243.5 M85.5,231.5 L88.0,231.5 M85.5,219.5 L91.0,219.5 M85.5,207.5 L88.0,207.5 M85.5,194.5 L88.0,194.5 M85.5,182.5 L88.0,182.5 M85.5,170.5 L88.0,170.5 M85.5,158.5 L91.0,158.5 M85.5,146.5 L88.0,146.5 M85.5,133.5 L88.0,133.5 M85.5,121.5 L88.0,121.5 M85.5,109.5 L88.0,109.5 M85.5,97.5 L91.0,97.5 M85.5,84.5 L88.0,84.5 M85.5,72.5 L88.0,72.5 M103.5,483.5 L103.5,478.0 M169.5,483.5 L169.5,481.0 M235.5,483.5 L235.5,481.0 M301.5,483.5 L301.5,481.0 M367.5,483.5 L367.5,481.0 M432.5,483.5 L432.5,478.0 M498.5,483.5 L498.5,481.0 M564.5,483.5 L564.5,481.0 M630.5,483.5 L630.5,481.0" stroke="#ececec" stroke-width="1" fill="none"/>
<g opacity="0.93">
<text x="133.1" y="57.2" text-anchor="middle">1500</text>
<text x="188.0" y="57.2" text-anchor="middle">1550</text>
<text x="242.8" y="57.2" text-anchor="middle">1600</text>
<text x="297.7" y="57.2" text-anchor="middle">1650</text>
<text x="352.5" y="57.2" text-anchor="middle">1700</text>
<text x="407.4" y="57.2" text-anchor="middle">1750</text>
<text x="462.2" y="57.2" text-anchor="middle">1800</text>
<text x="517.0" y="57.2" text-anchor="middle">1850</text>
<text x="571.9" y="57.2" text-anchor="middle">1900</text>
<text x="626.8" y="57.2" text-anchor="middle">1950</text>
<text x="652.6" y="452.1" text-anchor="middle" transform="rotate(-90 652.6 452.1)">2800</text>
<text x="652.6" y="390.9" text-anchor="middle" transform="rotate(-90 652.6 390.9)">2850</text>
<text x="652.6" y="329.7" text-anchor="middle" transform="rotate(-90 652.6 329.7)">2900</text>
<text x="652.6" y="268.4" text-anchor="middle" transform="rotate(-90 652.6 268.4)">2950</text>
<text x="652.6" y="207.2" text-anchor="middle" transform="rotate(-90 652.6 207.2)">3000</text>
<text x="652.6" y="146.0" text-anchor="middle" transform="rotate(-90 652.6 146.0)">3050</text>
<text x="652.6" y="84.8" text-anchor="middle" transform="rotate(-90 652.6 84.8)">3100</text>
<text x="79.2" y="97.2" text-anchor="middle" transform="rotate(-90 79.2 97.2)">0.015</text>
<text x="79.2" y="158.3" text-anchor="middle" transform="rotate(-90 79.2 158.3)">0.01</text>
<text x="79.2" y="218.3" text-anchor="middle" transform="rotate(-90 79.2 218.3)" textLength="34.8" lengthAdjust="spacing">5×10<tspan dy="-5.0" font-size="8.2"><tspan font-size="12">-</tspan>3</tspan></text>
<text x="79.2" y="280.5" text-anchor="middle" transform="rotate(-90 79.2 280.5)">0</text>
<text x="79.2" y="340.0" text-anchor="middle" transform="rotate(-90 79.2 340.0)" textLength="41" lengthAdjust="spacing"><tspan font-size="15.5">-</tspan>5×10<tspan dy="-5.0" font-size="8.2"><tspan font-size="12">-</tspan>3</tspan></text>
<text x="79.2" y="402.6" text-anchor="middle" transform="rotate(-90 79.2 402.6)" textLength="26.3" lengthAdjust="spacing"><tspan font-size="15.5">-</tspan>0.01</text>
<text x="79.2" y="458.5" text-anchor="middle" transform="rotate(-90 79.2 458.5)" textLength="32.9" lengthAdjust="spacing"><tspan font-size="15.5">-</tspan>0.015</text>
<text x="106.3" y="497.6" text-anchor="middle">20:15</text>
<text x="435.3" y="497.6" text-anchor="middle">20:20</text>
<text x="362.8" y="517.4" text-anchor="middle" textLength="110.5" lengthAdjust="spacing">UT Date: 2019<tspan font-size="15.5">-</tspan>09<tspan font-size="15.5">-</tspan>06</text>
<text x="64.8" y="273.4" text-anchor="middle" transform="rotate(-90 64.8 273.4)" textLength="134.7" lengthAdjust="spacing">Frequency <tspan font-size="15.5">-</tspan> 2284.544 MHz</text>
</g>
</svg>
<div style="position:absolute;left:-1px;top:0;width:3px;height:3px;background:#f6f6f6"></div>
<div id="titlebar">
<div id="title">PGPLOT Window 1</div>
<svg width="680" height="19" viewBox="0 0 680 19" style="position:absolute;left:-1px;top:-1px">
<path d="M8.7,9.7 L15.3,9.7 L12,14 Z" fill="#f6f6f6"/>
<path d="M8.7,8.7 L15.3,8.7 L12,13 Z" fill="#6c6c6c"/>
<g stroke="#f4f4f4" stroke-width="1.3" fill="none"><path d="M642,11.4 H648"/><path d="M659.5,11.4 H666 M662.7,8.2 V14.4"/><path d="M677.4,8.4 L681,11.6 L677.4,14.8"/></g>
<g stroke="#707070" stroke-width="1.3" fill="none"><path d="M642,10.4 H648"/><path d="M659.5,10.4 H666 M662.7,7.2 V13.5"/><path d="M677.4,7.3 L681,10.4 L677.4,13.6"/></g>
</svg>
</div>
</div>
</body>
</html>
